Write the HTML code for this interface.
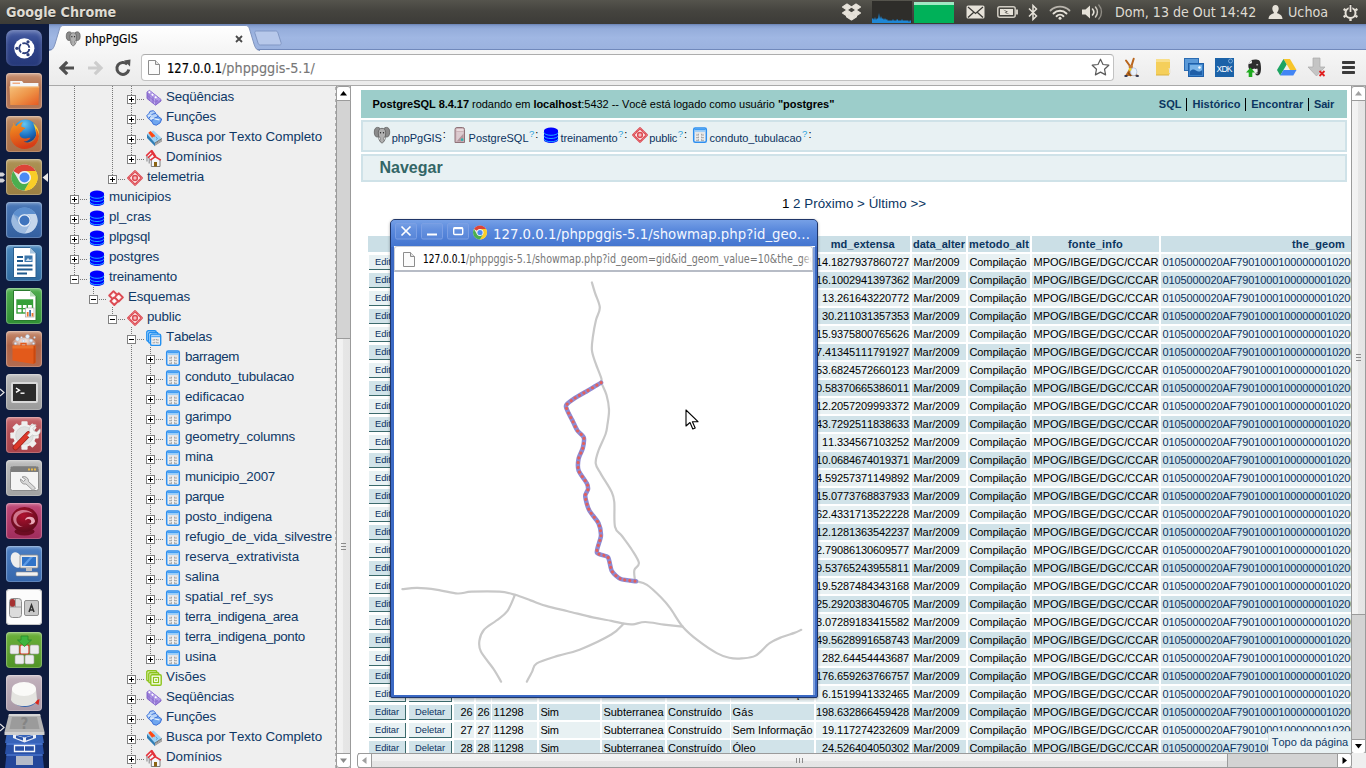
<!DOCTYPE html>
<html lang="pt-BR">
<head>
<meta charset="utf-8">
<title>phpPgGIS</title>
<style>
*{box-sizing:border-box;margin:0;padding:0}
html,body{width:1366px;height:768px;overflow:hidden;background:#fff}
body{position:relative;font-family:"Liberation Sans",sans-serif;font-size:11px;color:#000;font-kerning:none}
.abs{position:absolute}
.ui{font-family:"DejaVu Sans Condensed","DejaVu Sans","Liberation Sans",sans-serif;white-space:nowrap}
.sx{display:inline-block;transform-origin:0 50%;white-space:nowrap}
svg{display:block;overflow:visible}
/* top panel */
#panel{left:0;top:0;width:1366px;height:24px;background:linear-gradient(#55544d 0,#45443f 45%,#3c3b37 100%);color:#dfdbd2}
#panel .t{position:absolute;top:0;height:24px;line-height:24px;color:#dfdbd2}
/* launcher */
#launcher{left:0;top:24px;width:49px;height:744px;background:#0e1b3e}
.tile{position:absolute;left:5.700px;width:36.5px;height:36px;border-radius:4px;box-shadow:inset 0 0 0 1px rgba(255,255,255,.2),inset 0 2px 3px rgba(255,255,255,.3)}
/* chrome */
#tabstrip{left:49px;top:24px;width:1317px;height:26px;background:linear-gradient(#6a82b3 0,#869fd0 8%,#95addb 20%,#a0b7e3 55%,#9bb2df 100%);border-bottom:1px solid #7189bb}
#toolbar{left:49px;top:50px;width:1317px;height:36px;background:linear-gradient(#f6f6f6,#ebebeb);border-bottom:1px solid #a9a9a9}
#omni{left:141px;top:54px;width:973px;height:27px;background:#fff;border:1px solid #c2c2c2;border-top-color:#adadad;border-radius:4px}
/* frames */
#left{left:49px;top:86px;width:287px;height:682px;background:#efefef;overflow:hidden;font-size:13.33px;color:#003366}
#right{left:351px;top:86px;width:1000px;height:667px;background:#fff;overflow:hidden}
.vl{position:absolute;width:1px;background-image:linear-gradient(#777 50%,rgba(0,0,0,0) 50%);background-size:1px 2px}
.hl{position:absolute;height:1px;background-image:linear-gradient(90deg,#777 50%,rgba(0,0,0,0) 50%);background-size:2px 1px}
.ex{position:absolute;width:9px;height:9px;border:1px solid #808080;background:#fff}
.ex:before{content:"";position:absolute;left:1px;top:3px;width:5px;height:1px;background:#000}
.ex.p:after{content:"";position:absolute;left:3px;top:1px;width:1px;height:5px;background:#000}
.tt{position:absolute;height:20px;line-height:20px;white-space:nowrap;color:#0e3866}
.ic{position:absolute;width:16px;height:16px}
.sep{display:inline-block;width:1px;height:13px;background:#000;margin:0 5.200px 0 4.600px;vertical-align:-2.500px}
</style>
</head>
<body>
<!-- ===== Ubuntu top panel ===== -->
<div id="panel" class="abs ui">
  <div class="t" style="left:6px;top:-.3px;font-size:14.200px;font-weight:bold;text-shadow:0 1px 0 rgba(0,0,0,.45)"><span class="sx" style="transform:scaleX(1)">Google Chrome</span></div>
  <!-- dropbox -->
  <svg class="abs" style="left:842px;top:4px" width="19" height="17" viewBox="0 0 19 17"><g fill="#e6e2d9" stroke="#e6e2d9" stroke-width="1.100" stroke-linejoin="round"><path d="M5 0l4.500 3L5 6 .5 3z"/><path d="M14 0l4.500 3L14 6 9.500 3z"/><path d="M5 6l4.500 3L5 12 .5 9z"/><path d="M14 6l4.500 3L14 12 9.500 9z"/><path d="M9.500 10l3.500 2.300 1.500-1v1.500l-5 3.200-5-3.200v-1.500l1.500 1z"/></g></svg>
  <!-- cpu graph -->
  <div class="abs" style="left:872px;top:1px;width:40px;height:22px;background:#2e2d2a">
    <svg width="40" height="22" viewBox="0 0 40 22"><path d="M0 22V18l1-1 1 2 1-3 1 3 1-2 1 1 1-6 1 6 1-3 1 3 1-1 1 2 1-2 1 2 1-1 1 2 1-1 1 1 1-1 1 1 1-2 1 2 1-1 1 1 1-2 1 1 1 1 1-1 1 1 1-2 1 2 1-1 1 1 1-1 1 1 1-1 1 2 1-2 1 1V22z" fill="#1e87d6"/></svg>
  </div>
  <!-- mem graph -->
  <div class="abs" style="left:914px;top:2px;width:40px;height:21px;background:#00b159;border-top:3px solid #9fe8c4"></div>
  <!-- mail -->
  <svg class="abs" style="left:966px;top:5px" width="19" height="14" viewBox="0 0 19 14"><rect x=".5" y=".5" width="18" height="13" rx="1.500" fill="#e6e2d9"/><path d="M2 2l7.500 6.500L17 2M2 12.500l5.500-5M17 12.500l-5.500-5" stroke="#3c3b37" stroke-width="1.300" fill="none"/></svg>
  <!-- battery -->
  <svg class="abs" style="left:997px;top:6px" width="21" height="12" viewBox="0 0 21 12"><rect x=".8" y=".8" width="17.400" height="10.400" rx="2" fill="none" stroke="#cfcbc2" stroke-width="1.500"/><rect x="19" y="3.500" width="2" height="5" fill="#cfcbc2"/><rect x="3" y="3" width="13" height="6" fill="#e6e2d9"/><path d="M6 3.500l5 2.300-2 .7 4 2-5.500-1.800 2-.8z" fill="#3c3b37"/></svg>
  <!-- bluetooth -->
  <svg class="abs" style="left:1028px;top:4px" width="10" height="17" viewBox="0 0 10 17"><path d="M1 4.500l7.500 7.500L5 15.500V1.500L8.500 5 1 12.500" fill="none" stroke="#e6e2d9" stroke-width="1.500"/></svg>
  <!-- wifi -->
  <svg class="abs" style="left:1049px;top:5px" width="22" height="15" viewBox="0 0 22 15"><g fill="none" stroke="#e6e2d9" stroke-linecap="round"><path d="M1.500 5.500a13.500 13.500 0 0 1 19 0" stroke-width="1.800" stroke="#b9b5ad"/><path d="M4.500 8.500a9.200 9.200 0 0 1 13 0" stroke-width="1.900"/><path d="M7.500 11.200a5 5 0 0 1 7 0" stroke-width="1.900"/></g><circle cx="11" cy="13.300" r="1.500" fill="#e6e2d9"/></svg>
  <!-- sound -->
  <svg class="abs" style="left:1082px;top:4px" width="22" height="16" viewBox="0 0 22 16"><path d="M0 5.500h3.500L8 1.500v13L3.500 10.500H0z" fill="#e6e2d9"/><g fill="none" stroke-linecap="round"><path d="M10.500 5a4.500 4.500 0 0 1 0 6" stroke="#e6e2d9" stroke-width="1.600"/><path d="M13.500 3a7.500 7.500 0 0 1 0 10" stroke="#d0ccc3" stroke-width="1.500"/><path d="M16.800 1a10.500 10.500 0 0 1 0 14" stroke="#8f8c85" stroke-width="1.400"/></g></svg>
  <div class="t" style="left:1115px;font-size:14.500px"><span class="sx" style="transform:scaleX(.97)">Dom, 13 de Out 14:42</span></div>
  <!-- user -->
  <svg class="abs" style="left:1268px;top:5px" width="15" height="14" viewBox="0 0 15 14"><path d="M7.500 0c2 0 3.200 1.500 3.200 3.600 0 1.500-.6 2.900-1.500 3.700v1c2.500.8 5.300 2.200 5.300 5.700H.5c0-3.500 2.800-4.900 5.300-5.700v-1C4.900 6.500 4.300 5.100 4.300 3.600 4.300 1.500 5.500 0 7.500 0z" fill="#e6e2d9"/></svg>
  <div class="t" style="left:1288px;font-size:14.500px"><span class="sx" style="transform:scaleX(.98)">Uchoa</span></div>
  <!-- power cog -->
  <svg class="abs" style="left:1342px;top:4px" width="17" height="17" viewBox="0 0 17 17"><g fill="none" stroke="#e6e2d9"><circle cx="8.500" cy="9" r="5" stroke-width="2"/><path d="M8.500 1v2.500M8.500 14.500V17M1.600 5l2 1.200M13.400 11.800l2 1.200M1.600 13l2-1.200M13.400 6.200l2-1.200" stroke-width="2.400"/></g><rect x="6.700" y="0" width="3.600" height="9" fill="#3c3b37"/><rect x="7.600" y="1" width="1.800" height="7" fill="#e6e2d9"/></svg>
</div>
<!-- ===== Unity launcher ===== -->
<div id="launcher" class="abs">
<div class="tile" style="top:6px;background:linear-gradient(#4a60a6,#2f448b 40%,#26397a);box-shadow:inset 0 2px 4px rgba(255,255,255,.3);border-radius:7px"><svg width="37" height="37" viewBox="0 0 37 37"><g transform="translate(18.300,18.300) scale(1.16) translate(-18.500,-18)"><circle cx="18.500" cy="18" r="8.700" fill="#fff"/><circle cx="18.500" cy="18" r="4.300" fill="none" stroke="#2d3f7d" stroke-width="1.700"/><g fill="#2d3f7d"><circle cx="12.100" cy="18" r="1.400"/><circle cx="21.700" cy="12.450" r="1.400"/><circle cx="21.700" cy="23.550" r="1.400"/></g><g stroke="#fff" stroke-width="1.100"><path d="M18.500 18L25.200 18M18.500 18L15.150 12.200M18.500 18L15.150 23.800"/></g><circle cx="18.500" cy="18" r="3.200" fill="#fff"/></g></svg></div>
<div class="tile" style="top:49px;background:linear-gradient(#c99273,#b07050 40%,#b57655);"><svg width="37" height="37" viewBox="0 0 37 37"><defs><linearGradient id="gfo" x1="0" y1="0" x2="1" y2="1"><stop offset="0" stop-color="#f5c07a"/><stop offset=".5" stop-color="#ee9448"/><stop offset="1" stop-color="#e65a22"/></linearGradient></defs><path d="M4.300 8h11.700l1.500 2h14.900v5H4.300z" fill="#f4f5f7"/><path d="M6.500 10.200h7.500" stroke="#f0935a" stroke-width="1.100"/><path d="M3.500 13.500h29.700l-.8 18.600H4.300z" fill="url(#gfo)"/><path d="M3.500 13.500h29.700v.9H3.500z" fill="#f8cf9a" opacity=".8"/></svg></div>
<div class="tile" style="top:92px;background:linear-gradient(#c18f69,#b07a52 40%,#a86f48);"><svg width="37" height="37" viewBox="0 0 37 37"><defs><radialGradient id="gffb" cx=".45" cy=".2" r=".9"><stop offset="0" stop-color="#63c6f2"/><stop offset=".55" stop-color="#1e74c4"/><stop offset="1" stop-color="#16336f"/></radialGradient><linearGradient id="gffo" x1="0" y1="0" x2=".3" y2="1"><stop offset="0" stop-color="#f59a22"/><stop offset="1" stop-color="#d63c17"/></linearGradient></defs><circle cx="19.500" cy="15" r="11.500" fill="url(#gffb)"/><path d="M27 7C31 10 33.500 15 33 20.500 32.500 24 31 27 28.500 29 30.500 25 31 20 29.500 14 29 11.500 28 9 27 7z" fill="#fbd42c"/><path d="M7 6.500C8 8 9 9.500 10.500 10 12 8 14.500 6.500 17 6 15.500 8 15 9.500 15.500 11 17 11 18.500 11.500 19.500 12.500 17.500 13 16.500 14 16 15.500 14.500 16 13.500 17 13.500 18.500 14 21.500 17 23 20 22.500 22 22 23.500 21.500 24.500 22 23 24.500 20 26 17.500 25.500 21 28 26 27 28.500 23.500 30.500 20.500 31 16 29.500 12 31.500 14 33 17.500 33 20.500 32.500 27.500 26.500 33 18.500 33 10.500 33 4 26.500 4 18.500 4 14.500 5.500 11 7.500 9 7 8 6.800 7.500 7 6.500z" fill="url(#gffo)"/></svg></div>
<div class="tile" style="top:135px;background:linear-gradient(#ad9254,#9a7f43);"><svg width="37" height="37" viewBox="0 0 37 37"><circle cx="18.500" cy="18.500" r="13" fill="#e8e8e8"/><path d="M18.500 5.500a13 13 0 0 1 11.260 6.500H18.500a6.500 6.500 0 0 0-5.630 3.250L7.240 12A13 13 0 0 1 18.500 5.500z" fill="#dc4437"/><path d="M29.760 12a13 13 0 0 1-11.260 19.500l5.630-9.750a6.500 6.500 0 0 0 0-6.500z" transform="translate(0,0)" fill="#f9cd28"/><path d="M18.500 31.500A13 13 0 0 1 7.240 12l5.630 9.750a6.500 6.500 0 0 0 5.630 3.250l5.630-3.250z" fill="#4bae4f"/><path d="M29.760 12H18.500a6.500 6.500 0 0 1 5.630 9.750L18.500 31.500a13 13 0 0 0 11.260-19.500z" fill="#f9cd28"/><circle cx="18.500" cy="18.500" r="6.300" fill="#f4f4f4"/><circle cx="18.500" cy="18.500" r="5" fill="#4a8af4"/></svg></div>
<div class="tile" style="top:178px;background:linear-gradient(#4a78b8,#34609f);"><svg width="37" height="37" viewBox="0 0 37 37"><circle cx="18.500" cy="18.500" r="13" fill="#7fa6d6"/><path d="M18.500 5.500a13 13 0 0 1 11.260 6.500H18.500a6.500 6.500 0 0 0-5.630 3.250L7.240 12A13 13 0 0 1 18.500 5.500z" fill="#5d8fce"/><path d="M29.760 12H18.500a6.500 6.500 0 0 1 5.630 9.750L18.500 31.500a13 13 0 0 0 11.260-19.500z" fill="#c6d7ec"/><path d="M18.500 31.500A13 13 0 0 1 7.240 12l5.630 9.750a6.500 6.500 0 0 0 5.630 3.250l5.630-3.250z" fill="#9dbbe0"/><circle cx="18.500" cy="18.500" r="6.300" fill="#eef3fa"/><circle cx="18.500" cy="18.500" r="5" fill="#3f74bd"/></svg></div>
<div class="tile" style="top:221px;background:linear-gradient(#4a88bd,#2e6a9f);"><svg width="37" height="37" viewBox="0 0 37 37"><path d="M7.500 2.500h16.500l6 6v24H7.500z" fill="#fff" stroke="#2a5f8f" stroke-width="1"/><path d="M24 2.500v6h6z" fill="#a9c7e0"/><g fill="#1f5a8e"><rect x="11" y="11" width="6" height="2"/><rect x="11" y="15" width="6" height="2"/><rect x="11" y="19.500" width="15.500" height="2"/><rect x="11" y="23.500" width="15.500" height="2"/><rect x="11" y="27.500" width="10" height="2"/><rect x="18.500" y="10.500" width="8" height="6.500" fill="#3d78ad"/></g><path d="M19.500 16l2.500-3 2 2 1.500-1.500v2.500z" fill="#cfe0ee"/></svg></div>
<div class="tile" style="top:264px;background:linear-gradient(#4fae4d,#2f8f33);"><svg width="37" height="37" viewBox="0 0 37 37"><path d="M7.500 2.500h16.500l6 6v24H7.500z" fill="#fff" stroke="#2b7a2e" stroke-width="1"/><path d="M24 2.500v6h6z" fill="#b5ddb6"/><g fill="none" stroke="#36a03a" stroke-width="1.400"><rect x="11" y="12" width="15.500" height="13"/><path d="M11 16.300h15.500M11 20.600h15.500M16.200 12v13M21.300 12v13"/></g><rect x="11" y="12" width="15.500" height="4.300" fill="#36a03a"/><rect x="19.500" y="20" width="8.500" height="9" fill="#fff" stroke="#9a9a9a" stroke-width=".6"/><g><rect x="20.800" y="24" width="1.800" height="4.500" fill="#e8772e"/><rect x="23.200" y="22" width="1.800" height="6.500" fill="#3d78ad"/><rect x="25.600" y="25" width="1.800" height="3.500" fill="#e8772e"/></g></svg></div>
<div class="tile" style="top:307px;background:linear-gradient(#c78d70,#ad6245 40%,#b36b50);"><svg width="37" height="37" viewBox="0 0 37 37"><defs><radialGradient id="gsc" cx=".5" cy=".3" r=".6"><stop offset="0" stop-color="#fff" stop-opacity=".95"/><stop offset="1" stop-color="#fff" stop-opacity="0"/></radialGradient></defs><ellipse cx="18" cy="12.500" rx="12" ry="6" fill="url(#gsc)"/><g fill="#e6eef8" stroke="#9fb3cc" stroke-width=".4"><circle cx="11.500" cy="8" r="1.900"/><circle cx="21.500" cy="5.500" r="2"/><circle cx="17.500" cy="10" r="1.500"/><circle cx="25" cy="9.500" r="1.600"/><circle cx="15.500" cy="6.500" r="1"/><circle cx="28.500" cy="6.500" r=".9"/><circle cx="9.500" cy="12.500" r="1.200"/><circle cx="27.500" cy="12.500" r="1.100"/></g><path d="M6.500 14.500h23V31.500l-2 1.500L6.500 29.500z" fill="#e35a1b"/><path d="M6.500 14.500h23v3h-23z" fill="#ee7a35" opacity=".7"/><path d="M27.500 15v18l2-1.500V14.500z" fill="#c9480f"/><path d="M15 15v-2.500h5V15" fill="none" stroke="#e35a1b" stroke-width="1.300"/></svg></div>
<div class="tile" style="top:350px;background:linear-gradient(#b9b9b9,#9a9a9a);"><svg width="37" height="37" viewBox="0 0 37 37"><rect x="5" y="8" width="27" height="21" rx="2" fill="#d9d9d9"/><rect x="7" y="10" width="23" height="17" fill="#2b2b2b"/><path d="M10 14l3.500 2.200L10 18.400" fill="none" stroke="#fff" stroke-width="1.400"/><rect x="14.500" y="18.500" width="4" height="1.400" fill="#fff"/></svg></div>
<div class="tile" style="top:393px;background:linear-gradient(#c9686d,#b34c53 45%,#a9434b);"><svg width="37" height="37" viewBox="0 0 37 37"><g fill="#efefef"><rect x="15.400" y="4.300" width="6.200" height="28.400" rx=".8" transform="rotate(0 18.500 18.500)"/><rect x="15.400" y="4.300" width="6.200" height="28.400" rx=".8" transform="rotate(45 18.500 18.500)"/><rect x="15.400" y="4.300" width="6.200" height="28.400" rx=".8" transform="rotate(90 18.500 18.500)"/><rect x="15.400" y="4.300" width="6.200" height="28.400" rx=".8" transform="rotate(135 18.500 18.500)"/><circle cx="18.500" cy="18.500" r="11.300"/></g><circle cx="18.500" cy="18.500" r="8.800" fill="#e0e0e0" stroke="#d0d0d0" stroke-width=".8"/><path d="M9.500 30.500L22.500 17" stroke="#9c1f18" stroke-width="5.600" stroke-linecap="round"/><path d="M9.500 30.500L22.500 17" stroke="#dc392b" stroke-width="4.200" stroke-linecap="round"/><path d="M21.500 18.500l2.500-3c-1.500-2.500-.8-5.500 1.500-7 1.500-1 3.200-1.200 4.800-.5l-3.300 3.300 1 2.700 2.700 1 3.300-3.300c.7 1.600.5 3.300-.5 4.800-1.500 2.300-4.500 3-7 1.500l-3 2.500z" fill="#f2f2f2" stroke="#b9b9b9" stroke-width=".6"/></svg></div>
<div class="tile" style="top:436px;background:linear-gradient(#bdbdbd,#a2a2a2);"><svg width="37" height="37" viewBox="0 0 37 37"><rect x="4.500" y="6.500" width="28" height="24" rx="2" fill="#f4f4f4" stroke="#8a8a8a"/><rect x="5" y="7" width="27" height="5" fill="#7d7d7d"/><g fill="#e8b84a"><rect x="22" y="8.500" width="2" height="2"/><rect x="25" y="8.500" width="2" height="2"/><rect x="28" y="8.500" width="2" height="2"/></g><path d="M16 17a4.500 4.500 0 0 1 6.500 4.500l7 6.500-2.500 2.500-7-6.500a4.500 4.500 0 0 1-5.500-5l3 2.500 2-2z" fill="#d9d9d9" stroke="#8a8a8a" stroke-width=".8"/></svg></div>
<div class="tile" style="top:479px;background:linear-gradient(#c04a78,#a02c5c);"><svg width="37" height="37" viewBox="0 0 37 37"><defs><radialGradient id="gdb" cx=".45" cy=".35" r=".7"><stop offset="0" stop-color="#b0122f"/><stop offset="1" stop-color="#5a0a1b"/></radialGradient></defs><ellipse cx="18.500" cy="28.500" rx="10" ry="4" fill="#6d0c22"/><ellipse cx="18.500" cy="16.500" rx="13.500" ry="12.500" fill="url(#gdb)"/><path d="M8 12c3-6 14-7 19-1-5-3-13-2-16 3-2 4 1 9 6 10-6 1-12-5-9-12z" fill="#d98aa0" opacity=".85"/><path d="M27 14.500c-4-2-8 0-8 3 2-2 5-2 6 0 1 2-1 4-3 3 2 2 6 1 7-2 0-2-1-3-2-4z" fill="#e9a9b9"/></svg></div>
<div class="tile" style="top:522px;background:linear-gradient(#4c7fc4,#3566ab);"><svg width="37" height="37" viewBox="0 0 37 37"><ellipse cx="10.500" cy="14" rx="5.500" ry="8" fill="#eee" transform="rotate(-20 10.500 14)"/><rect x="14" y="9" width="18" height="13" rx="1" fill="#e8e8e8" stroke="#8a8a8a" stroke-width=".8"/><rect x="16" y="11" width="14" height="9" fill="#2f73c8"/><path d="M16 20l8-9h3l-8 9z" fill="#5d9be6"/><rect x="20" y="22" width="6" height="3" fill="#bdbdbd"/><rect x="10" y="26" width="22" height="4" rx="1" fill="#f1f1f1" stroke="#8a8a8a" stroke-width=".6"/></svg></div>
<div class="tile" style="top:565px;background:#fcfcfc;box-shadow:inset 0 0 0 1px #c8c8c8"><svg width="37" height="37" viewBox="0 0 37 37"><rect x="3.500" y="9.500" width="12" height="19" rx="3" fill="#dcdcdc" stroke="#8d8d8d"/><rect x="4" y="10" width="5" height="8" rx="2" fill="#a63232"/><path d="M9.500 10v8M4 18h11" stroke="#8d8d8d" stroke-width=".8"/><rect x="18.500" y="11.500" width="14" height="15" rx="1.500" fill="#c9c9c9" stroke="#8d8d8d"/><path d="M23 23l2.500-7 2.500 7M24 21h3" fill="none" stroke="#333" stroke-width="1.500"/></div>
<div class="tile" style="top:608px;background:linear-gradient(#6bb03a,#519426);"><svg width="37" height="37" viewBox="0 0 37 37"><g fill="#ececec" stroke="#9a9a9a" stroke-width=".6"><rect x="4" y="13" width="9" height="9" rx="1.500"/><rect x="14" y="13" width="9" height="9" rx="1.500" stroke="#d43b2a" stroke-width="1.200"/><rect x="24" y="13" width="9" height="9" rx="1.500"/><rect x="9" y="23" width="9" height="9" rx="1.500"/><rect x="19" y="23" width="9" height="9" rx="1.500"/></g><path d="M15 4h7v4h3.500l-7 6.500-7-6.500H15z" fill="#3fb53f" stroke="#2a8a2a" stroke-width=".8"/></svg></div>
<div class="tile" style="top:651px;background:linear-gradient(#c3b3be,#a998a5);"><svg width="37" height="37" viewBox="0 0 37 37"><path d="M8 25a12 9 0 0 0 22 0" fill="none" stroke="#2f63b0" stroke-width="3"/><path d="M27.500 27l6-3-1 6z" fill="#d9261c"/><path d="M6 14l-1 11c2 4 7 6 13 6s11-2 13-6l-1-11z" fill="#e4e4e0"/><ellipse cx="18" cy="14" rx="12" ry="7" fill="#fafaf8"/></svg></div>
<!-- stacked workspace/trash icons -->
<svg class="abs" style="left:4px;top:688px" width="41" height="56" viewBox="0 0 41 56">
<path d="M2.500 42h36l1.500 14H1z" fill="#24479a"/><path d="M2.500 42h36l.3 2H2.200z" fill="#3f69c0"/><rect x="12" y="44" width="17" height="9" fill="#d8d8d4" opacity=".8"/>
<path d="M2.500 31h36l1.500 11H1z" fill="#2850a6"/><path d="M2.500 31h36l.3 2H2.200z" fill="#4470c8"/><path d="M10.500 33.500h20v6h-20z" fill="none" stroke="#f2f5fb" stroke-width="1.300"/><path d="M20.500 33.500v6" stroke="#f2f5fb" stroke-width="1"/>
<path d="M3 20h35l2 11H1z" fill="#3763b9"/><path d="M9 22l11.500 3.500L32 22v4l-11.500 4.500L9 26z" fill="#e9eef8"/><path d="M12 23.500l7 2v3l-7-2.500zM29 23.500l-7 2v3l7-2.500z" fill="#2d55a8"/>
<path d="M5 2h31l4.500 18H.5z" fill="#b4b4b4"/><path d="M5 2h31l.5 2h-32z" fill="#d6d6d6"/><path d="M8 5h25l2.500 12h-30z" fill="#9b9b9b"/><path d="M.5 20h40v3H.5z" fill="#cfcfcf"/>
</svg>
<div class="abs ui" style="left:14px;top:691px;width:21px;text-align:center;font-size:15px;font-weight:bold;color:#858585;line-height:18px">?</div>
<!-- active / running arrows -->
<svg class="abs" style="left:0;top:0" width="49" height="744" viewBox="0 0 49 744"><g fill="#e8e8e8"><path d="M0 148.500h3l2 2-2 2H0zM0 154.500h3l2 2-2 2H0z" opacity=".9"/><path d="M48 149l-5.500 4.500 5.500 4.500z"/></g><g fill="none" stroke="#e8e8e8" stroke-width="1.200"><path d="M0 365l4 3.500-4 3.500"/><path d="M0 700l4 3.500-4 3.500"/></g></svg>
</div>
<!-- ===== Chrome window chrome ===== -->
<div id="tabstrip" class="abs"></div>
<div id="toolbar" class="abs"></div>
<!-- active tab -->
<svg class="abs" style="left:49px;top:24px" width="240" height="27" viewBox="0 0 240 27">
  <defs><linearGradient id="gtab" x1="0" y1="0" x2="0" y2="1"><stop offset="0" stop-color="#ffffff"/><stop offset="1" stop-color="#f5f5f5"/></linearGradient></defs>
  <path d="M0 27C4 26 5 23 6 20L10.500 5C11.500 2 12.500 1.500 15 1.500H196C198.500 1.500 199.500 2 200.500 5L205 20C206 23 207 26 211 27z" fill="url(#gtab)"/>
  <path d="M0 26.500C4 26 5 23 6 20L10.500 5C11.500 2 12.500 1.500 15 1.500H196C198.500 1.500 199.500 2 200.500 5L205 20C206 23 207 26 211 26.500" fill="none" stroke="#7f93bd" stroke-width="1"/>
  <!-- new tab button -->
  <path d="M207.500 7h19c1.500 0 2 .5 2.500 2l3 9.500c.5 1.500 0 2.500-1.500 2.500h-19c-1.500 0-2-.5-2.500-2l-3-9.500c-.5-1.500 0-2.500 1.500-2.500z" fill="#b7c8ea" stroke="#8197c4" stroke-width="1"/>
  <!-- close x -->
  <path d="M187 12l6 6M193 12l-6 6" stroke="#4a4a4a" stroke-width="1.800"/>
  <!-- favicon elephant -->
  <g transform="translate(17,7.500) scale(.9)"><ellipse cx="3.600" cy="5.200" rx="3.300" ry="4.800" fill="#8b8b8b" stroke="#5e5e5e" stroke-width=".8"/><ellipse cx="12.400" cy="5.200" rx="3.300" ry="4.800" fill="#8b8b8b" stroke="#5e5e5e" stroke-width=".8"/><path d="M8 1.300c2.300 0 3.700 1.700 3.700 4.500 0 2.500-.5 4.500-1 6.500-.5 2.200-1.500 3.600-2.700 3.600s-2.200-1.400-2.700-3.600c-.5-2-1-4-1-6.500C4.300 3 5.700 1.300 8 1.300z" fill="#b0b0b0" stroke="#5e5e5e" stroke-width=".8"/><ellipse cx="5.600" cy="11.600" rx=".8" ry="1.500" fill="#fff" stroke="#555" stroke-width=".6"/><ellipse cx="10.400" cy="11.600" rx=".8" ry="1.500" fill="#fff" stroke="#555" stroke-width=".6"/><circle cx="6.500" cy="5.800" r=".7" fill="#222"/><circle cx="9.500" cy="5.800" r=".7" fill="#222"/></g>
</svg>
<div class="abs ui" style="left:85px;top:30px;height:18px;line-height:18px;font-size:12.500px;color:#000;-webkit-text-stroke:.15px #000"><span class="sx" style="transform:scaleX(.965)">phpPgGIS</span></div>
<!-- nav buttons -->
<svg class="abs" style="left:56px;top:56.500px" width="80" height="22" viewBox="0 0 80 22">
  <g fill="none" stroke-linecap="butt" stroke-linejoin="miter">
    <path d="M18 11H6.500M11.200 4.800L5 11l6.200 6.200" stroke="#505050" stroke-width="3.200"/>
    <path d="M32 11h11.500M38.800 4.800L45 11l-6.200 6.200" stroke="#cdcdcd" stroke-width="3.200"/>
    <path d="M71.300 7.300A6 6 0 1 0 72.800 12.500" stroke="#505050" stroke-width="3"/>
  </g>
  <path d="M68 3.500L74.500 2.500 74 9.500z" fill="#505050"/>
</svg>
<div id="omni" class="abs"></div>
<!-- page icon -->
<svg class="abs" style="left:148px;top:60px" width="12" height="15" viewBox="0 0 12 15"><path d="M.5.500h7l4 4v10H.5z" fill="#fbfbfb" stroke="#8d8d8d"/><path d="M7.500.500v4h4" fill="#e3e3e3" stroke="#8d8d8d"/></svg>
<div class="abs ui" style="left:167px;top:57px;height:22px;line-height:22px;font-size:14.500px;color:#000;-webkit-text-stroke:.2px #000"><span class="sx" style="transform:scaleX(.885)">127.0.0.1</span></div>
<div class="abs ui" style="left:221.500px;top:57px;height:22px;line-height:22px;font-size:14.500px;color:#777;-webkit-text-stroke:.1px #777"><span class="sx" style="transform:scaleX(.985)">/phppggis-5.1/</span></div>
<!-- star -->
<svg class="abs" style="left:1091px;top:58px" width="19" height="18" viewBox="0 0 19 18"><path d="M9.500 1.200l2.500 5.300 5.800.7-4.300 4 1.100 5.700-5.100-2.800-5.100 2.800 1.100-5.700-4.300-4 5.800-.7z" fill="#fff" stroke="#5a5a5a" stroke-width="1.200" stroke-linejoin="round"/></svg>
<!-- extension icons -->
<svg class="abs" style="left:1120px;top:56px" width="240" height="24" viewBox="0 0 240 24">
  <!-- rabbit -->
  <g transform="translate(4,2)"><path d="M2 2.500L6.300 8.500M9.700.8L7.300 8.500" stroke="#b8641c" stroke-width="2" stroke-linecap="round" fill="none"/><path d="M.8 18L6.800 8.500 14.500 18z" fill="#b86a22"/><circle cx="6.800" cy="9" r="2.200" fill="#c47a35"/><ellipse cx="9.700" cy="13.800" rx="3.200" ry="4" fill="#eaf1fb" stroke="#a9bbd8" stroke-width=".7"/><circle cx="6" cy="11.500" r="1.400" fill="#f3d21f"/><ellipse cx="2" cy="18" rx="1.800" ry="1" fill="#2c3554"/><ellipse cx="13.300" cy="18" rx="1.800" ry="1" fill="#2c3554"/><path d="M4 14.500l3 3.500" stroke="#8a4a12" stroke-width="1.200"/></g>
  <!-- yellow note -->
  <g transform="translate(35,3)"><path d="M1 0h12a2 2 0 0 1 2 2v12a2 2 0 0 1-2 2H1z" fill="#f5cf5a"/><path d="M1 0h12a2 2 0 0 1 2 2v1H1z" fill="#f9df8a"/><path d="M13.500 9a2 2 0 0 1 2 2v3h-1.500v-3z" fill="#e9e4d6"/><path d="M1 16h13" stroke="#d9b03e" stroke-width="1"/></g>
  <!-- images -->
  <g transform="translate(64,2)"><rect x=".5" y=".500" width="14" height="12" fill="#5b9ad8" stroke="#2b6cb3"/><rect x="4.500" y="5.500" width="15" height="13" fill="#3b82c9" stroke="#1f5fa8"/><rect x="6" y="7" width="12" height="10" fill="#79b4e8"/><path d="M6 17v-3.500c2-2.500 4-2.500 6-1s4 1.500 6-.5V17z" fill="#1f5fa8"/><circle cx="15.500" cy="9.500" r="1.200" fill="#fff"/></g>
  <!-- XDK -->
  <g transform="translate(95,2)"><rect width="19" height="19" fill="#1b62a8"/><text x="9.500" y="13.500" text-anchor="middle" font-family="Liberation Sans, sans-serif" font-size="8.500" fill="#fff" textLength="16">XDK</text><circle cx="15.500" cy="3" r="2" fill="none" stroke="#9cc3ea" stroke-width=".7"/></g>
  <!-- evernote -->
  <g transform="translate(126,3)"><path d="M5.500 1C7.500.3 11.500.3 13 1.200 14.500 2.500 15 6 15 9.500 15 13.500 14 16.500 11.500 16.500 10 16.500 9.500 15.800 9.500 14.800S10.500 13.500 11.500 13.500C11.800 12 11.700 10.500 11.200 9.500 10.200 10.100 8.900 10 8 9.500 7 10.500 5.500 11 4 10.500 2.500 10 2 7.500 2.500 5z" fill="#2d2d2d"/><path d="M2.300 5L5.800 1v3.200z" fill="#fff"/><path d="M10.300 5.800h1.800" stroke="#e8e8e8" stroke-width="1"/><path d="M10 13.500c0 1 .8 1.300 1.500 1" stroke="#dcdcdc" stroke-width=".9" fill="none"/><path d="M4.500 8.500l4.500 5H6.300V18H2.700v-4.500H0z" fill="#1faa1f"/></g>
  <!-- drive -->
  <g transform="translate(157,3)"><path d="M6.500 0h6.500l6.500 11h-6.500z" fill="#f7c52b"/><path d="M6.500 0L0 11l3.200 5.500L9.700 5.500z" fill="#1da462"/><path d="M6.500 11h13l-3.200 5.500H3.200z" fill="#4285f4"/></g>
  <!-- download arrow -->
  <g transform="translate(188,2)"><path d="M5 0h7v9h5l-8.500 9L0 9h5z" fill="#c4c4c4" stroke="#a9a9a9" stroke-width=".7"/><path d="M11.500 13l5 5M16.500 13l-5 5" stroke="#e02020" stroke-width="1.800"/></g>
  <!-- menu -->
  <g fill="#3a3a3a"><rect x="222" y="5" width="13" height="3" rx=".8"/><rect x="222" y="10" width="13" height="3" rx=".8"/><rect x="222" y="15" width="13" height="3" rx=".8"/></g>
</svg>
<!-- ===== left frame: object tree ===== -->
<div id="left" class="abs">
<i class="vl" style="left:25px;top:0px;height:191px"></i>
<i class="vl" style="left:63px;top:0px;height:91px"></i>
<i class="vl" style="left:82px;top:0px;height:71px"></i>
<i class="vl" style="left:44px;top:201px;height:10px"></i>
<i class="vl" style="left:63px;top:221px;height:10px"></i>
<i class="vl" style="left:82px;top:241px;height:441px"></i>
<i class="vl" style="left:101px;top:261px;height:310px"></i>
<i class="hl" style="left:88px;top:13px;width:8px"></i>
<i class="ex p" style="left:78px;top:9px"></i><svg class="ic" style="left:96.80000000000001px;top:3.5999999999999943px" viewBox="0 0 16 16"><path d="M1 2L3.500.4 15 9.500V11L9.500 15.200 1 8.500z" fill="#9a7ed8" stroke="#7c5bc6" stroke-width=".9" stroke-linejoin="round"/><path d="M1.200 2.100L3.500.6 14.800 9.600 12.400 11.300z" fill="#b49eea"/><g fill="#fff"><rect x="2.400" y="1.300" width="1.900" height="1.700" transform="rotate(38 3.300 2.200)"/><rect x="5.600" y="3.900" width="1.900" height="1.700" transform="rotate(38 6.500 4.700)"/><rect x="8.800" y="6.500" width="1.900" height="1.700" transform="rotate(38 9.700 7.300)"/></g><path d="M5 5.500v6.300M8.500 8.300v6" stroke="#c7b6f0" stroke-width=".8"/><path d="M1.300 5.300L9.500 12 12.300 10" fill="none" stroke="#8465cc" stroke-width=".6"/></svg><span class="tt" style="left:117px;top:1px"><span style="letter-spacing:-0.166px">Seqüências</span></span>
<i class="hl" style="left:88px;top:33px;width:8px"></i>
<i class="ex p" style="left:78px;top:29px"></i><svg class="ic" style="left:96.80000000000001px;top:23.599999999999994px" viewBox="0 0 16 16"><g stroke="#3a6fd8" stroke-width="1" stroke-linejoin="round"><path d="M.7 5.800L3 3.300 4 1.300 7.300.7 9.800 3 7.500 5.500 5 8.500 2.500 8.800z" fill="#b5d3f8"/><path d="M2.800 8.300L5 5.800 6.500 4 9.800 3.500 12.300 6 10 8.500 7.500 11 5 11.300z" fill="#b5d3f8"/><path d="M5.500 11L8 8.300 12.300 6.500 15.700 9 14.200 12.800 10.300 15.200 7.300 14.300z" fill="#6fa6ef"/></g><path d="M8.500 8.800l5 1" stroke="#e6f0fc" stroke-width="1.300"/><path d="M2 5.800h4M4.300 8.300h4" stroke="#eaf3fd" stroke-width=".9"/></svg><span class="tt" style="left:117px;top:21px"><span style="letter-spacing:-0.161px">Funções</span></span>
<i class="hl" style="left:88px;top:53px;width:8px"></i>
<i class="ex p" style="left:78px;top:49px"></i><svg class="ic" style="left:96.80000000000001px;top:43.599999999999994px" viewBox="0 0 16 16"><path d="M1 4L7.500.5 16 8.500 9 13z" fill="#9ed3f5"/><path d="M1 4L9 13v3.200L1 8z" fill="#2f7db5"/><path d="M9 13L16 8.500V12L9 16.200z" fill="#e9e9e9"/><path d="M9 14.100L16 9.700M9 15.200L16 10.900" stroke="#6f6f6f" stroke-width=".7"/><path d="M9 13L16 8.500" stroke="#4a4a4a" stroke-width=".8"/><path d="M2.300 2.700L4.500 1 9 5.600 8.300 7.200 7 6.400 6.300 7.900z" fill="#ff4a12"/><path d="M9.500 6.500l2 2-1.500 1" fill="none" stroke="#4b9cd3" stroke-width=".8"/></svg><span class="tt" style="left:117px;top:41px"><span style="letter-spacing:-0.076px">Busca por Texto Completo</span></span>
<i class="hl" style="left:88px;top:73px;width:8px"></i>
<i class="ex p" style="left:78px;top:69px"></i><svg class="ic" style="left:96.80000000000001px;top:63.599999999999994px" viewBox="0 0 16 16"><path d="M1 6v5.500h2V13.500h2.300V16.500h8.700V10L9.300 6.500 5.400.700z" fill="#f4f6fb"/><path d="M1 6v5.500M3.200 8v5.500M5.300 10v6.500h8.700V10" fill="none" stroke="#6f6f6f" stroke-width=".9"/><path d="M.2 5.900L5.400.7 9.300 6.700" fill="none" stroke="#e3333c" stroke-width="1.600" stroke-linejoin="round"/><path d="M2 7.800L7 3M4.300 10.100L9.300 6.700L14.800 10.100" fill="none" stroke="#e3333c" stroke-width="1.600" stroke-linejoin="round"/><path d="M5.400.7L9.300 6.700" stroke="#e3333c" stroke-width="2.400"/><rect x="8" y="12" width="3" height="4.500" fill="#8a6414"/></svg><span class="tt" style="left:117px;top:61px"><span style="letter-spacing:-0.038px">Domínios</span></span>
<i class="hl" style="left:69px;top:93px;width:8px"></i>
<i class="ex p" style="left:59px;top:89px"></i><svg class="ic" style="left:77.8px;top:83.6px" viewBox="0 0 16 16"><path d="M8 1.200L14.800 8 8 14.800 1.200 8z" fill="#fdf3f3" stroke="#dc4a52" stroke-width="2.300" stroke-linejoin="round"/><path d="M8 1.200L14.800 8 8 14.800 1.200 8z" fill="none" stroke="#f3b4b7" stroke-width=".7" stroke-dasharray="1 1"/><circle cx="8" cy="8" r="2.400" fill="#f5b9bc" stroke="#dc4a52" stroke-width="1.500"/></svg><span class="tt" style="left:98px;top:81px"><span style="letter-spacing:-0.153px">telemetria</span></span>
<i class="hl" style="left:31px;top:113px;width:8px"></i>
<i class="ex p" style="left:21px;top:109px"></i><svg class="ic" style="left:39.8px;top:103.6px" viewBox="0 0 16 16"><g fill="#0000ff"><ellipse cx="8" cy="3.500" rx="7" ry="3"/><path d="M1 3.500h14v9.500H1z"/><ellipse cx="8" cy="13" rx="7" ry="3"/></g><g fill="none" stroke="#1ea7ff" stroke-width="1"><path d="M1 5.500a7 2.800 0 0 0 14 0"/><path d="M1 8.700a7 2.800 0 0 0 14 0"/><path d="M1 11.900a7 2.800 0 0 0 14 0"/></g></svg><span class="tt" style="left:60px;top:101px"><span style="letter-spacing:-0.097px">municipios</span></span>
<i class="hl" style="left:31px;top:133px;width:8px"></i>
<i class="ex p" style="left:21px;top:129px"></i><svg class="ic" style="left:39.8px;top:123.6px" viewBox="0 0 16 16"><g fill="#0000ff"><ellipse cx="8" cy="3.500" rx="7" ry="3"/><path d="M1 3.500h14v9.500H1z"/><ellipse cx="8" cy="13" rx="7" ry="3"/></g><g fill="none" stroke="#1ea7ff" stroke-width="1"><path d="M1 5.500a7 2.800 0 0 0 14 0"/><path d="M1 8.700a7 2.800 0 0 0 14 0"/><path d="M1 11.900a7 2.800 0 0 0 14 0"/></g></svg><span class="tt" style="left:60px;top:121px"><span style="letter-spacing:-0.139px">pl_cras</span></span>
<i class="hl" style="left:31px;top:153px;width:8px"></i>
<i class="ex p" style="left:21px;top:149px"></i><svg class="ic" style="left:39.8px;top:143.6px" viewBox="0 0 16 16"><g fill="#0000ff"><ellipse cx="8" cy="3.500" rx="7" ry="3"/><path d="M1 3.500h14v9.500H1z"/><ellipse cx="8" cy="13" rx="7" ry="3"/></g><g fill="none" stroke="#1ea7ff" stroke-width="1"><path d="M1 5.500a7 2.800 0 0 0 14 0"/><path d="M1 8.700a7 2.800 0 0 0 14 0"/><path d="M1 11.900a7 2.800 0 0 0 14 0"/></g></svg><span class="tt" style="left:60px;top:141px"><span style="letter-spacing:-0.177px">plpgsql</span></span>
<i class="hl" style="left:31px;top:173px;width:8px"></i>
<i class="ex p" style="left:21px;top:169px"></i><svg class="ic" style="left:39.8px;top:163.6px" viewBox="0 0 16 16"><g fill="#0000ff"><ellipse cx="8" cy="3.500" rx="7" ry="3"/><path d="M1 3.500h14v9.500H1z"/><ellipse cx="8" cy="13" rx="7" ry="3"/></g><g fill="none" stroke="#1ea7ff" stroke-width="1"><path d="M1 5.500a7 2.800 0 0 0 14 0"/><path d="M1 8.700a7 2.800 0 0 0 14 0"/><path d="M1 11.900a7 2.800 0 0 0 14 0"/></g></svg><span class="tt" style="left:60px;top:161px"><span style="letter-spacing:-0.141px">postgres</span></span>
<i class="hl" style="left:31px;top:193px;width:8px"></i>
<i class="ex m" style="left:21px;top:189px"></i><svg class="ic" style="left:39.8px;top:183.60000000000002px" viewBox="0 0 16 16"><g fill="#0000ff"><ellipse cx="8" cy="3.500" rx="7" ry="3"/><path d="M1 3.500h14v9.500H1z"/><ellipse cx="8" cy="13" rx="7" ry="3"/></g><g fill="none" stroke="#1ea7ff" stroke-width="1"><path d="M1 5.500a7 2.800 0 0 0 14 0"/><path d="M1 8.700a7 2.800 0 0 0 14 0"/><path d="M1 11.900a7 2.800 0 0 0 14 0"/></g></svg><span class="tt" style="left:60px;top:181px"><span style="letter-spacing:-0.218px">treinamento</span></span>
<i class="hl" style="left:50px;top:213px;width:8px"></i>
<i class="ex m" style="left:40px;top:209px"></i><svg class="ic" style="left:58.8px;top:203.60000000000002px" viewBox="0 0 16 16"><g fill="#fbe4e5" stroke="#dc4a52" stroke-width="1.900" stroke-linejoin="round"><path d="M5.500 1.200L9.800 5.500 5.500 9.800 1.200 5.500z"/><path d="M10.700 3.200L14.900 7.400 10.700 11.600 6.500 7.400z"/><path d="M6.300 7.200L10.200 11.100 6.300 15 2.400 11.100z"/></g><g fill="#fff"><rect x="4.500" y="4.500" width="2" height="2"/><rect x="9.700" y="6.400" width="2" height="2"/><rect x="5.300" y="10.100" width="2" height="2"/></g></svg><span class="tt" style="left:79px;top:201px"><span style="letter-spacing:-0.122px">Esquemas</span></span>
<i class="hl" style="left:69px;top:233px;width:8px"></i>
<i class="ex m" style="left:59px;top:229px"></i><svg class="ic" style="left:77.8px;top:223.60000000000002px" viewBox="0 0 16 16"><path d="M8 1.200L14.800 8 8 14.800 1.200 8z" fill="#fdf3f3" stroke="#dc4a52" stroke-width="2.300" stroke-linejoin="round"/><path d="M8 1.200L14.800 8 8 14.800 1.200 8z" fill="none" stroke="#f3b4b7" stroke-width=".7" stroke-dasharray="1 1"/><circle cx="8" cy="8" r="2.400" fill="#f5b9bc" stroke="#dc4a52" stroke-width="1.500"/></svg><span class="tt" style="left:98px;top:221px"><span style="letter-spacing:-0.138px">public</span></span>
<i class="hl" style="left:88px;top:253px;width:8px"></i>
<i class="ex m" style="left:78px;top:249px"></i><svg class="ic" style="left:96.80000000000001px;top:243.60000000000002px" viewBox="0 0 16 16"><g stroke="#2390f0" stroke-width="1.400"><rect x=".8" y=".800" width="9.400" height="10.500" rx="1.500" fill="#d6ebfc"/><rect x="2.600" y="2.500" width="9.400" height="10.500" rx="1.500" fill="#d6ebfc"/><rect x="4.500" y="4.200" width="10.200" height="11.200" rx="1.500" fill="#efefef"/></g><path d="M5.200 4.900h8.800v2.300H5.200z" fill="#55a9f5"/><path d="M5.400 5.300h8.400" stroke="#e4f1fd" stroke-width=".7"/><g stroke="#9c9c9c" stroke-width=".9" fill="none"><path d="M6.500 10h2.300V9M10.500 9v1h2.300M6.500 12.800h2.300v-1M10.500 11.800v1h2.300"/></g></svg><span class="tt" style="left:117px;top:241px"><span style="letter-spacing:-0.203px">Tabelas</span></span>
<i class="hl" style="left:107px;top:273px;width:8px"></i>
<i class="ex p" style="left:97px;top:269px"></i><svg class="ic" style="left:115.80000000000001px;top:263.6px" viewBox="0 0 16 16"><rect x="1.700" y="1" width="12.600" height="14.200" rx="1.500" fill="#ededed" stroke="#2d8ff0" stroke-width="1.500"/><path d="M2.400 1.700h11.200v1.500H2.400z" fill="#3f9df4"/><path d="M2.400 3.200h11.200v1.600H2.400z" fill="#8fc8f9"/><path d="M3.300 5.500h9.400v1H3.300z" fill="#dcdcdc"/><g stroke="#9c9c9c" stroke-width=".9" fill="none"><path d="M4 8h3M9 8h3M4 10.700h3M9 10.700h3M4 13.300h3M9 13.300h3"/><path d="M6.600 6.800v1.200M6.600 9.500v1.200M6.600 12.100v1.200M9.400 6.800v1.200M9.400 9.500v1.200M9.400 12.100v1.200" stroke-width=".8"/></g><path d="M8 6.200v8" stroke="#f8f8f8" stroke-width="1"/></svg><span class="tt" style="left:136px;top:261px"><span style="letter-spacing:-0.381px">barragem</span></span>
<i class="hl" style="left:107px;top:293px;width:8px"></i>
<i class="ex p" style="left:97px;top:289px"></i><svg class="ic" style="left:115.80000000000001px;top:283.6px" viewBox="0 0 16 16"><rect x="1.700" y="1" width="12.600" height="14.200" rx="1.500" fill="#ededed" stroke="#2d8ff0" stroke-width="1.500"/><path d="M2.400 1.700h11.200v1.500H2.400z" fill="#3f9df4"/><path d="M2.400 3.200h11.200v1.600H2.400z" fill="#8fc8f9"/><path d="M3.300 5.500h9.400v1H3.300z" fill="#dcdcdc"/><g stroke="#9c9c9c" stroke-width=".9" fill="none"><path d="M4 8h3M9 8h3M4 10.700h3M9 10.700h3M4 13.300h3M9 13.300h3"/><path d="M6.600 6.800v1.200M6.600 9.500v1.200M6.600 12.100v1.200M9.400 6.800v1.200M9.400 9.500v1.200M9.400 12.100v1.200" stroke-width=".8"/></g><path d="M8 6.200v8" stroke="#f8f8f8" stroke-width="1"/></svg><span class="tt" style="left:136px;top:281px"><span style="letter-spacing:-0.215px">conduto_tubulacao</span></span>
<i class="hl" style="left:107px;top:313px;width:8px"></i>
<i class="ex p" style="left:97px;top:309px"></i><svg class="ic" style="left:115.80000000000001px;top:303.6px" viewBox="0 0 16 16"><rect x="1.700" y="1" width="12.600" height="14.200" rx="1.500" fill="#ededed" stroke="#2d8ff0" stroke-width="1.500"/><path d="M2.400 1.700h11.200v1.500H2.400z" fill="#3f9df4"/><path d="M2.400 3.200h11.200v1.600H2.400z" fill="#8fc8f9"/><path d="M3.300 5.500h9.400v1H3.300z" fill="#dcdcdc"/><g stroke="#9c9c9c" stroke-width=".9" fill="none"><path d="M4 8h3M9 8h3M4 10.700h3M9 10.700h3M4 13.300h3M9 13.300h3"/><path d="M6.600 6.800v1.200M6.600 9.500v1.200M6.600 12.100v1.200M9.400 6.800v1.200M9.400 9.500v1.200M9.400 12.100v1.200" stroke-width=".8"/></g><path d="M8 6.200v8" stroke="#f8f8f8" stroke-width="1"/></svg><span class="tt" style="left:136px;top:301px"><span style="letter-spacing:-0.102px">edificacao</span></span>
<i class="hl" style="left:107px;top:333px;width:8px"></i>
<i class="ex p" style="left:97px;top:329px"></i><svg class="ic" style="left:115.80000000000001px;top:323.6px" viewBox="0 0 16 16"><rect x="1.700" y="1" width="12.600" height="14.200" rx="1.500" fill="#ededed" stroke="#2d8ff0" stroke-width="1.500"/><path d="M2.400 1.700h11.200v1.500H2.400z" fill="#3f9df4"/><path d="M2.400 3.200h11.200v1.600H2.400z" fill="#8fc8f9"/><path d="M3.300 5.500h9.400v1H3.300z" fill="#dcdcdc"/><g stroke="#9c9c9c" stroke-width=".9" fill="none"><path d="M4 8h3M9 8h3M4 10.700h3M9 10.700h3M4 13.300h3M9 13.300h3"/><path d="M6.600 6.800v1.200M6.600 9.500v1.200M6.600 12.100v1.200M9.400 6.800v1.200M9.400 9.500v1.200M9.400 12.100v1.200" stroke-width=".8"/></g><path d="M8 6.200v8" stroke="#f8f8f8" stroke-width="1"/></svg><span class="tt" style="left:136px;top:321px"><span style="letter-spacing:-0.308px">garimpo</span></span>
<i class="hl" style="left:107px;top:353px;width:8px"></i>
<i class="ex p" style="left:97px;top:349px"></i><svg class="ic" style="left:115.80000000000001px;top:343.6px" viewBox="0 0 16 16"><rect x="1.700" y="1" width="12.600" height="14.200" rx="1.500" fill="#ededed" stroke="#2d8ff0" stroke-width="1.500"/><path d="M2.400 1.700h11.200v1.500H2.400z" fill="#3f9df4"/><path d="M2.400 3.200h11.200v1.600H2.400z" fill="#8fc8f9"/><path d="M3.300 5.500h9.400v1H3.300z" fill="#dcdcdc"/><g stroke="#9c9c9c" stroke-width=".9" fill="none"><path d="M4 8h3M9 8h3M4 10.700h3M9 10.700h3M4 13.300h3M9 13.300h3"/><path d="M6.600 6.800v1.200M6.600 9.500v1.200M6.600 12.100v1.200M9.400 6.800v1.200M9.400 9.500v1.200M9.400 12.100v1.200" stroke-width=".8"/></g><path d="M8 6.200v8" stroke="#f8f8f8" stroke-width="1"/></svg><span class="tt" style="left:136px;top:341px"><span style="letter-spacing:-0.163px">geometry_columns</span></span>
<i class="hl" style="left:107px;top:373px;width:8px"></i>
<i class="ex p" style="left:97px;top:369px"></i><svg class="ic" style="left:115.80000000000001px;top:363.6px" viewBox="0 0 16 16"><rect x="1.700" y="1" width="12.600" height="14.200" rx="1.500" fill="#ededed" stroke="#2d8ff0" stroke-width="1.500"/><path d="M2.400 1.700h11.200v1.500H2.400z" fill="#3f9df4"/><path d="M2.400 3.200h11.200v1.600H2.400z" fill="#8fc8f9"/><path d="M3.300 5.500h9.400v1H3.300z" fill="#dcdcdc"/><g stroke="#9c9c9c" stroke-width=".9" fill="none"><path d="M4 8h3M9 8h3M4 10.700h3M9 10.700h3M4 13.300h3M9 13.300h3"/><path d="M6.600 6.800v1.200M6.600 9.500v1.200M6.600 12.100v1.200M9.400 6.800v1.200M9.400 9.500v1.200M9.400 12.100v1.200" stroke-width=".8"/></g><path d="M8 6.200v8" stroke="#f8f8f8" stroke-width="1"/></svg><span class="tt" style="left:136px;top:361px"><span style="letter-spacing:-0.223px">mina</span></span>
<i class="hl" style="left:107px;top:393px;width:8px"></i>
<i class="ex p" style="left:97px;top:389px"></i><svg class="ic" style="left:115.80000000000001px;top:383.6px" viewBox="0 0 16 16"><rect x="1.700" y="1" width="12.600" height="14.200" rx="1.500" fill="#ededed" stroke="#2d8ff0" stroke-width="1.500"/><path d="M2.400 1.700h11.200v1.500H2.400z" fill="#3f9df4"/><path d="M2.400 3.200h11.200v1.600H2.400z" fill="#8fc8f9"/><path d="M3.300 5.500h9.400v1H3.300z" fill="#dcdcdc"/><g stroke="#9c9c9c" stroke-width=".9" fill="none"><path d="M4 8h3M9 8h3M4 10.700h3M9 10.700h3M4 13.300h3M9 13.300h3"/><path d="M6.600 6.800v1.200M6.600 9.500v1.200M6.600 12.100v1.200M9.400 6.800v1.200M9.400 9.500v1.200M9.400 12.100v1.200" stroke-width=".8"/></g><path d="M8 6.200v8" stroke="#f8f8f8" stroke-width="1"/></svg><span class="tt" style="left:136px;top:381px"><span style="letter-spacing:-0.241px">municipio_2007</span></span>
<i class="hl" style="left:107px;top:413px;width:8px"></i>
<i class="ex p" style="left:97px;top:409px"></i><svg class="ic" style="left:115.80000000000001px;top:403.6px" viewBox="0 0 16 16"><rect x="1.700" y="1" width="12.600" height="14.200" rx="1.500" fill="#ededed" stroke="#2d8ff0" stroke-width="1.500"/><path d="M2.400 1.700h11.200v1.500H2.400z" fill="#3f9df4"/><path d="M2.400 3.200h11.200v1.600H2.400z" fill="#8fc8f9"/><path d="M3.300 5.500h9.400v1H3.300z" fill="#dcdcdc"/><g stroke="#9c9c9c" stroke-width=".9" fill="none"><path d="M4 8h3M9 8h3M4 10.700h3M9 10.700h3M4 13.300h3M9 13.300h3"/><path d="M6.600 6.800v1.200M6.600 9.500v1.200M6.600 12.100v1.200M9.400 6.800v1.200M9.400 9.500v1.200M9.400 12.100v1.200" stroke-width=".8"/></g><path d="M8 6.200v8" stroke="#f8f8f8" stroke-width="1"/></svg><span class="tt" style="left:136px;top:401px"><span style="letter-spacing:-0.418px">parque</span></span>
<i class="hl" style="left:107px;top:433px;width:8px"></i>
<i class="ex p" style="left:97px;top:429px"></i><svg class="ic" style="left:115.80000000000001px;top:423.6px" viewBox="0 0 16 16"><rect x="1.700" y="1" width="12.600" height="14.200" rx="1.500" fill="#ededed" stroke="#2d8ff0" stroke-width="1.500"/><path d="M2.400 1.700h11.200v1.500H2.400z" fill="#3f9df4"/><path d="M2.400 3.200h11.200v1.600H2.400z" fill="#8fc8f9"/><path d="M3.300 5.500h9.400v1H3.300z" fill="#dcdcdc"/><g stroke="#9c9c9c" stroke-width=".9" fill="none"><path d="M4 8h3M9 8h3M4 10.700h3M9 10.700h3M4 13.300h3M9 13.300h3"/><path d="M6.600 6.800v1.200M6.600 9.500v1.200M6.600 12.100v1.200M9.400 6.800v1.200M9.400 9.500v1.200M9.400 12.100v1.200" stroke-width=".8"/></g><path d="M8 6.200v8" stroke="#f8f8f8" stroke-width="1"/></svg><span class="tt" style="left:136px;top:421px"><span style="letter-spacing:-0.245px">posto_indigena</span></span>
<i class="hl" style="left:107px;top:453px;width:8px"></i>
<i class="ex p" style="left:97px;top:449px"></i><svg class="ic" style="left:115.80000000000001px;top:443.6px" viewBox="0 0 16 16"><rect x="1.700" y="1" width="12.600" height="14.200" rx="1.500" fill="#ededed" stroke="#2d8ff0" stroke-width="1.500"/><path d="M2.400 1.700h11.200v1.500H2.400z" fill="#3f9df4"/><path d="M2.400 3.200h11.200v1.600H2.400z" fill="#8fc8f9"/><path d="M3.300 5.500h9.400v1H3.300z" fill="#dcdcdc"/><g stroke="#9c9c9c" stroke-width=".9" fill="none"><path d="M4 8h3M9 8h3M4 10.700h3M9 10.700h3M4 13.300h3M9 13.300h3"/><path d="M6.600 6.800v1.200M6.600 9.500v1.200M6.600 12.100v1.200M9.400 6.800v1.200M9.400 9.500v1.200M9.400 12.100v1.200" stroke-width=".8"/></g><path d="M8 6.200v8" stroke="#f8f8f8" stroke-width="1"/></svg><span class="tt" style="left:136px;top:441px"><span style="letter-spacing:-0.167px">refugio_de_vida_silvestre</span></span>
<i class="hl" style="left:107px;top:473px;width:8px"></i>
<i class="ex p" style="left:97px;top:469px"></i><svg class="ic" style="left:115.80000000000001px;top:463.6px" viewBox="0 0 16 16"><rect x="1.700" y="1" width="12.600" height="14.200" rx="1.500" fill="#ededed" stroke="#2d8ff0" stroke-width="1.500"/><path d="M2.400 1.700h11.200v1.500H2.400z" fill="#3f9df4"/><path d="M2.400 3.200h11.200v1.600H2.400z" fill="#8fc8f9"/><path d="M3.300 5.500h9.400v1H3.300z" fill="#dcdcdc"/><g stroke="#9c9c9c" stroke-width=".9" fill="none"><path d="M4 8h3M9 8h3M4 10.700h3M9 10.700h3M4 13.300h3M9 13.300h3"/><path d="M6.600 6.800v1.200M6.600 9.500v1.200M6.600 12.100v1.200M9.400 6.800v1.200M9.400 9.500v1.200M9.400 12.100v1.200" stroke-width=".8"/></g><path d="M8 6.200v8" stroke="#f8f8f8" stroke-width="1"/></svg><span class="tt" style="left:136px;top:461px"><span style="letter-spacing:-0.079px">reserva_extrativista</span></span>
<i class="hl" style="left:107px;top:493px;width:8px"></i>
<i class="ex p" style="left:97px;top:489px"></i><svg class="ic" style="left:115.80000000000001px;top:483.6px" viewBox="0 0 16 16"><rect x="1.700" y="1" width="12.600" height="14.200" rx="1.500" fill="#ededed" stroke="#2d8ff0" stroke-width="1.500"/><path d="M2.400 1.700h11.200v1.500H2.400z" fill="#3f9df4"/><path d="M2.400 3.200h11.200v1.600H2.400z" fill="#8fc8f9"/><path d="M3.300 5.500h9.400v1H3.300z" fill="#dcdcdc"/><g stroke="#9c9c9c" stroke-width=".9" fill="none"><path d="M4 8h3M9 8h3M4 10.700h3M9 10.700h3M4 13.300h3M9 13.300h3"/><path d="M6.600 6.800v1.200M6.600 9.500v1.200M6.600 12.100v1.200M9.400 6.800v1.200M9.400 9.500v1.200M9.400 12.100v1.200" stroke-width=".8"/></g><path d="M8 6.200v8" stroke="#f8f8f8" stroke-width="1"/></svg><span class="tt" style="left:136px;top:481px"><span style="letter-spacing:-0.138px">salina</span></span>
<i class="hl" style="left:107px;top:513px;width:8px"></i>
<i class="ex p" style="left:97px;top:509px"></i><svg class="ic" style="left:115.80000000000001px;top:503.6px" viewBox="0 0 16 16"><rect x="1.700" y="1" width="12.600" height="14.200" rx="1.500" fill="#ededed" stroke="#2d8ff0" stroke-width="1.500"/><path d="M2.400 1.700h11.200v1.500H2.400z" fill="#3f9df4"/><path d="M2.400 3.200h11.200v1.600H2.400z" fill="#8fc8f9"/><path d="M3.300 5.500h9.400v1H3.300z" fill="#dcdcdc"/><g stroke="#9c9c9c" stroke-width=".9" fill="none"><path d="M4 8h3M9 8h3M4 10.700h3M9 10.700h3M4 13.300h3M9 13.300h3"/><path d="M6.600 6.800v1.200M6.600 9.500v1.200M6.600 12.100v1.200M9.400 6.800v1.200M9.400 9.500v1.200M9.400 12.100v1.200" stroke-width=".8"/></g><path d="M8 6.200v8" stroke="#f8f8f8" stroke-width="1"/></svg><span class="tt" style="left:136px;top:501px"><span style="letter-spacing:-0.061px">spatial_ref_sys</span></span>
<i class="hl" style="left:107px;top:533px;width:8px"></i>
<i class="ex p" style="left:97px;top:529px"></i><svg class="ic" style="left:115.80000000000001px;top:523.6px" viewBox="0 0 16 16"><rect x="1.700" y="1" width="12.600" height="14.200" rx="1.500" fill="#ededed" stroke="#2d8ff0" stroke-width="1.500"/><path d="M2.400 1.700h11.200v1.500H2.400z" fill="#3f9df4"/><path d="M2.400 3.200h11.200v1.600H2.400z" fill="#8fc8f9"/><path d="M3.300 5.500h9.400v1H3.300z" fill="#dcdcdc"/><g stroke="#9c9c9c" stroke-width=".9" fill="none"><path d="M4 8h3M9 8h3M4 10.700h3M9 10.700h3M4 13.300h3M9 13.300h3"/><path d="M6.600 6.800v1.200M6.600 9.500v1.200M6.600 12.100v1.200M9.400 6.800v1.200M9.400 9.500v1.200M9.400 12.100v1.200" stroke-width=".8"/></g><path d="M8 6.200v8" stroke="#f8f8f8" stroke-width="1"/></svg><span class="tt" style="left:136px;top:521px"><span style="letter-spacing:-0.333px">terra_indigena_area</span></span>
<i class="hl" style="left:107px;top:553px;width:8px"></i>
<i class="ex p" style="left:97px;top:549px"></i><svg class="ic" style="left:115.80000000000001px;top:543.6px" viewBox="0 0 16 16"><rect x="1.700" y="1" width="12.600" height="14.200" rx="1.500" fill="#ededed" stroke="#2d8ff0" stroke-width="1.500"/><path d="M2.400 1.700h11.200v1.500H2.400z" fill="#3f9df4"/><path d="M2.400 3.200h11.200v1.600H2.400z" fill="#8fc8f9"/><path d="M3.300 5.500h9.400v1H3.300z" fill="#dcdcdc"/><g stroke="#9c9c9c" stroke-width=".9" fill="none"><path d="M4 8h3M9 8h3M4 10.700h3M9 10.700h3M4 13.300h3M9 13.300h3"/><path d="M6.600 6.800v1.200M6.600 9.500v1.200M6.600 12.100v1.200M9.400 6.800v1.200M9.400 9.500v1.200M9.400 12.100v1.200" stroke-width=".8"/></g><path d="M8 6.200v8" stroke="#f8f8f8" stroke-width="1"/></svg><span class="tt" style="left:136px;top:541px"><span style="letter-spacing:-0.3px">terra_indigena_ponto</span></span>
<i class="hl" style="left:107px;top:573px;width:8px"></i>
<i class="ex p" style="left:97px;top:569px"></i><svg class="ic" style="left:115.80000000000001px;top:563.6px" viewBox="0 0 16 16"><rect x="1.700" y="1" width="12.600" height="14.200" rx="1.500" fill="#ededed" stroke="#2d8ff0" stroke-width="1.500"/><path d="M2.400 1.700h11.200v1.500H2.400z" fill="#3f9df4"/><path d="M2.400 3.200h11.200v1.600H2.400z" fill="#8fc8f9"/><path d="M3.300 5.500h9.400v1H3.300z" fill="#dcdcdc"/><g stroke="#9c9c9c" stroke-width=".9" fill="none"><path d="M4 8h3M9 8h3M4 10.700h3M9 10.700h3M4 13.300h3M9 13.300h3"/><path d="M6.600 6.800v1.200M6.600 9.500v1.200M6.600 12.100v1.200M9.400 6.800v1.200M9.400 9.500v1.200M9.400 12.100v1.200" stroke-width=".8"/></g><path d="M8 6.200v8" stroke="#f8f8f8" stroke-width="1"/></svg><span class="tt" style="left:136px;top:561px"><span style="letter-spacing:-0.173px">usina</span></span>
<i class="hl" style="left:88px;top:593px;width:8px"></i>
<i class="ex p" style="left:78px;top:589px"></i><svg class="ic" style="left:96.80000000000001px;top:583.6px" viewBox="0 0 16 16"><g stroke="#8cc31a" stroke-width="1.400"><rect x=".8" y=".800" width="10" height="10" rx="1.200" fill="#e9f6cc"/><rect x="2.800" y="2.800" width="10" height="10" rx="1.200" fill="#e9f6cc"/><rect x="4.800" y="4.800" width="10.400" height="10.400" rx="1.200" fill="#f4fbe2"/></g><rect x="7.500" y="7.500" width="5" height="5" fill="#fff" stroke="#8cc31a" stroke-width="1.200"/><rect x="9.200" y="9.200" width="1.600" height="1.600" fill="#8cc31a"/></svg><span class="tt" style="left:117px;top:581px">Visões</span>
<i class="hl" style="left:88px;top:613px;width:8px"></i>
<i class="ex p" style="left:78px;top:609px"></i><svg class="ic" style="left:96.80000000000001px;top:603.6px" viewBox="0 0 16 16"><path d="M1 2L3.500.4 15 9.500V11L9.500 15.200 1 8.500z" fill="#9a7ed8" stroke="#7c5bc6" stroke-width=".9" stroke-linejoin="round"/><path d="M1.200 2.100L3.500.6 14.800 9.600 12.400 11.300z" fill="#b49eea"/><g fill="#fff"><rect x="2.400" y="1.300" width="1.900" height="1.700" transform="rotate(38 3.300 2.200)"/><rect x="5.600" y="3.900" width="1.900" height="1.700" transform="rotate(38 6.500 4.700)"/><rect x="8.800" y="6.500" width="1.900" height="1.700" transform="rotate(38 9.700 7.300)"/></g><path d="M5 5.500v6.300M8.500 8.300v6" stroke="#c7b6f0" stroke-width=".8"/><path d="M1.300 5.300L9.500 12 12.300 10" fill="none" stroke="#8465cc" stroke-width=".6"/></svg><span class="tt" style="left:117px;top:601px"><span style="letter-spacing:-0.166px">Seqüências</span></span>
<i class="hl" style="left:88px;top:633px;width:8px"></i>
<i class="ex p" style="left:78px;top:629px"></i><svg class="ic" style="left:96.80000000000001px;top:623.6px" viewBox="0 0 16 16"><g stroke="#3a6fd8" stroke-width="1" stroke-linejoin="round"><path d="M.7 5.800L3 3.300 4 1.300 7.300.7 9.800 3 7.500 5.500 5 8.500 2.500 8.800z" fill="#b5d3f8"/><path d="M2.800 8.300L5 5.800 6.500 4 9.800 3.500 12.300 6 10 8.500 7.500 11 5 11.300z" fill="#b5d3f8"/><path d="M5.500 11L8 8.300 12.300 6.500 15.700 9 14.200 12.800 10.300 15.200 7.300 14.300z" fill="#6fa6ef"/></g><path d="M8.500 8.800l5 1" stroke="#e6f0fc" stroke-width="1.300"/><path d="M2 5.800h4M4.300 8.300h4" stroke="#eaf3fd" stroke-width=".9"/></svg><span class="tt" style="left:117px;top:621px"><span style="letter-spacing:-0.161px">Funções</span></span>
<i class="hl" style="left:88px;top:653px;width:8px"></i>
<i class="ex p" style="left:78px;top:649px"></i><svg class="ic" style="left:96.80000000000001px;top:643.6px" viewBox="0 0 16 16"><path d="M1 4L7.500.5 16 8.500 9 13z" fill="#9ed3f5"/><path d="M1 4L9 13v3.200L1 8z" fill="#2f7db5"/><path d="M9 13L16 8.500V12L9 16.200z" fill="#e9e9e9"/><path d="M9 14.100L16 9.700M9 15.200L16 10.900" stroke="#6f6f6f" stroke-width=".7"/><path d="M9 13L16 8.500" stroke="#4a4a4a" stroke-width=".8"/><path d="M2.300 2.700L4.500 1 9 5.600 8.300 7.200 7 6.400 6.300 7.900z" fill="#ff4a12"/><path d="M9.500 6.500l2 2-1.500 1" fill="none" stroke="#4b9cd3" stroke-width=".8"/></svg><span class="tt" style="left:117px;top:641px"><span style="letter-spacing:-0.076px">Busca por Texto Completo</span></span>
<i class="hl" style="left:88px;top:673px;width:8px"></i>
<i class="ex p" style="left:78px;top:669px"></i><svg class="ic" style="left:96.80000000000001px;top:663.6px" viewBox="0 0 16 16"><path d="M1 6v5.500h2V13.500h2.300V16.500h8.700V10L9.300 6.500 5.400.700z" fill="#f4f6fb"/><path d="M1 6v5.500M3.200 8v5.500M5.300 10v6.500h8.700V10" fill="none" stroke="#6f6f6f" stroke-width=".9"/><path d="M.2 5.900L5.400.7 9.300 6.700" fill="none" stroke="#e3333c" stroke-width="1.600" stroke-linejoin="round"/><path d="M2 7.800L7 3M4.300 10.100L9.300 6.700L14.800 10.100" fill="none" stroke="#e3333c" stroke-width="1.600" stroke-linejoin="round"/><path d="M5.400.7L9.300 6.700" stroke="#e3333c" stroke-width="2.400"/><rect x="8" y="12" width="3" height="4.500" fill="#8a6414"/></svg><span class="tt" style="left:117px;top:661px"><span style="letter-spacing:-0.038px">Domínios</span></span>
</div>
<!-- left frame scrollbar -->
<div class="abs" style="left:335px;top:86px;width:1px;height:682px;background-image:linear-gradient(rgba(0,0,0,0) 17%,#b2b2b2 17%,#b2b2b2 60%,rgba(0,0,0,0) 60%);background-size:1px 6px"></div>
<div class="abs" style="left:336px;top:86px;width:15px;height:682px;background:#d3d3d3;border-left:1px solid #9b9b9b;border-right:1px solid #9b9b9b"></div>
<div class="abs" style="left:336px;top:86px;width:15px;height:15px;background:#fff;border:1px solid #9b9b9b;border-radius:3px 3px 0 0"></div>
<div class="abs" style="left:336px;top:753px;width:15px;height:15px;background:#fff;border:1px solid #9b9b9b;border-radius:0 0 3px 3px"></div>
<div class="abs" style="left:336px;top:338px;width:15px;height:416px;background:linear-gradient(90deg,#f3f3f3 0,#f1f1f1 50%,#e6e6e6 50%,#e4e4e4 100%);border:1px solid #9b9b9b"></div>
<svg class="abs" style="left:336px;top:86px" width="15" height="682" viewBox="0 0 15 682"><path d="M4 9.500h7L7.500 5z" fill="#000"/><path d="M4 672.500h7L7.500 677z" fill="#8a8a8a"/><path d="M5 457.500h5M5 460.500h5M5 463.500h5" stroke="#8a8a8a" stroke-width="1"/></svg>
<!-- ===== right frame ===== -->
<div id="right" class="abs">
<div style="position:absolute;left:10px;top:4px;width:986px;height:28px;background:#9ccdca;line-height:28px;white-space:nowrap"><span style="position:absolute;left:11.500px;top:0;letter-spacing:-.04px"><b>PostgreSQL 8.4.17</b> rodando em <b>localhost</b>:5432 -- Você está logado como usuário <b>"postgres"</b></span><span style="position:absolute;right:13px;top:0;font-weight:bold;color:#0b3560"><span style="letter-spacing:0.129px">SQL</span><i class="sep"></i><span style="letter-spacing:0.036px">Histórico</span><i class="sep"></i>Encontrar<i class="sep"></i><span style="letter-spacing:-0.198px">Sair</span></span></div>
<div style="position:absolute;left:10px;top:34px;width:986px;height:32px;background:#e8f1f3;border:2px solid #cfe2e8"><span style="position:absolute;left:11px;top:5px;width:16px;height:16px"><svg width="16" height="16" viewBox="0 0 16 16"><ellipse cx="3.600" cy="5.200" rx="3.300" ry="4.800" fill="#8b8b8b" stroke="#5e5e5e" stroke-width=".8"/><ellipse cx="12.400" cy="5.200" rx="3.300" ry="4.800" fill="#8b8b8b" stroke="#5e5e5e" stroke-width=".8"/><path d="M8 1.300c2.300 0 3.700 1.700 3.700 4.500 0 2.500-.5 4.500-1 6.500-.5 2.200-1.500 3.600-2.700 3.600s-2.200-1.400-2.700-3.600c-.5-2-1-4-1-6.500C4.300 3 5.700 1.300 8 1.300z" fill="#b0b0b0" stroke="#5e5e5e" stroke-width=".8"/><ellipse cx="5.600" cy="11.600" rx=".8" ry="1.500" fill="#fff" stroke="#555" stroke-width=".6"/><ellipse cx="10.400" cy="11.600" rx=".8" ry="1.500" fill="#fff" stroke="#555" stroke-width=".6"/><circle cx="6.500" cy="5.800" r=".7" fill="#222"/><circle cx="9.500" cy="5.800" r=".7" fill="#222"/></svg></span><span style="position:absolute;left:28.8px;top:7.500px;line-height:16px;color:#0b3160;white-space:nowrap"><span style="letter-spacing:-0.095px">phpPgGIS</span><span style="color:#000;position:relative;top:-3.500px;margin-left:1px">:</span></span><span style="position:absolute;left:88.5px;top:4.500px;width:16px;height:16px"><svg width="16" height="16" viewBox="0 0 16 16"><path d="M3 2.500Q3 .5 5 .5h5.500q2 0 2 2V15.500H3z" fill="#cdb4ba" stroke="#8f7379" stroke-width="1"/><path d="M4.500 2h7v2h-7z" fill="#e9dadd"/><path d="M4.500 5h7v9.500h-7z" fill="#dccbd0"/><path d="M4.500 14.500l7-8v8z" fill="#b2949b"/><rect x="9" y="11.500" width="2.300" height="2.300" fill="#22b7b0"/></svg></span><span style="position:absolute;left:105.6px;top:7.500px;line-height:16px;color:#0b3160;white-space:nowrap">PostgreSQL<span style="font-size:9.500px;color:#2fa3dc;position:relative;top:-4.500px;margin-left:.5px">?</span><span style="color:#000;position:relative;top:-3.500px;margin-left:1px">:</span></span><span style="position:absolute;left:180px;top:4.500px;width:16px;height:16px"><svg width="16" height="16" viewBox="0 0 16 16"><g fill="#0000ff"><ellipse cx="8" cy="3.500" rx="7" ry="3"/><path d="M1 3.500h14v9.500H1z"/><ellipse cx="8" cy="13" rx="7" ry="3"/></g><g fill="none" stroke="#1ea7ff" stroke-width="1"><path d="M1 5.500a7 2.800 0 0 0 14 0"/><path d="M1 8.700a7 2.800 0 0 0 14 0"/><path d="M1 11.900a7 2.800 0 0 0 14 0"/></g></svg></span><span style="position:absolute;left:197.5px;top:7.500px;line-height:16px;color:#0b3160;white-space:nowrap"><span style="letter-spacing:-0.099px">treinamento</span><span style="font-size:9.500px;color:#2fa3dc;position:relative;top:-4.500px;margin-left:.5px">?</span><span style="color:#000;position:relative;top:-3.500px;margin-left:1px">:</span></span><span style="position:absolute;left:268.5px;top:4.500px;width:16px;height:16px"><svg width="16" height="16" viewBox="0 0 16 16"><path d="M8 1.200L14.800 8 8 14.800 1.200 8z" fill="#fdf3f3" stroke="#dc4a52" stroke-width="2.300" stroke-linejoin="round"/><path d="M8 1.200L14.800 8 8 14.800 1.200 8z" fill="none" stroke="#f3b4b7" stroke-width=".7" stroke-dasharray="1 1"/><circle cx="8" cy="8" r="2.400" fill="#f5b9bc" stroke="#dc4a52" stroke-width="1.500"/></svg></span><span style="position:absolute;left:286.2px;top:7.500px;line-height:16px;color:#0b3160;white-space:nowrap"><span style="letter-spacing:-0.123px">public</span><span style="font-size:9.500px;color:#2fa3dc;position:relative;top:-4.500px;margin-left:.5px">?</span><span style="color:#000;position:relative;top:-3.500px;margin-left:1px">:</span></span><span style="position:absolute;left:328.5px;top:4.500px;width:16px;height:16px"><svg width="16" height="16" viewBox="0 0 16 16"><rect x="1.700" y="1" width="12.600" height="14.200" rx="1.500" fill="#ededed" stroke="#2d8ff0" stroke-width="1.500"/><path d="M2.400 1.700h11.200v1.500H2.400z" fill="#3f9df4"/><path d="M2.400 3.200h11.200v1.600H2.400z" fill="#8fc8f9"/><path d="M3.300 5.500h9.400v1H3.300z" fill="#dcdcdc"/><g stroke="#9c9c9c" stroke-width=".9" fill="none"><path d="M4 8h3M9 8h3M4 10.700h3M9 10.700h3M4 13.300h3M9 13.300h3"/><path d="M6.600 6.800v1.200M6.600 9.500v1.200M6.600 12.100v1.200M9.400 6.800v1.200M9.400 9.500v1.200M9.400 12.100v1.200" stroke-width=".8"/></g><path d="M8 6.200v8" stroke="#f8f8f8" stroke-width="1"/></svg></span><span style="position:absolute;left:346.6px;top:7.500px;line-height:16px;color:#0b3160;white-space:nowrap"><span style="letter-spacing:-0.057px">conduto_tubulacao</span><span style="font-size:9.500px;color:#2fa3dc;position:relative;top:-4.500px;margin-left:.5px">?</span><span style="color:#000;position:relative;top:-3.500px;margin-left:1px">:</span></span></div>
<div style="position:absolute;left:10px;top:68px;width:986px;height:28px;background:#e8f1f3;border:2px solid #cfe2e8"><span style="position:absolute;left:16.500px;top:0;line-height:23px;font-size:16px;font-weight:bold;color:#336666">Navegar</span></div>
<div style="position:absolute;left:10px;top:108px;width:986px;height:20px;text-align:center;font-size:13.330px;line-height:20px;color:#0a3562;white-space:nowrap"><span style="color:#000">1</span> <span style="letter-spacing:0.036px">2 Próximo &gt; Último &gt;&gt;</span></div>
<div style="position:absolute;left:17px;top:150px;width:84px;height:16px;background:#cbdfe6"></div>
<div style="position:absolute;left:103px;top:150px;width:20px;height:16px;background:#cbdfe6;line-height:16px;font-weight:bold;color:#0b3560;text-align:center;white-space:nowrap;overflow:hidden"></div>
<div style="position:absolute;left:125px;top:150px;width:15px;height:16px;background:#cbdfe6;line-height:16px;font-weight:bold;color:#0b3560;text-align:center;white-space:nowrap;overflow:hidden"></div>
<div style="position:absolute;left:141px;top:150px;width:45px;height:16px;background:#cbdfe6;line-height:16px;font-weight:bold;color:#0b3560;text-align:center;white-space:nowrap;overflow:hidden"></div>
<div style="position:absolute;left:188px;top:150px;width:61px;height:16px;background:#cbdfe6;line-height:16px;font-weight:bold;color:#0b3560;text-align:center;white-space:nowrap;overflow:hidden"></div>
<div style="position:absolute;left:251px;top:150px;width:63px;height:16px;background:#cbdfe6;line-height:16px;font-weight:bold;color:#0b3560;text-align:center;white-space:nowrap;overflow:hidden"></div>
<div style="position:absolute;left:315.5px;top:150px;width:63px;height:16px;background:#cbdfe6;line-height:16px;font-weight:bold;color:#0b3560;text-align:center;white-space:nowrap;overflow:hidden"></div>
<div style="position:absolute;left:380px;top:150px;width:83px;height:16px;background:#cbdfe6;line-height:16px;font-weight:bold;color:#0b3560;text-align:center;white-space:nowrap;overflow:hidden"></div>
<div style="position:absolute;left:464.5px;top:150px;width:94.5px;height:16px;background:#cbdfe6;line-height:16px;font-weight:bold;color:#0b3560;text-align:center;white-space:nowrap;overflow:hidden"><span style="letter-spacing:0.041px">md_extensa</span></div>
<div style="position:absolute;left:561px;top:150px;width:54px;height:16px;background:#cbdfe6;line-height:16px;font-weight:bold;color:#0b3560;text-align:center;white-space:nowrap;overflow:hidden">data_alter</div>
<div style="position:absolute;left:617px;top:150px;width:62px;height:16px;background:#cbdfe6;line-height:16px;font-weight:bold;color:#0b3560;text-align:center;white-space:nowrap;overflow:hidden"><span style="letter-spacing:0.133px">metodo_alt</span></div>
<div style="position:absolute;left:681px;top:150px;width:127px;height:16px;background:#cbdfe6;line-height:16px;font-weight:bold;color:#0b3560;text-align:center;white-space:nowrap;overflow:hidden"><span style="letter-spacing:0.184px">fonte_info</span></div>
<div style="position:absolute;left:810px;top:150px;width:330px;height:16px;background:#cbdfe6;line-height:16px;font-weight:bold;color:#0b3560;text-align:center;white-space:nowrap;overflow:hidden"><span style="position:absolute;left:131px;top:0"><span style="letter-spacing:0.131px">the_geom</span></span></div>
<div style="position:absolute;left:18px;top:169px;width:37px;height:15px;background:#e8f1f3;line-height:14px;white-space:nowrap;text-align:center;font-size:9.350px;color:#0b3160;border-right:1px solid #3b6a6c;border-bottom:1px solid #3b6a6c;"><span style="letter-spacing:-0.071px">Editar</span></div>
<div style="position:absolute;left:58px;top:169px;width:43px;height:15px;background:#e8f1f3;line-height:14px;white-space:nowrap;text-align:center;font-size:9.350px;color:#0b3160;border-right:1px solid #3b6a6c;border-bottom:1px solid #3b6a6c;"><span style="letter-spacing:-0.02px">Deletar</span></div>
<div style="position:absolute;left:103px;top:168px;width:20px;height:16px;background:#e8f1f3;line-height:16px;white-space:nowrap;overflow:hidden;text-align:right;padding-right:1.500px;"><span style="letter-spacing:-0.118px">1</span></div>
<div style="position:absolute;left:125px;top:168px;width:15px;height:16px;background:#e8f1f3;line-height:16px;white-space:nowrap;overflow:hidden;text-align:right;padding-right:1.500px;"><span style="letter-spacing:-0.118px">1</span></div>
<div style="position:absolute;left:141px;top:168px;width:45px;height:16px;background:#e8f1f3;line-height:16px;white-space:nowrap;overflow:hidden;padding-left:1.500px;"><span style="letter-spacing:-0.118px">11298</span></div>
<div style="position:absolute;left:188px;top:168px;width:61px;height:16px;background:#e8f1f3;line-height:16px;white-space:nowrap;overflow:hidden;padding-left:1.500px;"><span style="letter-spacing:-0.315px">Sim</span></div>
<div style="position:absolute;left:251px;top:168px;width:63px;height:16px;background:#e8f1f3;line-height:16px;white-space:nowrap;overflow:hidden;padding-left:1.500px;"><span style="letter-spacing:-0.049px">Subterranea</span></div>
<div style="position:absolute;left:315.5px;top:168px;width:63px;height:16px;background:#e8f1f3;line-height:16px;white-space:nowrap;overflow:hidden;padding-left:1.500px;"><span style="letter-spacing:0.019px">Construído</span></div>
<div style="position:absolute;left:380px;top:168px;width:83px;height:16px;background:#e8f1f3;line-height:16px;white-space:nowrap;overflow:hidden;padding-left:1.500px;"><span style="letter-spacing:0.275px">Gás</span></div>
<div style="position:absolute;left:464.5px;top:168px;width:94.5px;height:16px;background:#e8f1f3;line-height:16px;white-space:nowrap;overflow:hidden;text-align:right;padding-right:1px;direction:rtl;"><span style="letter-spacing:-0.114px">14.1827937860727</span></div>
<div style="position:absolute;left:561px;top:168px;width:54px;height:16px;background:#e8f1f3;line-height:16px;white-space:nowrap;overflow:hidden;padding-left:1.500px;"><span style="letter-spacing:-0.059px">Mar/2009</span></div>
<div style="position:absolute;left:617px;top:168px;width:62px;height:16px;background:#e8f1f3;line-height:16px;white-space:nowrap;overflow:hidden;padding-left:1.500px;"><span style="letter-spacing:-0.108px">Compilação</span></div>
<div style="position:absolute;left:681px;top:168px;width:127px;height:16px;background:#e8f1f3;line-height:16px;white-space:nowrap;overflow:hidden;padding-left:1.500px;"><span style="letter-spacing:0.018px">MPOG/IBGE/DGC/CCAR</span></div>
<div style="position:absolute;left:810px;top:168px;width:330px;height:16px;background:#e8f1f3;line-height:16px;white-space:nowrap;overflow:hidden;padding-left:1.500px;color:#0b3160;"><span style="letter-spacing:-0.119px">0105000020AF7901000100000001020000000A000000</span></div>
<div style="position:absolute;left:18px;top:187px;width:37px;height:15px;background:#d1e3e9;line-height:14px;white-space:nowrap;text-align:center;font-size:9.350px;color:#0b3160;border-right:1px solid #3b6a6c;border-bottom:1px solid #3b6a6c;"><span style="letter-spacing:-0.071px">Editar</span></div>
<div style="position:absolute;left:58px;top:187px;width:43px;height:15px;background:#d1e3e9;line-height:14px;white-space:nowrap;text-align:center;font-size:9.350px;color:#0b3160;border-right:1px solid #3b6a6c;border-bottom:1px solid #3b6a6c;"><span style="letter-spacing:-0.02px">Deletar</span></div>
<div style="position:absolute;left:103px;top:186px;width:20px;height:16px;background:#d1e3e9;line-height:16px;white-space:nowrap;overflow:hidden;text-align:right;padding-right:1.500px;"><span style="letter-spacing:-0.118px">2</span></div>
<div style="position:absolute;left:125px;top:186px;width:15px;height:16px;background:#d1e3e9;line-height:16px;white-space:nowrap;overflow:hidden;text-align:right;padding-right:1.500px;"><span style="letter-spacing:-0.118px">2</span></div>
<div style="position:absolute;left:141px;top:186px;width:45px;height:16px;background:#d1e3e9;line-height:16px;white-space:nowrap;overflow:hidden;padding-left:1.500px;"><span style="letter-spacing:-0.118px">11298</span></div>
<div style="position:absolute;left:188px;top:186px;width:61px;height:16px;background:#d1e3e9;line-height:16px;white-space:nowrap;overflow:hidden;padding-left:1.500px;"><span style="letter-spacing:-0.315px">Sim</span></div>
<div style="position:absolute;left:251px;top:186px;width:63px;height:16px;background:#d1e3e9;line-height:16px;white-space:nowrap;overflow:hidden;padding-left:1.500px;"><span style="letter-spacing:-0.049px">Subterranea</span></div>
<div style="position:absolute;left:315.5px;top:186px;width:63px;height:16px;background:#d1e3e9;line-height:16px;white-space:nowrap;overflow:hidden;padding-left:1.500px;"><span style="letter-spacing:0.019px">Construído</span></div>
<div style="position:absolute;left:380px;top:186px;width:83px;height:16px;background:#d1e3e9;line-height:16px;white-space:nowrap;overflow:hidden;padding-left:1.500px;"><span style="letter-spacing:0.275px">Gás</span></div>
<div style="position:absolute;left:464.5px;top:186px;width:94.5px;height:16px;background:#d1e3e9;line-height:16px;white-space:nowrap;overflow:hidden;text-align:right;padding-right:1px;direction:rtl;"><span style="letter-spacing:-0.114px">16.1002941397362</span></div>
<div style="position:absolute;left:561px;top:186px;width:54px;height:16px;background:#d1e3e9;line-height:16px;white-space:nowrap;overflow:hidden;padding-left:1.500px;"><span style="letter-spacing:-0.059px">Mar/2009</span></div>
<div style="position:absolute;left:617px;top:186px;width:62px;height:16px;background:#d1e3e9;line-height:16px;white-space:nowrap;overflow:hidden;padding-left:1.500px;"><span style="letter-spacing:-0.108px">Compilação</span></div>
<div style="position:absolute;left:681px;top:186px;width:127px;height:16px;background:#d1e3e9;line-height:16px;white-space:nowrap;overflow:hidden;padding-left:1.500px;"><span style="letter-spacing:0.018px">MPOG/IBGE/DGC/CCAR</span></div>
<div style="position:absolute;left:810px;top:186px;width:330px;height:16px;background:#d1e3e9;line-height:16px;white-space:nowrap;overflow:hidden;padding-left:1.500px;color:#0b3160;"><span style="letter-spacing:-0.119px">0105000020AF7901000100000001020000000A000000</span></div>
<div style="position:absolute;left:18px;top:205px;width:37px;height:15px;background:#e8f1f3;line-height:14px;white-space:nowrap;text-align:center;font-size:9.350px;color:#0b3160;border-right:1px solid #3b6a6c;border-bottom:1px solid #3b6a6c;"><span style="letter-spacing:-0.071px">Editar</span></div>
<div style="position:absolute;left:58px;top:205px;width:43px;height:15px;background:#e8f1f3;line-height:14px;white-space:nowrap;text-align:center;font-size:9.350px;color:#0b3160;border-right:1px solid #3b6a6c;border-bottom:1px solid #3b6a6c;"><span style="letter-spacing:-0.02px">Deletar</span></div>
<div style="position:absolute;left:103px;top:204px;width:20px;height:16px;background:#e8f1f3;line-height:16px;white-space:nowrap;overflow:hidden;text-align:right;padding-right:1.500px;"><span style="letter-spacing:-0.118px">3</span></div>
<div style="position:absolute;left:125px;top:204px;width:15px;height:16px;background:#e8f1f3;line-height:16px;white-space:nowrap;overflow:hidden;text-align:right;padding-right:1.500px;"><span style="letter-spacing:-0.118px">3</span></div>
<div style="position:absolute;left:141px;top:204px;width:45px;height:16px;background:#e8f1f3;line-height:16px;white-space:nowrap;overflow:hidden;padding-left:1.500px;"><span style="letter-spacing:-0.118px">11298</span></div>
<div style="position:absolute;left:188px;top:204px;width:61px;height:16px;background:#e8f1f3;line-height:16px;white-space:nowrap;overflow:hidden;padding-left:1.500px;"><span style="letter-spacing:-0.315px">Sim</span></div>
<div style="position:absolute;left:251px;top:204px;width:63px;height:16px;background:#e8f1f3;line-height:16px;white-space:nowrap;overflow:hidden;padding-left:1.500px;"><span style="letter-spacing:-0.049px">Subterranea</span></div>
<div style="position:absolute;left:315.5px;top:204px;width:63px;height:16px;background:#e8f1f3;line-height:16px;white-space:nowrap;overflow:hidden;padding-left:1.500px;"><span style="letter-spacing:0.019px">Construído</span></div>
<div style="position:absolute;left:380px;top:204px;width:83px;height:16px;background:#e8f1f3;line-height:16px;white-space:nowrap;overflow:hidden;padding-left:1.500px;"><span style="letter-spacing:0.275px">Gás</span></div>
<div style="position:absolute;left:464.5px;top:204px;width:94.5px;height:16px;background:#e8f1f3;line-height:16px;white-space:nowrap;overflow:hidden;text-align:right;padding-right:1px;direction:rtl;"><span style="letter-spacing:-0.114px">13.261643220772</span></div>
<div style="position:absolute;left:561px;top:204px;width:54px;height:16px;background:#e8f1f3;line-height:16px;white-space:nowrap;overflow:hidden;padding-left:1.500px;"><span style="letter-spacing:-0.059px">Mar/2009</span></div>
<div style="position:absolute;left:617px;top:204px;width:62px;height:16px;background:#e8f1f3;line-height:16px;white-space:nowrap;overflow:hidden;padding-left:1.500px;"><span style="letter-spacing:-0.108px">Compilação</span></div>
<div style="position:absolute;left:681px;top:204px;width:127px;height:16px;background:#e8f1f3;line-height:16px;white-space:nowrap;overflow:hidden;padding-left:1.500px;"><span style="letter-spacing:0.018px">MPOG/IBGE/DGC/CCAR</span></div>
<div style="position:absolute;left:810px;top:204px;width:330px;height:16px;background:#e8f1f3;line-height:16px;white-space:nowrap;overflow:hidden;padding-left:1.500px;color:#0b3160;"><span style="letter-spacing:-0.119px">0105000020AF7901000100000001020000000A000000</span></div>
<div style="position:absolute;left:18px;top:223px;width:37px;height:15px;background:#d1e3e9;line-height:14px;white-space:nowrap;text-align:center;font-size:9.350px;color:#0b3160;border-right:1px solid #3b6a6c;border-bottom:1px solid #3b6a6c;"><span style="letter-spacing:-0.071px">Editar</span></div>
<div style="position:absolute;left:58px;top:223px;width:43px;height:15px;background:#d1e3e9;line-height:14px;white-space:nowrap;text-align:center;font-size:9.350px;color:#0b3160;border-right:1px solid #3b6a6c;border-bottom:1px solid #3b6a6c;"><span style="letter-spacing:-0.02px">Deletar</span></div>
<div style="position:absolute;left:103px;top:222px;width:20px;height:16px;background:#d1e3e9;line-height:16px;white-space:nowrap;overflow:hidden;text-align:right;padding-right:1.500px;"><span style="letter-spacing:-0.118px">4</span></div>
<div style="position:absolute;left:125px;top:222px;width:15px;height:16px;background:#d1e3e9;line-height:16px;white-space:nowrap;overflow:hidden;text-align:right;padding-right:1.500px;"><span style="letter-spacing:-0.118px">4</span></div>
<div style="position:absolute;left:141px;top:222px;width:45px;height:16px;background:#d1e3e9;line-height:16px;white-space:nowrap;overflow:hidden;padding-left:1.500px;"><span style="letter-spacing:-0.118px">11298</span></div>
<div style="position:absolute;left:188px;top:222px;width:61px;height:16px;background:#d1e3e9;line-height:16px;white-space:nowrap;overflow:hidden;padding-left:1.500px;"><span style="letter-spacing:-0.315px">Sim</span></div>
<div style="position:absolute;left:251px;top:222px;width:63px;height:16px;background:#d1e3e9;line-height:16px;white-space:nowrap;overflow:hidden;padding-left:1.500px;"><span style="letter-spacing:-0.049px">Subterranea</span></div>
<div style="position:absolute;left:315.5px;top:222px;width:63px;height:16px;background:#d1e3e9;line-height:16px;white-space:nowrap;overflow:hidden;padding-left:1.500px;"><span style="letter-spacing:0.019px">Construído</span></div>
<div style="position:absolute;left:380px;top:222px;width:83px;height:16px;background:#d1e3e9;line-height:16px;white-space:nowrap;overflow:hidden;padding-left:1.500px;"><span style="letter-spacing:0.275px">Gás</span></div>
<div style="position:absolute;left:464.5px;top:222px;width:94.5px;height:16px;background:#d1e3e9;line-height:16px;white-space:nowrap;overflow:hidden;text-align:right;padding-right:1px;direction:rtl;"><span style="letter-spacing:-0.114px">30.211031357353</span></div>
<div style="position:absolute;left:561px;top:222px;width:54px;height:16px;background:#d1e3e9;line-height:16px;white-space:nowrap;overflow:hidden;padding-left:1.500px;"><span style="letter-spacing:-0.059px">Mar/2009</span></div>
<div style="position:absolute;left:617px;top:222px;width:62px;height:16px;background:#d1e3e9;line-height:16px;white-space:nowrap;overflow:hidden;padding-left:1.500px;"><span style="letter-spacing:-0.108px">Compilação</span></div>
<div style="position:absolute;left:681px;top:222px;width:127px;height:16px;background:#d1e3e9;line-height:16px;white-space:nowrap;overflow:hidden;padding-left:1.500px;"><span style="letter-spacing:0.018px">MPOG/IBGE/DGC/CCAR</span></div>
<div style="position:absolute;left:810px;top:222px;width:330px;height:16px;background:#d1e3e9;line-height:16px;white-space:nowrap;overflow:hidden;padding-left:1.500px;color:#0b3160;"><span style="letter-spacing:-0.119px">0105000020AF7901000100000001020000000A000000</span></div>
<div style="position:absolute;left:18px;top:241px;width:37px;height:15px;background:#e8f1f3;line-height:14px;white-space:nowrap;text-align:center;font-size:9.350px;color:#0b3160;border-right:1px solid #3b6a6c;border-bottom:1px solid #3b6a6c;"><span style="letter-spacing:-0.071px">Editar</span></div>
<div style="position:absolute;left:58px;top:241px;width:43px;height:15px;background:#e8f1f3;line-height:14px;white-space:nowrap;text-align:center;font-size:9.350px;color:#0b3160;border-right:1px solid #3b6a6c;border-bottom:1px solid #3b6a6c;"><span style="letter-spacing:-0.02px">Deletar</span></div>
<div style="position:absolute;left:103px;top:240px;width:20px;height:16px;background:#e8f1f3;line-height:16px;white-space:nowrap;overflow:hidden;text-align:right;padding-right:1.500px;"><span style="letter-spacing:-0.118px">5</span></div>
<div style="position:absolute;left:125px;top:240px;width:15px;height:16px;background:#e8f1f3;line-height:16px;white-space:nowrap;overflow:hidden;text-align:right;padding-right:1.500px;"><span style="letter-spacing:-0.118px">5</span></div>
<div style="position:absolute;left:141px;top:240px;width:45px;height:16px;background:#e8f1f3;line-height:16px;white-space:nowrap;overflow:hidden;padding-left:1.500px;"><span style="letter-spacing:-0.118px">11298</span></div>
<div style="position:absolute;left:188px;top:240px;width:61px;height:16px;background:#e8f1f3;line-height:16px;white-space:nowrap;overflow:hidden;padding-left:1.500px;"><span style="letter-spacing:-0.315px">Sim</span></div>
<div style="position:absolute;left:251px;top:240px;width:63px;height:16px;background:#e8f1f3;line-height:16px;white-space:nowrap;overflow:hidden;padding-left:1.500px;"><span style="letter-spacing:-0.049px">Subterranea</span></div>
<div style="position:absolute;left:315.5px;top:240px;width:63px;height:16px;background:#e8f1f3;line-height:16px;white-space:nowrap;overflow:hidden;padding-left:1.500px;"><span style="letter-spacing:0.019px">Construído</span></div>
<div style="position:absolute;left:380px;top:240px;width:83px;height:16px;background:#e8f1f3;line-height:16px;white-space:nowrap;overflow:hidden;padding-left:1.500px;"><span style="letter-spacing:0.275px">Gás</span></div>
<div style="position:absolute;left:464.5px;top:240px;width:94.5px;height:16px;background:#e8f1f3;line-height:16px;white-space:nowrap;overflow:hidden;text-align:right;padding-right:1px;direction:rtl;"><span style="letter-spacing:-0.114px">15.9375800765626</span></div>
<div style="position:absolute;left:561px;top:240px;width:54px;height:16px;background:#e8f1f3;line-height:16px;white-space:nowrap;overflow:hidden;padding-left:1.500px;"><span style="letter-spacing:-0.059px">Mar/2009</span></div>
<div style="position:absolute;left:617px;top:240px;width:62px;height:16px;background:#e8f1f3;line-height:16px;white-space:nowrap;overflow:hidden;padding-left:1.500px;"><span style="letter-spacing:-0.108px">Compilação</span></div>
<div style="position:absolute;left:681px;top:240px;width:127px;height:16px;background:#e8f1f3;line-height:16px;white-space:nowrap;overflow:hidden;padding-left:1.500px;"><span style="letter-spacing:0.018px">MPOG/IBGE/DGC/CCAR</span></div>
<div style="position:absolute;left:810px;top:240px;width:330px;height:16px;background:#e8f1f3;line-height:16px;white-space:nowrap;overflow:hidden;padding-left:1.500px;color:#0b3160;"><span style="letter-spacing:-0.119px">0105000020AF7901000100000001020000000A000000</span></div>
<div style="position:absolute;left:18px;top:259px;width:37px;height:15px;background:#d1e3e9;line-height:14px;white-space:nowrap;text-align:center;font-size:9.350px;color:#0b3160;border-right:1px solid #3b6a6c;border-bottom:1px solid #3b6a6c;"><span style="letter-spacing:-0.071px">Editar</span></div>
<div style="position:absolute;left:58px;top:259px;width:43px;height:15px;background:#d1e3e9;line-height:14px;white-space:nowrap;text-align:center;font-size:9.350px;color:#0b3160;border-right:1px solid #3b6a6c;border-bottom:1px solid #3b6a6c;"><span style="letter-spacing:-0.02px">Deletar</span></div>
<div style="position:absolute;left:103px;top:258px;width:20px;height:16px;background:#d1e3e9;line-height:16px;white-space:nowrap;overflow:hidden;text-align:right;padding-right:1.500px;"><span style="letter-spacing:-0.118px">6</span></div>
<div style="position:absolute;left:125px;top:258px;width:15px;height:16px;background:#d1e3e9;line-height:16px;white-space:nowrap;overflow:hidden;text-align:right;padding-right:1.500px;"><span style="letter-spacing:-0.118px">6</span></div>
<div style="position:absolute;left:141px;top:258px;width:45px;height:16px;background:#d1e3e9;line-height:16px;white-space:nowrap;overflow:hidden;padding-left:1.500px;"><span style="letter-spacing:-0.118px">11298</span></div>
<div style="position:absolute;left:188px;top:258px;width:61px;height:16px;background:#d1e3e9;line-height:16px;white-space:nowrap;overflow:hidden;padding-left:1.500px;"><span style="letter-spacing:-0.315px">Sim</span></div>
<div style="position:absolute;left:251px;top:258px;width:63px;height:16px;background:#d1e3e9;line-height:16px;white-space:nowrap;overflow:hidden;padding-left:1.500px;"><span style="letter-spacing:-0.049px">Subterranea</span></div>
<div style="position:absolute;left:315.5px;top:258px;width:63px;height:16px;background:#d1e3e9;line-height:16px;white-space:nowrap;overflow:hidden;padding-left:1.500px;"><span style="letter-spacing:0.019px">Construído</span></div>
<div style="position:absolute;left:380px;top:258px;width:83px;height:16px;background:#d1e3e9;line-height:16px;white-space:nowrap;overflow:hidden;padding-left:1.500px;"><span style="letter-spacing:0.275px">Gás</span></div>
<div style="position:absolute;left:464.5px;top:258px;width:94.5px;height:16px;background:#d1e3e9;line-height:16px;white-space:nowrap;overflow:hidden;text-align:right;padding-right:1px;direction:rtl;"><span style="letter-spacing:-0.114px">27.41345111791927</span></div>
<div style="position:absolute;left:561px;top:258px;width:54px;height:16px;background:#d1e3e9;line-height:16px;white-space:nowrap;overflow:hidden;padding-left:1.500px;"><span style="letter-spacing:-0.059px">Mar/2009</span></div>
<div style="position:absolute;left:617px;top:258px;width:62px;height:16px;background:#d1e3e9;line-height:16px;white-space:nowrap;overflow:hidden;padding-left:1.500px;"><span style="letter-spacing:-0.108px">Compilação</span></div>
<div style="position:absolute;left:681px;top:258px;width:127px;height:16px;background:#d1e3e9;line-height:16px;white-space:nowrap;overflow:hidden;padding-left:1.500px;"><span style="letter-spacing:0.018px">MPOG/IBGE/DGC/CCAR</span></div>
<div style="position:absolute;left:810px;top:258px;width:330px;height:16px;background:#d1e3e9;line-height:16px;white-space:nowrap;overflow:hidden;padding-left:1.500px;color:#0b3160;"><span style="letter-spacing:-0.119px">0105000020AF7901000100000001020000000A000000</span></div>
<div style="position:absolute;left:18px;top:277px;width:37px;height:15px;background:#e8f1f3;line-height:14px;white-space:nowrap;text-align:center;font-size:9.350px;color:#0b3160;border-right:1px solid #3b6a6c;border-bottom:1px solid #3b6a6c;"><span style="letter-spacing:-0.071px">Editar</span></div>
<div style="position:absolute;left:58px;top:277px;width:43px;height:15px;background:#e8f1f3;line-height:14px;white-space:nowrap;text-align:center;font-size:9.350px;color:#0b3160;border-right:1px solid #3b6a6c;border-bottom:1px solid #3b6a6c;"><span style="letter-spacing:-0.02px">Deletar</span></div>
<div style="position:absolute;left:103px;top:276px;width:20px;height:16px;background:#e8f1f3;line-height:16px;white-space:nowrap;overflow:hidden;text-align:right;padding-right:1.500px;"><span style="letter-spacing:-0.118px">7</span></div>
<div style="position:absolute;left:125px;top:276px;width:15px;height:16px;background:#e8f1f3;line-height:16px;white-space:nowrap;overflow:hidden;text-align:right;padding-right:1.500px;"><span style="letter-spacing:-0.118px">7</span></div>
<div style="position:absolute;left:141px;top:276px;width:45px;height:16px;background:#e8f1f3;line-height:16px;white-space:nowrap;overflow:hidden;padding-left:1.500px;"><span style="letter-spacing:-0.118px">11298</span></div>
<div style="position:absolute;left:188px;top:276px;width:61px;height:16px;background:#e8f1f3;line-height:16px;white-space:nowrap;overflow:hidden;padding-left:1.500px;"><span style="letter-spacing:-0.315px">Sim</span></div>
<div style="position:absolute;left:251px;top:276px;width:63px;height:16px;background:#e8f1f3;line-height:16px;white-space:nowrap;overflow:hidden;padding-left:1.500px;"><span style="letter-spacing:-0.049px">Subterranea</span></div>
<div style="position:absolute;left:315.5px;top:276px;width:63px;height:16px;background:#e8f1f3;line-height:16px;white-space:nowrap;overflow:hidden;padding-left:1.500px;"><span style="letter-spacing:0.019px">Construído</span></div>
<div style="position:absolute;left:380px;top:276px;width:83px;height:16px;background:#e8f1f3;line-height:16px;white-space:nowrap;overflow:hidden;padding-left:1.500px;"><span style="letter-spacing:0.275px">Gás</span></div>
<div style="position:absolute;left:464.5px;top:276px;width:94.5px;height:16px;background:#e8f1f3;line-height:16px;white-space:nowrap;overflow:hidden;text-align:right;padding-right:1px;direction:rtl;"><span style="letter-spacing:-0.114px">53.6824572660123</span></div>
<div style="position:absolute;left:561px;top:276px;width:54px;height:16px;background:#e8f1f3;line-height:16px;white-space:nowrap;overflow:hidden;padding-left:1.500px;"><span style="letter-spacing:-0.059px">Mar/2009</span></div>
<div style="position:absolute;left:617px;top:276px;width:62px;height:16px;background:#e8f1f3;line-height:16px;white-space:nowrap;overflow:hidden;padding-left:1.500px;"><span style="letter-spacing:-0.108px">Compilação</span></div>
<div style="position:absolute;left:681px;top:276px;width:127px;height:16px;background:#e8f1f3;line-height:16px;white-space:nowrap;overflow:hidden;padding-left:1.500px;"><span style="letter-spacing:0.018px">MPOG/IBGE/DGC/CCAR</span></div>
<div style="position:absolute;left:810px;top:276px;width:330px;height:16px;background:#e8f1f3;line-height:16px;white-space:nowrap;overflow:hidden;padding-left:1.500px;color:#0b3160;"><span style="letter-spacing:-0.119px">0105000020AF7901000100000001020000000A000000</span></div>
<div style="position:absolute;left:18px;top:295px;width:37px;height:15px;background:#d1e3e9;line-height:14px;white-space:nowrap;text-align:center;font-size:9.350px;color:#0b3160;border-right:1px solid #3b6a6c;border-bottom:1px solid #3b6a6c;"><span style="letter-spacing:-0.071px">Editar</span></div>
<div style="position:absolute;left:58px;top:295px;width:43px;height:15px;background:#d1e3e9;line-height:14px;white-space:nowrap;text-align:center;font-size:9.350px;color:#0b3160;border-right:1px solid #3b6a6c;border-bottom:1px solid #3b6a6c;"><span style="letter-spacing:-0.02px">Deletar</span></div>
<div style="position:absolute;left:103px;top:294px;width:20px;height:16px;background:#d1e3e9;line-height:16px;white-space:nowrap;overflow:hidden;text-align:right;padding-right:1.500px;"><span style="letter-spacing:-0.118px">8</span></div>
<div style="position:absolute;left:125px;top:294px;width:15px;height:16px;background:#d1e3e9;line-height:16px;white-space:nowrap;overflow:hidden;text-align:right;padding-right:1.500px;"><span style="letter-spacing:-0.118px">8</span></div>
<div style="position:absolute;left:141px;top:294px;width:45px;height:16px;background:#d1e3e9;line-height:16px;white-space:nowrap;overflow:hidden;padding-left:1.500px;"><span style="letter-spacing:-0.118px">11298</span></div>
<div style="position:absolute;left:188px;top:294px;width:61px;height:16px;background:#d1e3e9;line-height:16px;white-space:nowrap;overflow:hidden;padding-left:1.500px;"><span style="letter-spacing:-0.315px">Sim</span></div>
<div style="position:absolute;left:251px;top:294px;width:63px;height:16px;background:#d1e3e9;line-height:16px;white-space:nowrap;overflow:hidden;padding-left:1.500px;"><span style="letter-spacing:-0.049px">Subterranea</span></div>
<div style="position:absolute;left:315.5px;top:294px;width:63px;height:16px;background:#d1e3e9;line-height:16px;white-space:nowrap;overflow:hidden;padding-left:1.500px;"><span style="letter-spacing:0.019px">Construído</span></div>
<div style="position:absolute;left:380px;top:294px;width:83px;height:16px;background:#d1e3e9;line-height:16px;white-space:nowrap;overflow:hidden;padding-left:1.500px;"><span style="letter-spacing:0.275px">Gás</span></div>
<div style="position:absolute;left:464.5px;top:294px;width:94.5px;height:16px;background:#d1e3e9;line-height:16px;white-space:nowrap;overflow:hidden;text-align:right;padding-right:1px;direction:rtl;"><span style="letter-spacing:-0.114px">10.58370665386011</span></div>
<div style="position:absolute;left:561px;top:294px;width:54px;height:16px;background:#d1e3e9;line-height:16px;white-space:nowrap;overflow:hidden;padding-left:1.500px;"><span style="letter-spacing:-0.059px">Mar/2009</span></div>
<div style="position:absolute;left:617px;top:294px;width:62px;height:16px;background:#d1e3e9;line-height:16px;white-space:nowrap;overflow:hidden;padding-left:1.500px;"><span style="letter-spacing:-0.108px">Compilação</span></div>
<div style="position:absolute;left:681px;top:294px;width:127px;height:16px;background:#d1e3e9;line-height:16px;white-space:nowrap;overflow:hidden;padding-left:1.500px;"><span style="letter-spacing:0.018px">MPOG/IBGE/DGC/CCAR</span></div>
<div style="position:absolute;left:810px;top:294px;width:330px;height:16px;background:#d1e3e9;line-height:16px;white-space:nowrap;overflow:hidden;padding-left:1.500px;color:#0b3160;"><span style="letter-spacing:-0.119px">0105000020AF7901000100000001020000000A000000</span></div>
<div style="position:absolute;left:18px;top:313px;width:37px;height:15px;background:#e8f1f3;line-height:14px;white-space:nowrap;text-align:center;font-size:9.350px;color:#0b3160;border-right:1px solid #3b6a6c;border-bottom:1px solid #3b6a6c;"><span style="letter-spacing:-0.071px">Editar</span></div>
<div style="position:absolute;left:58px;top:313px;width:43px;height:15px;background:#e8f1f3;line-height:14px;white-space:nowrap;text-align:center;font-size:9.350px;color:#0b3160;border-right:1px solid #3b6a6c;border-bottom:1px solid #3b6a6c;"><span style="letter-spacing:-0.02px">Deletar</span></div>
<div style="position:absolute;left:103px;top:312px;width:20px;height:16px;background:#e8f1f3;line-height:16px;white-space:nowrap;overflow:hidden;text-align:right;padding-right:1.500px;"><span style="letter-spacing:-0.118px">9</span></div>
<div style="position:absolute;left:125px;top:312px;width:15px;height:16px;background:#e8f1f3;line-height:16px;white-space:nowrap;overflow:hidden;text-align:right;padding-right:1.500px;"><span style="letter-spacing:-0.118px">9</span></div>
<div style="position:absolute;left:141px;top:312px;width:45px;height:16px;background:#e8f1f3;line-height:16px;white-space:nowrap;overflow:hidden;padding-left:1.500px;"><span style="letter-spacing:-0.118px">11298</span></div>
<div style="position:absolute;left:188px;top:312px;width:61px;height:16px;background:#e8f1f3;line-height:16px;white-space:nowrap;overflow:hidden;padding-left:1.500px;"><span style="letter-spacing:-0.315px">Sim</span></div>
<div style="position:absolute;left:251px;top:312px;width:63px;height:16px;background:#e8f1f3;line-height:16px;white-space:nowrap;overflow:hidden;padding-left:1.500px;"><span style="letter-spacing:-0.049px">Subterranea</span></div>
<div style="position:absolute;left:315.5px;top:312px;width:63px;height:16px;background:#e8f1f3;line-height:16px;white-space:nowrap;overflow:hidden;padding-left:1.500px;"><span style="letter-spacing:0.019px">Construído</span></div>
<div style="position:absolute;left:380px;top:312px;width:83px;height:16px;background:#e8f1f3;line-height:16px;white-space:nowrap;overflow:hidden;padding-left:1.500px;"><span style="letter-spacing:0.275px">Gás</span></div>
<div style="position:absolute;left:464.5px;top:312px;width:94.5px;height:16px;background:#e8f1f3;line-height:16px;white-space:nowrap;overflow:hidden;text-align:right;padding-right:1px;direction:rtl;"><span style="letter-spacing:-0.114px">12.2057209993372</span></div>
<div style="position:absolute;left:561px;top:312px;width:54px;height:16px;background:#e8f1f3;line-height:16px;white-space:nowrap;overflow:hidden;padding-left:1.500px;"><span style="letter-spacing:-0.059px">Mar/2009</span></div>
<div style="position:absolute;left:617px;top:312px;width:62px;height:16px;background:#e8f1f3;line-height:16px;white-space:nowrap;overflow:hidden;padding-left:1.500px;"><span style="letter-spacing:-0.108px">Compilação</span></div>
<div style="position:absolute;left:681px;top:312px;width:127px;height:16px;background:#e8f1f3;line-height:16px;white-space:nowrap;overflow:hidden;padding-left:1.500px;"><span style="letter-spacing:0.018px">MPOG/IBGE/DGC/CCAR</span></div>
<div style="position:absolute;left:810px;top:312px;width:330px;height:16px;background:#e8f1f3;line-height:16px;white-space:nowrap;overflow:hidden;padding-left:1.500px;color:#0b3160;"><span style="letter-spacing:-0.119px">0105000020AF7901000100000001020000000A000000</span></div>
<div style="position:absolute;left:18px;top:331px;width:37px;height:15px;background:#d1e3e9;line-height:14px;white-space:nowrap;text-align:center;font-size:9.350px;color:#0b3160;border-right:1px solid #3b6a6c;border-bottom:1px solid #3b6a6c;"><span style="letter-spacing:-0.071px">Editar</span></div>
<div style="position:absolute;left:58px;top:331px;width:43px;height:15px;background:#d1e3e9;line-height:14px;white-space:nowrap;text-align:center;font-size:9.350px;color:#0b3160;border-right:1px solid #3b6a6c;border-bottom:1px solid #3b6a6c;"><span style="letter-spacing:-0.02px">Deletar</span></div>
<div style="position:absolute;left:103px;top:330px;width:20px;height:16px;background:#d1e3e9;line-height:16px;white-space:nowrap;overflow:hidden;text-align:right;padding-right:1.500px;"><span style="letter-spacing:-0.118px">10</span></div>
<div style="position:absolute;left:125px;top:330px;width:15px;height:16px;background:#d1e3e9;line-height:16px;white-space:nowrap;overflow:hidden;text-align:right;padding-right:1.500px;"><span style="letter-spacing:-0.118px">10</span></div>
<div style="position:absolute;left:141px;top:330px;width:45px;height:16px;background:#d1e3e9;line-height:16px;white-space:nowrap;overflow:hidden;padding-left:1.500px;"><span style="letter-spacing:-0.118px">11298</span></div>
<div style="position:absolute;left:188px;top:330px;width:61px;height:16px;background:#d1e3e9;line-height:16px;white-space:nowrap;overflow:hidden;padding-left:1.500px;"><span style="letter-spacing:-0.315px">Sim</span></div>
<div style="position:absolute;left:251px;top:330px;width:63px;height:16px;background:#d1e3e9;line-height:16px;white-space:nowrap;overflow:hidden;padding-left:1.500px;"><span style="letter-spacing:-0.049px">Subterranea</span></div>
<div style="position:absolute;left:315.5px;top:330px;width:63px;height:16px;background:#d1e3e9;line-height:16px;white-space:nowrap;overflow:hidden;padding-left:1.500px;"><span style="letter-spacing:0.019px">Construído</span></div>
<div style="position:absolute;left:380px;top:330px;width:83px;height:16px;background:#d1e3e9;line-height:16px;white-space:nowrap;overflow:hidden;padding-left:1.500px;"><span style="letter-spacing:0.275px">Gás</span></div>
<div style="position:absolute;left:464.5px;top:330px;width:94.5px;height:16px;background:#d1e3e9;line-height:16px;white-space:nowrap;overflow:hidden;text-align:right;padding-right:1px;direction:rtl;"><span style="letter-spacing:-0.114px">43.7292511838633</span></div>
<div style="position:absolute;left:561px;top:330px;width:54px;height:16px;background:#d1e3e9;line-height:16px;white-space:nowrap;overflow:hidden;padding-left:1.500px;"><span style="letter-spacing:-0.059px">Mar/2009</span></div>
<div style="position:absolute;left:617px;top:330px;width:62px;height:16px;background:#d1e3e9;line-height:16px;white-space:nowrap;overflow:hidden;padding-left:1.500px;"><span style="letter-spacing:-0.108px">Compilação</span></div>
<div style="position:absolute;left:681px;top:330px;width:127px;height:16px;background:#d1e3e9;line-height:16px;white-space:nowrap;overflow:hidden;padding-left:1.500px;"><span style="letter-spacing:0.018px">MPOG/IBGE/DGC/CCAR</span></div>
<div style="position:absolute;left:810px;top:330px;width:330px;height:16px;background:#d1e3e9;line-height:16px;white-space:nowrap;overflow:hidden;padding-left:1.500px;color:#0b3160;"><span style="letter-spacing:-0.119px">0105000020AF7901000100000001020000000A000000</span></div>
<div style="position:absolute;left:18px;top:349px;width:37px;height:15px;background:#e8f1f3;line-height:14px;white-space:nowrap;text-align:center;font-size:9.350px;color:#0b3160;border-right:1px solid #3b6a6c;border-bottom:1px solid #3b6a6c;"><span style="letter-spacing:-0.071px">Editar</span></div>
<div style="position:absolute;left:58px;top:349px;width:43px;height:15px;background:#e8f1f3;line-height:14px;white-space:nowrap;text-align:center;font-size:9.350px;color:#0b3160;border-right:1px solid #3b6a6c;border-bottom:1px solid #3b6a6c;"><span style="letter-spacing:-0.02px">Deletar</span></div>
<div style="position:absolute;left:103px;top:348px;width:20px;height:16px;background:#e8f1f3;line-height:16px;white-space:nowrap;overflow:hidden;text-align:right;padding-right:1.500px;"><span style="letter-spacing:-0.118px">11</span></div>
<div style="position:absolute;left:125px;top:348px;width:15px;height:16px;background:#e8f1f3;line-height:16px;white-space:nowrap;overflow:hidden;text-align:right;padding-right:1.500px;"><span style="letter-spacing:-0.118px">11</span></div>
<div style="position:absolute;left:141px;top:348px;width:45px;height:16px;background:#e8f1f3;line-height:16px;white-space:nowrap;overflow:hidden;padding-left:1.500px;"><span style="letter-spacing:-0.118px">11298</span></div>
<div style="position:absolute;left:188px;top:348px;width:61px;height:16px;background:#e8f1f3;line-height:16px;white-space:nowrap;overflow:hidden;padding-left:1.500px;"><span style="letter-spacing:-0.315px">Sim</span></div>
<div style="position:absolute;left:251px;top:348px;width:63px;height:16px;background:#e8f1f3;line-height:16px;white-space:nowrap;overflow:hidden;padding-left:1.500px;"><span style="letter-spacing:-0.049px">Subterranea</span></div>
<div style="position:absolute;left:315.5px;top:348px;width:63px;height:16px;background:#e8f1f3;line-height:16px;white-space:nowrap;overflow:hidden;padding-left:1.500px;"><span style="letter-spacing:0.019px">Construído</span></div>
<div style="position:absolute;left:380px;top:348px;width:83px;height:16px;background:#e8f1f3;line-height:16px;white-space:nowrap;overflow:hidden;padding-left:1.500px;"><span style="letter-spacing:0.275px">Gás</span></div>
<div style="position:absolute;left:464.5px;top:348px;width:94.5px;height:16px;background:#e8f1f3;line-height:16px;white-space:nowrap;overflow:hidden;text-align:right;padding-right:1px;direction:rtl;"><span style="letter-spacing:-0.114px">11.334567103252</span></div>
<div style="position:absolute;left:561px;top:348px;width:54px;height:16px;background:#e8f1f3;line-height:16px;white-space:nowrap;overflow:hidden;padding-left:1.500px;"><span style="letter-spacing:-0.059px">Mar/2009</span></div>
<div style="position:absolute;left:617px;top:348px;width:62px;height:16px;background:#e8f1f3;line-height:16px;white-space:nowrap;overflow:hidden;padding-left:1.500px;"><span style="letter-spacing:-0.108px">Compilação</span></div>
<div style="position:absolute;left:681px;top:348px;width:127px;height:16px;background:#e8f1f3;line-height:16px;white-space:nowrap;overflow:hidden;padding-left:1.500px;"><span style="letter-spacing:0.018px">MPOG/IBGE/DGC/CCAR</span></div>
<div style="position:absolute;left:810px;top:348px;width:330px;height:16px;background:#e8f1f3;line-height:16px;white-space:nowrap;overflow:hidden;padding-left:1.500px;color:#0b3160;"><span style="letter-spacing:-0.119px">0105000020AF7901000100000001020000000A000000</span></div>
<div style="position:absolute;left:18px;top:367px;width:37px;height:15px;background:#d1e3e9;line-height:14px;white-space:nowrap;text-align:center;font-size:9.350px;color:#0b3160;border-right:1px solid #3b6a6c;border-bottom:1px solid #3b6a6c;"><span style="letter-spacing:-0.071px">Editar</span></div>
<div style="position:absolute;left:58px;top:367px;width:43px;height:15px;background:#d1e3e9;line-height:14px;white-space:nowrap;text-align:center;font-size:9.350px;color:#0b3160;border-right:1px solid #3b6a6c;border-bottom:1px solid #3b6a6c;"><span style="letter-spacing:-0.02px">Deletar</span></div>
<div style="position:absolute;left:103px;top:366px;width:20px;height:16px;background:#d1e3e9;line-height:16px;white-space:nowrap;overflow:hidden;text-align:right;padding-right:1.500px;"><span style="letter-spacing:-0.118px">12</span></div>
<div style="position:absolute;left:125px;top:366px;width:15px;height:16px;background:#d1e3e9;line-height:16px;white-space:nowrap;overflow:hidden;text-align:right;padding-right:1.500px;"><span style="letter-spacing:-0.118px">12</span></div>
<div style="position:absolute;left:141px;top:366px;width:45px;height:16px;background:#d1e3e9;line-height:16px;white-space:nowrap;overflow:hidden;padding-left:1.500px;"><span style="letter-spacing:-0.118px">11298</span></div>
<div style="position:absolute;left:188px;top:366px;width:61px;height:16px;background:#d1e3e9;line-height:16px;white-space:nowrap;overflow:hidden;padding-left:1.500px;"><span style="letter-spacing:-0.315px">Sim</span></div>
<div style="position:absolute;left:251px;top:366px;width:63px;height:16px;background:#d1e3e9;line-height:16px;white-space:nowrap;overflow:hidden;padding-left:1.500px;"><span style="letter-spacing:-0.049px">Subterranea</span></div>
<div style="position:absolute;left:315.5px;top:366px;width:63px;height:16px;background:#d1e3e9;line-height:16px;white-space:nowrap;overflow:hidden;padding-left:1.500px;"><span style="letter-spacing:0.019px">Construído</span></div>
<div style="position:absolute;left:380px;top:366px;width:83px;height:16px;background:#d1e3e9;line-height:16px;white-space:nowrap;overflow:hidden;padding-left:1.500px;"><span style="letter-spacing:0.275px">Gás</span></div>
<div style="position:absolute;left:464.5px;top:366px;width:94.5px;height:16px;background:#d1e3e9;line-height:16px;white-space:nowrap;overflow:hidden;text-align:right;padding-right:1px;direction:rtl;"><span style="letter-spacing:-0.114px">10.0684674019371</span></div>
<div style="position:absolute;left:561px;top:366px;width:54px;height:16px;background:#d1e3e9;line-height:16px;white-space:nowrap;overflow:hidden;padding-left:1.500px;"><span style="letter-spacing:-0.059px">Mar/2009</span></div>
<div style="position:absolute;left:617px;top:366px;width:62px;height:16px;background:#d1e3e9;line-height:16px;white-space:nowrap;overflow:hidden;padding-left:1.500px;"><span style="letter-spacing:-0.108px">Compilação</span></div>
<div style="position:absolute;left:681px;top:366px;width:127px;height:16px;background:#d1e3e9;line-height:16px;white-space:nowrap;overflow:hidden;padding-left:1.500px;"><span style="letter-spacing:0.018px">MPOG/IBGE/DGC/CCAR</span></div>
<div style="position:absolute;left:810px;top:366px;width:330px;height:16px;background:#d1e3e9;line-height:16px;white-space:nowrap;overflow:hidden;padding-left:1.500px;color:#0b3160;"><span style="letter-spacing:-0.119px">0105000020AF7901000100000001020000000A000000</span></div>
<div style="position:absolute;left:18px;top:385px;width:37px;height:15px;background:#e8f1f3;line-height:14px;white-space:nowrap;text-align:center;font-size:9.350px;color:#0b3160;border-right:1px solid #3b6a6c;border-bottom:1px solid #3b6a6c;"><span style="letter-spacing:-0.071px">Editar</span></div>
<div style="position:absolute;left:58px;top:385px;width:43px;height:15px;background:#e8f1f3;line-height:14px;white-space:nowrap;text-align:center;font-size:9.350px;color:#0b3160;border-right:1px solid #3b6a6c;border-bottom:1px solid #3b6a6c;"><span style="letter-spacing:-0.02px">Deletar</span></div>
<div style="position:absolute;left:103px;top:384px;width:20px;height:16px;background:#e8f1f3;line-height:16px;white-space:nowrap;overflow:hidden;text-align:right;padding-right:1.500px;"><span style="letter-spacing:-0.118px">13</span></div>
<div style="position:absolute;left:125px;top:384px;width:15px;height:16px;background:#e8f1f3;line-height:16px;white-space:nowrap;overflow:hidden;text-align:right;padding-right:1.500px;"><span style="letter-spacing:-0.118px">13</span></div>
<div style="position:absolute;left:141px;top:384px;width:45px;height:16px;background:#e8f1f3;line-height:16px;white-space:nowrap;overflow:hidden;padding-left:1.500px;"><span style="letter-spacing:-0.118px">11298</span></div>
<div style="position:absolute;left:188px;top:384px;width:61px;height:16px;background:#e8f1f3;line-height:16px;white-space:nowrap;overflow:hidden;padding-left:1.500px;"><span style="letter-spacing:-0.315px">Sim</span></div>
<div style="position:absolute;left:251px;top:384px;width:63px;height:16px;background:#e8f1f3;line-height:16px;white-space:nowrap;overflow:hidden;padding-left:1.500px;"><span style="letter-spacing:-0.049px">Subterranea</span></div>
<div style="position:absolute;left:315.5px;top:384px;width:63px;height:16px;background:#e8f1f3;line-height:16px;white-space:nowrap;overflow:hidden;padding-left:1.500px;"><span style="letter-spacing:0.019px">Construído</span></div>
<div style="position:absolute;left:380px;top:384px;width:83px;height:16px;background:#e8f1f3;line-height:16px;white-space:nowrap;overflow:hidden;padding-left:1.500px;"><span style="letter-spacing:0.275px">Gás</span></div>
<div style="position:absolute;left:464.5px;top:384px;width:94.5px;height:16px;background:#e8f1f3;line-height:16px;white-space:nowrap;overflow:hidden;text-align:right;padding-right:1px;direction:rtl;"><span style="letter-spacing:-0.114px">4.59257371149892</span></div>
<div style="position:absolute;left:561px;top:384px;width:54px;height:16px;background:#e8f1f3;line-height:16px;white-space:nowrap;overflow:hidden;padding-left:1.500px;"><span style="letter-spacing:-0.059px">Mar/2009</span></div>
<div style="position:absolute;left:617px;top:384px;width:62px;height:16px;background:#e8f1f3;line-height:16px;white-space:nowrap;overflow:hidden;padding-left:1.500px;"><span style="letter-spacing:-0.108px">Compilação</span></div>
<div style="position:absolute;left:681px;top:384px;width:127px;height:16px;background:#e8f1f3;line-height:16px;white-space:nowrap;overflow:hidden;padding-left:1.500px;"><span style="letter-spacing:0.018px">MPOG/IBGE/DGC/CCAR</span></div>
<div style="position:absolute;left:810px;top:384px;width:330px;height:16px;background:#e8f1f3;line-height:16px;white-space:nowrap;overflow:hidden;padding-left:1.500px;color:#0b3160;"><span style="letter-spacing:-0.119px">0105000020AF7901000100000001020000000A000000</span></div>
<div style="position:absolute;left:18px;top:403px;width:37px;height:15px;background:#d1e3e9;line-height:14px;white-space:nowrap;text-align:center;font-size:9.350px;color:#0b3160;border-right:1px solid #3b6a6c;border-bottom:1px solid #3b6a6c;"><span style="letter-spacing:-0.071px">Editar</span></div>
<div style="position:absolute;left:58px;top:403px;width:43px;height:15px;background:#d1e3e9;line-height:14px;white-space:nowrap;text-align:center;font-size:9.350px;color:#0b3160;border-right:1px solid #3b6a6c;border-bottom:1px solid #3b6a6c;"><span style="letter-spacing:-0.02px">Deletar</span></div>
<div style="position:absolute;left:103px;top:402px;width:20px;height:16px;background:#d1e3e9;line-height:16px;white-space:nowrap;overflow:hidden;text-align:right;padding-right:1.500px;"><span style="letter-spacing:-0.118px">14</span></div>
<div style="position:absolute;left:125px;top:402px;width:15px;height:16px;background:#d1e3e9;line-height:16px;white-space:nowrap;overflow:hidden;text-align:right;padding-right:1.500px;"><span style="letter-spacing:-0.118px">14</span></div>
<div style="position:absolute;left:141px;top:402px;width:45px;height:16px;background:#d1e3e9;line-height:16px;white-space:nowrap;overflow:hidden;padding-left:1.500px;"><span style="letter-spacing:-0.118px">11298</span></div>
<div style="position:absolute;left:188px;top:402px;width:61px;height:16px;background:#d1e3e9;line-height:16px;white-space:nowrap;overflow:hidden;padding-left:1.500px;"><span style="letter-spacing:-0.315px">Sim</span></div>
<div style="position:absolute;left:251px;top:402px;width:63px;height:16px;background:#d1e3e9;line-height:16px;white-space:nowrap;overflow:hidden;padding-left:1.500px;"><span style="letter-spacing:-0.049px">Subterranea</span></div>
<div style="position:absolute;left:315.5px;top:402px;width:63px;height:16px;background:#d1e3e9;line-height:16px;white-space:nowrap;overflow:hidden;padding-left:1.500px;"><span style="letter-spacing:0.019px">Construído</span></div>
<div style="position:absolute;left:380px;top:402px;width:83px;height:16px;background:#d1e3e9;line-height:16px;white-space:nowrap;overflow:hidden;padding-left:1.500px;"><span style="letter-spacing:0.275px">Gás</span></div>
<div style="position:absolute;left:464.5px;top:402px;width:94.5px;height:16px;background:#d1e3e9;line-height:16px;white-space:nowrap;overflow:hidden;text-align:right;padding-right:1px;direction:rtl;"><span style="letter-spacing:-0.114px">15.0773768837933</span></div>
<div style="position:absolute;left:561px;top:402px;width:54px;height:16px;background:#d1e3e9;line-height:16px;white-space:nowrap;overflow:hidden;padding-left:1.500px;"><span style="letter-spacing:-0.059px">Mar/2009</span></div>
<div style="position:absolute;left:617px;top:402px;width:62px;height:16px;background:#d1e3e9;line-height:16px;white-space:nowrap;overflow:hidden;padding-left:1.500px;"><span style="letter-spacing:-0.108px">Compilação</span></div>
<div style="position:absolute;left:681px;top:402px;width:127px;height:16px;background:#d1e3e9;line-height:16px;white-space:nowrap;overflow:hidden;padding-left:1.500px;"><span style="letter-spacing:0.018px">MPOG/IBGE/DGC/CCAR</span></div>
<div style="position:absolute;left:810px;top:402px;width:330px;height:16px;background:#d1e3e9;line-height:16px;white-space:nowrap;overflow:hidden;padding-left:1.500px;color:#0b3160;"><span style="letter-spacing:-0.119px">0105000020AF7901000100000001020000000A000000</span></div>
<div style="position:absolute;left:18px;top:421px;width:37px;height:15px;background:#e8f1f3;line-height:14px;white-space:nowrap;text-align:center;font-size:9.350px;color:#0b3160;border-right:1px solid #3b6a6c;border-bottom:1px solid #3b6a6c;"><span style="letter-spacing:-0.071px">Editar</span></div>
<div style="position:absolute;left:58px;top:421px;width:43px;height:15px;background:#e8f1f3;line-height:14px;white-space:nowrap;text-align:center;font-size:9.350px;color:#0b3160;border-right:1px solid #3b6a6c;border-bottom:1px solid #3b6a6c;"><span style="letter-spacing:-0.02px">Deletar</span></div>
<div style="position:absolute;left:103px;top:420px;width:20px;height:16px;background:#e8f1f3;line-height:16px;white-space:nowrap;overflow:hidden;text-align:right;padding-right:1.500px;"><span style="letter-spacing:-0.118px">15</span></div>
<div style="position:absolute;left:125px;top:420px;width:15px;height:16px;background:#e8f1f3;line-height:16px;white-space:nowrap;overflow:hidden;text-align:right;padding-right:1.500px;"><span style="letter-spacing:-0.118px">15</span></div>
<div style="position:absolute;left:141px;top:420px;width:45px;height:16px;background:#e8f1f3;line-height:16px;white-space:nowrap;overflow:hidden;padding-left:1.500px;"><span style="letter-spacing:-0.118px">11298</span></div>
<div style="position:absolute;left:188px;top:420px;width:61px;height:16px;background:#e8f1f3;line-height:16px;white-space:nowrap;overflow:hidden;padding-left:1.500px;"><span style="letter-spacing:-0.315px">Sim</span></div>
<div style="position:absolute;left:251px;top:420px;width:63px;height:16px;background:#e8f1f3;line-height:16px;white-space:nowrap;overflow:hidden;padding-left:1.500px;"><span style="letter-spacing:-0.049px">Subterranea</span></div>
<div style="position:absolute;left:315.5px;top:420px;width:63px;height:16px;background:#e8f1f3;line-height:16px;white-space:nowrap;overflow:hidden;padding-left:1.500px;"><span style="letter-spacing:0.019px">Construído</span></div>
<div style="position:absolute;left:380px;top:420px;width:83px;height:16px;background:#e8f1f3;line-height:16px;white-space:nowrap;overflow:hidden;padding-left:1.500px;"><span style="letter-spacing:0.275px">Gás</span></div>
<div style="position:absolute;left:464.5px;top:420px;width:94.5px;height:16px;background:#e8f1f3;line-height:16px;white-space:nowrap;overflow:hidden;text-align:right;padding-right:1px;direction:rtl;"><span style="letter-spacing:-0.114px">62.4331713522228</span></div>
<div style="position:absolute;left:561px;top:420px;width:54px;height:16px;background:#e8f1f3;line-height:16px;white-space:nowrap;overflow:hidden;padding-left:1.500px;"><span style="letter-spacing:-0.059px">Mar/2009</span></div>
<div style="position:absolute;left:617px;top:420px;width:62px;height:16px;background:#e8f1f3;line-height:16px;white-space:nowrap;overflow:hidden;padding-left:1.500px;"><span style="letter-spacing:-0.108px">Compilação</span></div>
<div style="position:absolute;left:681px;top:420px;width:127px;height:16px;background:#e8f1f3;line-height:16px;white-space:nowrap;overflow:hidden;padding-left:1.500px;"><span style="letter-spacing:0.018px">MPOG/IBGE/DGC/CCAR</span></div>
<div style="position:absolute;left:810px;top:420px;width:330px;height:16px;background:#e8f1f3;line-height:16px;white-space:nowrap;overflow:hidden;padding-left:1.500px;color:#0b3160;"><span style="letter-spacing:-0.119px">0105000020AF7901000100000001020000000A000000</span></div>
<div style="position:absolute;left:18px;top:439px;width:37px;height:15px;background:#d1e3e9;line-height:14px;white-space:nowrap;text-align:center;font-size:9.350px;color:#0b3160;border-right:1px solid #3b6a6c;border-bottom:1px solid #3b6a6c;"><span style="letter-spacing:-0.071px">Editar</span></div>
<div style="position:absolute;left:58px;top:439px;width:43px;height:15px;background:#d1e3e9;line-height:14px;white-space:nowrap;text-align:center;font-size:9.350px;color:#0b3160;border-right:1px solid #3b6a6c;border-bottom:1px solid #3b6a6c;"><span style="letter-spacing:-0.02px">Deletar</span></div>
<div style="position:absolute;left:103px;top:438px;width:20px;height:16px;background:#d1e3e9;line-height:16px;white-space:nowrap;overflow:hidden;text-align:right;padding-right:1.500px;"><span style="letter-spacing:-0.118px">16</span></div>
<div style="position:absolute;left:125px;top:438px;width:15px;height:16px;background:#d1e3e9;line-height:16px;white-space:nowrap;overflow:hidden;text-align:right;padding-right:1.500px;"><span style="letter-spacing:-0.118px">16</span></div>
<div style="position:absolute;left:141px;top:438px;width:45px;height:16px;background:#d1e3e9;line-height:16px;white-space:nowrap;overflow:hidden;padding-left:1.500px;"><span style="letter-spacing:-0.118px">11298</span></div>
<div style="position:absolute;left:188px;top:438px;width:61px;height:16px;background:#d1e3e9;line-height:16px;white-space:nowrap;overflow:hidden;padding-left:1.500px;"><span style="letter-spacing:-0.315px">Sim</span></div>
<div style="position:absolute;left:251px;top:438px;width:63px;height:16px;background:#d1e3e9;line-height:16px;white-space:nowrap;overflow:hidden;padding-left:1.500px;"><span style="letter-spacing:-0.049px">Subterranea</span></div>
<div style="position:absolute;left:315.5px;top:438px;width:63px;height:16px;background:#d1e3e9;line-height:16px;white-space:nowrap;overflow:hidden;padding-left:1.500px;"><span style="letter-spacing:0.019px">Construído</span></div>
<div style="position:absolute;left:380px;top:438px;width:83px;height:16px;background:#d1e3e9;line-height:16px;white-space:nowrap;overflow:hidden;padding-left:1.500px;"><span style="letter-spacing:0.275px">Gás</span></div>
<div style="position:absolute;left:464.5px;top:438px;width:94.5px;height:16px;background:#d1e3e9;line-height:16px;white-space:nowrap;overflow:hidden;text-align:right;padding-right:1px;direction:rtl;"><span style="letter-spacing:-0.114px">12.1281363542237</span></div>
<div style="position:absolute;left:561px;top:438px;width:54px;height:16px;background:#d1e3e9;line-height:16px;white-space:nowrap;overflow:hidden;padding-left:1.500px;"><span style="letter-spacing:-0.059px">Mar/2009</span></div>
<div style="position:absolute;left:617px;top:438px;width:62px;height:16px;background:#d1e3e9;line-height:16px;white-space:nowrap;overflow:hidden;padding-left:1.500px;"><span style="letter-spacing:-0.108px">Compilação</span></div>
<div style="position:absolute;left:681px;top:438px;width:127px;height:16px;background:#d1e3e9;line-height:16px;white-space:nowrap;overflow:hidden;padding-left:1.500px;"><span style="letter-spacing:0.018px">MPOG/IBGE/DGC/CCAR</span></div>
<div style="position:absolute;left:810px;top:438px;width:330px;height:16px;background:#d1e3e9;line-height:16px;white-space:nowrap;overflow:hidden;padding-left:1.500px;color:#0b3160;"><span style="letter-spacing:-0.119px">0105000020AF7901000100000001020000000A000000</span></div>
<div style="position:absolute;left:18px;top:457px;width:37px;height:15px;background:#e8f1f3;line-height:14px;white-space:nowrap;text-align:center;font-size:9.350px;color:#0b3160;border-right:1px solid #3b6a6c;border-bottom:1px solid #3b6a6c;"><span style="letter-spacing:-0.071px">Editar</span></div>
<div style="position:absolute;left:58px;top:457px;width:43px;height:15px;background:#e8f1f3;line-height:14px;white-space:nowrap;text-align:center;font-size:9.350px;color:#0b3160;border-right:1px solid #3b6a6c;border-bottom:1px solid #3b6a6c;"><span style="letter-spacing:-0.02px">Deletar</span></div>
<div style="position:absolute;left:103px;top:456px;width:20px;height:16px;background:#e8f1f3;line-height:16px;white-space:nowrap;overflow:hidden;text-align:right;padding-right:1.500px;"><span style="letter-spacing:-0.118px">17</span></div>
<div style="position:absolute;left:125px;top:456px;width:15px;height:16px;background:#e8f1f3;line-height:16px;white-space:nowrap;overflow:hidden;text-align:right;padding-right:1.500px;"><span style="letter-spacing:-0.118px">17</span></div>
<div style="position:absolute;left:141px;top:456px;width:45px;height:16px;background:#e8f1f3;line-height:16px;white-space:nowrap;overflow:hidden;padding-left:1.500px;"><span style="letter-spacing:-0.118px">11298</span></div>
<div style="position:absolute;left:188px;top:456px;width:61px;height:16px;background:#e8f1f3;line-height:16px;white-space:nowrap;overflow:hidden;padding-left:1.500px;"><span style="letter-spacing:-0.315px">Sim</span></div>
<div style="position:absolute;left:251px;top:456px;width:63px;height:16px;background:#e8f1f3;line-height:16px;white-space:nowrap;overflow:hidden;padding-left:1.500px;"><span style="letter-spacing:-0.049px">Subterranea</span></div>
<div style="position:absolute;left:315.5px;top:456px;width:63px;height:16px;background:#e8f1f3;line-height:16px;white-space:nowrap;overflow:hidden;padding-left:1.500px;"><span style="letter-spacing:0.019px">Construído</span></div>
<div style="position:absolute;left:380px;top:456px;width:83px;height:16px;background:#e8f1f3;line-height:16px;white-space:nowrap;overflow:hidden;padding-left:1.500px;"><span style="letter-spacing:0.275px">Gás</span></div>
<div style="position:absolute;left:464.5px;top:456px;width:94.5px;height:16px;background:#e8f1f3;line-height:16px;white-space:nowrap;overflow:hidden;text-align:right;padding-right:1px;direction:rtl;"><span style="letter-spacing:-0.114px">2.79086130609577</span></div>
<div style="position:absolute;left:561px;top:456px;width:54px;height:16px;background:#e8f1f3;line-height:16px;white-space:nowrap;overflow:hidden;padding-left:1.500px;"><span style="letter-spacing:-0.059px">Mar/2009</span></div>
<div style="position:absolute;left:617px;top:456px;width:62px;height:16px;background:#e8f1f3;line-height:16px;white-space:nowrap;overflow:hidden;padding-left:1.500px;"><span style="letter-spacing:-0.108px">Compilação</span></div>
<div style="position:absolute;left:681px;top:456px;width:127px;height:16px;background:#e8f1f3;line-height:16px;white-space:nowrap;overflow:hidden;padding-left:1.500px;"><span style="letter-spacing:0.018px">MPOG/IBGE/DGC/CCAR</span></div>
<div style="position:absolute;left:810px;top:456px;width:330px;height:16px;background:#e8f1f3;line-height:16px;white-space:nowrap;overflow:hidden;padding-left:1.500px;color:#0b3160;"><span style="letter-spacing:-0.119px">0105000020AF7901000100000001020000000A000000</span></div>
<div style="position:absolute;left:18px;top:475px;width:37px;height:15px;background:#d1e3e9;line-height:14px;white-space:nowrap;text-align:center;font-size:9.350px;color:#0b3160;border-right:1px solid #3b6a6c;border-bottom:1px solid #3b6a6c;"><span style="letter-spacing:-0.071px">Editar</span></div>
<div style="position:absolute;left:58px;top:475px;width:43px;height:15px;background:#d1e3e9;line-height:14px;white-space:nowrap;text-align:center;font-size:9.350px;color:#0b3160;border-right:1px solid #3b6a6c;border-bottom:1px solid #3b6a6c;"><span style="letter-spacing:-0.02px">Deletar</span></div>
<div style="position:absolute;left:103px;top:474px;width:20px;height:16px;background:#d1e3e9;line-height:16px;white-space:nowrap;overflow:hidden;text-align:right;padding-right:1.500px;"><span style="letter-spacing:-0.118px">18</span></div>
<div style="position:absolute;left:125px;top:474px;width:15px;height:16px;background:#d1e3e9;line-height:16px;white-space:nowrap;overflow:hidden;text-align:right;padding-right:1.500px;"><span style="letter-spacing:-0.118px">18</span></div>
<div style="position:absolute;left:141px;top:474px;width:45px;height:16px;background:#d1e3e9;line-height:16px;white-space:nowrap;overflow:hidden;padding-left:1.500px;"><span style="letter-spacing:-0.118px">11298</span></div>
<div style="position:absolute;left:188px;top:474px;width:61px;height:16px;background:#d1e3e9;line-height:16px;white-space:nowrap;overflow:hidden;padding-left:1.500px;"><span style="letter-spacing:-0.315px">Sim</span></div>
<div style="position:absolute;left:251px;top:474px;width:63px;height:16px;background:#d1e3e9;line-height:16px;white-space:nowrap;overflow:hidden;padding-left:1.500px;"><span style="letter-spacing:-0.049px">Subterranea</span></div>
<div style="position:absolute;left:315.5px;top:474px;width:63px;height:16px;background:#d1e3e9;line-height:16px;white-space:nowrap;overflow:hidden;padding-left:1.500px;"><span style="letter-spacing:0.019px">Construído</span></div>
<div style="position:absolute;left:380px;top:474px;width:83px;height:16px;background:#d1e3e9;line-height:16px;white-space:nowrap;overflow:hidden;padding-left:1.500px;"><span style="letter-spacing:0.275px">Gás</span></div>
<div style="position:absolute;left:464.5px;top:474px;width:94.5px;height:16px;background:#d1e3e9;line-height:16px;white-space:nowrap;overflow:hidden;text-align:right;padding-right:1px;direction:rtl;"><span style="letter-spacing:-0.114px">9.53765243955811</span></div>
<div style="position:absolute;left:561px;top:474px;width:54px;height:16px;background:#d1e3e9;line-height:16px;white-space:nowrap;overflow:hidden;padding-left:1.500px;"><span style="letter-spacing:-0.059px">Mar/2009</span></div>
<div style="position:absolute;left:617px;top:474px;width:62px;height:16px;background:#d1e3e9;line-height:16px;white-space:nowrap;overflow:hidden;padding-left:1.500px;"><span style="letter-spacing:-0.108px">Compilação</span></div>
<div style="position:absolute;left:681px;top:474px;width:127px;height:16px;background:#d1e3e9;line-height:16px;white-space:nowrap;overflow:hidden;padding-left:1.500px;"><span style="letter-spacing:0.018px">MPOG/IBGE/DGC/CCAR</span></div>
<div style="position:absolute;left:810px;top:474px;width:330px;height:16px;background:#d1e3e9;line-height:16px;white-space:nowrap;overflow:hidden;padding-left:1.500px;color:#0b3160;"><span style="letter-spacing:-0.119px">0105000020AF7901000100000001020000000A000000</span></div>
<div style="position:absolute;left:18px;top:493px;width:37px;height:15px;background:#e8f1f3;line-height:14px;white-space:nowrap;text-align:center;font-size:9.350px;color:#0b3160;border-right:1px solid #3b6a6c;border-bottom:1px solid #3b6a6c;"><span style="letter-spacing:-0.071px">Editar</span></div>
<div style="position:absolute;left:58px;top:493px;width:43px;height:15px;background:#e8f1f3;line-height:14px;white-space:nowrap;text-align:center;font-size:9.350px;color:#0b3160;border-right:1px solid #3b6a6c;border-bottom:1px solid #3b6a6c;"><span style="letter-spacing:-0.02px">Deletar</span></div>
<div style="position:absolute;left:103px;top:492px;width:20px;height:16px;background:#e8f1f3;line-height:16px;white-space:nowrap;overflow:hidden;text-align:right;padding-right:1.500px;"><span style="letter-spacing:-0.118px">19</span></div>
<div style="position:absolute;left:125px;top:492px;width:15px;height:16px;background:#e8f1f3;line-height:16px;white-space:nowrap;overflow:hidden;text-align:right;padding-right:1.500px;"><span style="letter-spacing:-0.118px">19</span></div>
<div style="position:absolute;left:141px;top:492px;width:45px;height:16px;background:#e8f1f3;line-height:16px;white-space:nowrap;overflow:hidden;padding-left:1.500px;"><span style="letter-spacing:-0.118px">11298</span></div>
<div style="position:absolute;left:188px;top:492px;width:61px;height:16px;background:#e8f1f3;line-height:16px;white-space:nowrap;overflow:hidden;padding-left:1.500px;"><span style="letter-spacing:-0.315px">Sim</span></div>
<div style="position:absolute;left:251px;top:492px;width:63px;height:16px;background:#e8f1f3;line-height:16px;white-space:nowrap;overflow:hidden;padding-left:1.500px;"><span style="letter-spacing:-0.049px">Subterranea</span></div>
<div style="position:absolute;left:315.5px;top:492px;width:63px;height:16px;background:#e8f1f3;line-height:16px;white-space:nowrap;overflow:hidden;padding-left:1.500px;"><span style="letter-spacing:0.019px">Construído</span></div>
<div style="position:absolute;left:380px;top:492px;width:83px;height:16px;background:#e8f1f3;line-height:16px;white-space:nowrap;overflow:hidden;padding-left:1.500px;"><span style="letter-spacing:0.275px">Gás</span></div>
<div style="position:absolute;left:464.5px;top:492px;width:94.5px;height:16px;background:#e8f1f3;line-height:16px;white-space:nowrap;overflow:hidden;text-align:right;padding-right:1px;direction:rtl;"><span style="letter-spacing:-0.114px">19.5287484343168</span></div>
<div style="position:absolute;left:561px;top:492px;width:54px;height:16px;background:#e8f1f3;line-height:16px;white-space:nowrap;overflow:hidden;padding-left:1.500px;"><span style="letter-spacing:-0.059px">Mar/2009</span></div>
<div style="position:absolute;left:617px;top:492px;width:62px;height:16px;background:#e8f1f3;line-height:16px;white-space:nowrap;overflow:hidden;padding-left:1.500px;"><span style="letter-spacing:-0.108px">Compilação</span></div>
<div style="position:absolute;left:681px;top:492px;width:127px;height:16px;background:#e8f1f3;line-height:16px;white-space:nowrap;overflow:hidden;padding-left:1.500px;"><span style="letter-spacing:0.018px">MPOG/IBGE/DGC/CCAR</span></div>
<div style="position:absolute;left:810px;top:492px;width:330px;height:16px;background:#e8f1f3;line-height:16px;white-space:nowrap;overflow:hidden;padding-left:1.500px;color:#0b3160;"><span style="letter-spacing:-0.119px">0105000020AF7901000100000001020000000A000000</span></div>
<div style="position:absolute;left:18px;top:511px;width:37px;height:15px;background:#d1e3e9;line-height:14px;white-space:nowrap;text-align:center;font-size:9.350px;color:#0b3160;border-right:1px solid #3b6a6c;border-bottom:1px solid #3b6a6c;"><span style="letter-spacing:-0.071px">Editar</span></div>
<div style="position:absolute;left:58px;top:511px;width:43px;height:15px;background:#d1e3e9;line-height:14px;white-space:nowrap;text-align:center;font-size:9.350px;color:#0b3160;border-right:1px solid #3b6a6c;border-bottom:1px solid #3b6a6c;"><span style="letter-spacing:-0.02px">Deletar</span></div>
<div style="position:absolute;left:103px;top:510px;width:20px;height:16px;background:#d1e3e9;line-height:16px;white-space:nowrap;overflow:hidden;text-align:right;padding-right:1.500px;"><span style="letter-spacing:-0.118px">20</span></div>
<div style="position:absolute;left:125px;top:510px;width:15px;height:16px;background:#d1e3e9;line-height:16px;white-space:nowrap;overflow:hidden;text-align:right;padding-right:1.500px;"><span style="letter-spacing:-0.118px">20</span></div>
<div style="position:absolute;left:141px;top:510px;width:45px;height:16px;background:#d1e3e9;line-height:16px;white-space:nowrap;overflow:hidden;padding-left:1.500px;"><span style="letter-spacing:-0.118px">11298</span></div>
<div style="position:absolute;left:188px;top:510px;width:61px;height:16px;background:#d1e3e9;line-height:16px;white-space:nowrap;overflow:hidden;padding-left:1.500px;"><span style="letter-spacing:-0.315px">Sim</span></div>
<div style="position:absolute;left:251px;top:510px;width:63px;height:16px;background:#d1e3e9;line-height:16px;white-space:nowrap;overflow:hidden;padding-left:1.500px;"><span style="letter-spacing:-0.049px">Subterranea</span></div>
<div style="position:absolute;left:315.5px;top:510px;width:63px;height:16px;background:#d1e3e9;line-height:16px;white-space:nowrap;overflow:hidden;padding-left:1.500px;"><span style="letter-spacing:0.019px">Construído</span></div>
<div style="position:absolute;left:380px;top:510px;width:83px;height:16px;background:#d1e3e9;line-height:16px;white-space:nowrap;overflow:hidden;padding-left:1.500px;"><span style="letter-spacing:0.275px">Gás</span></div>
<div style="position:absolute;left:464.5px;top:510px;width:94.5px;height:16px;background:#d1e3e9;line-height:16px;white-space:nowrap;overflow:hidden;text-align:right;padding-right:1px;direction:rtl;"><span style="letter-spacing:-0.114px">25.2920383046705</span></div>
<div style="position:absolute;left:561px;top:510px;width:54px;height:16px;background:#d1e3e9;line-height:16px;white-space:nowrap;overflow:hidden;padding-left:1.500px;"><span style="letter-spacing:-0.059px">Mar/2009</span></div>
<div style="position:absolute;left:617px;top:510px;width:62px;height:16px;background:#d1e3e9;line-height:16px;white-space:nowrap;overflow:hidden;padding-left:1.500px;"><span style="letter-spacing:-0.108px">Compilação</span></div>
<div style="position:absolute;left:681px;top:510px;width:127px;height:16px;background:#d1e3e9;line-height:16px;white-space:nowrap;overflow:hidden;padding-left:1.500px;"><span style="letter-spacing:0.018px">MPOG/IBGE/DGC/CCAR</span></div>
<div style="position:absolute;left:810px;top:510px;width:330px;height:16px;background:#d1e3e9;line-height:16px;white-space:nowrap;overflow:hidden;padding-left:1.500px;color:#0b3160;"><span style="letter-spacing:-0.119px">0105000020AF7901000100000001020000000A000000</span></div>
<div style="position:absolute;left:18px;top:529px;width:37px;height:15px;background:#e8f1f3;line-height:14px;white-space:nowrap;text-align:center;font-size:9.350px;color:#0b3160;border-right:1px solid #3b6a6c;border-bottom:1px solid #3b6a6c;"><span style="letter-spacing:-0.071px">Editar</span></div>
<div style="position:absolute;left:58px;top:529px;width:43px;height:15px;background:#e8f1f3;line-height:14px;white-space:nowrap;text-align:center;font-size:9.350px;color:#0b3160;border-right:1px solid #3b6a6c;border-bottom:1px solid #3b6a6c;"><span style="letter-spacing:-0.02px">Deletar</span></div>
<div style="position:absolute;left:103px;top:528px;width:20px;height:16px;background:#e8f1f3;line-height:16px;white-space:nowrap;overflow:hidden;text-align:right;padding-right:1.500px;"><span style="letter-spacing:-0.118px">21</span></div>
<div style="position:absolute;left:125px;top:528px;width:15px;height:16px;background:#e8f1f3;line-height:16px;white-space:nowrap;overflow:hidden;text-align:right;padding-right:1.500px;"><span style="letter-spacing:-0.118px">21</span></div>
<div style="position:absolute;left:141px;top:528px;width:45px;height:16px;background:#e8f1f3;line-height:16px;white-space:nowrap;overflow:hidden;padding-left:1.500px;"><span style="letter-spacing:-0.118px">11298</span></div>
<div style="position:absolute;left:188px;top:528px;width:61px;height:16px;background:#e8f1f3;line-height:16px;white-space:nowrap;overflow:hidden;padding-left:1.500px;"><span style="letter-spacing:-0.315px">Sim</span></div>
<div style="position:absolute;left:251px;top:528px;width:63px;height:16px;background:#e8f1f3;line-height:16px;white-space:nowrap;overflow:hidden;padding-left:1.500px;"><span style="letter-spacing:-0.049px">Subterranea</span></div>
<div style="position:absolute;left:315.5px;top:528px;width:63px;height:16px;background:#e8f1f3;line-height:16px;white-space:nowrap;overflow:hidden;padding-left:1.500px;"><span style="letter-spacing:0.019px">Construído</span></div>
<div style="position:absolute;left:380px;top:528px;width:83px;height:16px;background:#e8f1f3;line-height:16px;white-space:nowrap;overflow:hidden;padding-left:1.500px;"><span style="letter-spacing:0.275px">Gás</span></div>
<div style="position:absolute;left:464.5px;top:528px;width:94.5px;height:16px;background:#e8f1f3;line-height:16px;white-space:nowrap;overflow:hidden;text-align:right;padding-right:1px;direction:rtl;"><span style="letter-spacing:-0.114px">3.07289183415582</span></div>
<div style="position:absolute;left:561px;top:528px;width:54px;height:16px;background:#e8f1f3;line-height:16px;white-space:nowrap;overflow:hidden;padding-left:1.500px;"><span style="letter-spacing:-0.059px">Mar/2009</span></div>
<div style="position:absolute;left:617px;top:528px;width:62px;height:16px;background:#e8f1f3;line-height:16px;white-space:nowrap;overflow:hidden;padding-left:1.500px;"><span style="letter-spacing:-0.108px">Compilação</span></div>
<div style="position:absolute;left:681px;top:528px;width:127px;height:16px;background:#e8f1f3;line-height:16px;white-space:nowrap;overflow:hidden;padding-left:1.500px;"><span style="letter-spacing:0.018px">MPOG/IBGE/DGC/CCAR</span></div>
<div style="position:absolute;left:810px;top:528px;width:330px;height:16px;background:#e8f1f3;line-height:16px;white-space:nowrap;overflow:hidden;padding-left:1.500px;color:#0b3160;"><span style="letter-spacing:-0.119px">0105000020AF7901000100000001020000000A000000</span></div>
<div style="position:absolute;left:18px;top:547px;width:37px;height:15px;background:#d1e3e9;line-height:14px;white-space:nowrap;text-align:center;font-size:9.350px;color:#0b3160;border-right:1px solid #3b6a6c;border-bottom:1px solid #3b6a6c;"><span style="letter-spacing:-0.071px">Editar</span></div>
<div style="position:absolute;left:58px;top:547px;width:43px;height:15px;background:#d1e3e9;line-height:14px;white-space:nowrap;text-align:center;font-size:9.350px;color:#0b3160;border-right:1px solid #3b6a6c;border-bottom:1px solid #3b6a6c;"><span style="letter-spacing:-0.02px">Deletar</span></div>
<div style="position:absolute;left:103px;top:546px;width:20px;height:16px;background:#d1e3e9;line-height:16px;white-space:nowrap;overflow:hidden;text-align:right;padding-right:1.500px;"><span style="letter-spacing:-0.118px">22</span></div>
<div style="position:absolute;left:125px;top:546px;width:15px;height:16px;background:#d1e3e9;line-height:16px;white-space:nowrap;overflow:hidden;text-align:right;padding-right:1.500px;"><span style="letter-spacing:-0.118px">22</span></div>
<div style="position:absolute;left:141px;top:546px;width:45px;height:16px;background:#d1e3e9;line-height:16px;white-space:nowrap;overflow:hidden;padding-left:1.500px;"><span style="letter-spacing:-0.118px">11298</span></div>
<div style="position:absolute;left:188px;top:546px;width:61px;height:16px;background:#d1e3e9;line-height:16px;white-space:nowrap;overflow:hidden;padding-left:1.500px;"><span style="letter-spacing:-0.315px">Sim</span></div>
<div style="position:absolute;left:251px;top:546px;width:63px;height:16px;background:#d1e3e9;line-height:16px;white-space:nowrap;overflow:hidden;padding-left:1.500px;"><span style="letter-spacing:-0.049px">Subterranea</span></div>
<div style="position:absolute;left:315.5px;top:546px;width:63px;height:16px;background:#d1e3e9;line-height:16px;white-space:nowrap;overflow:hidden;padding-left:1.500px;"><span style="letter-spacing:0.019px">Construído</span></div>
<div style="position:absolute;left:380px;top:546px;width:83px;height:16px;background:#d1e3e9;line-height:16px;white-space:nowrap;overflow:hidden;padding-left:1.500px;"><span style="letter-spacing:0.275px">Gás</span></div>
<div style="position:absolute;left:464.5px;top:546px;width:94.5px;height:16px;background:#d1e3e9;line-height:16px;white-space:nowrap;overflow:hidden;text-align:right;padding-right:1px;direction:rtl;"><span style="letter-spacing:-0.114px">49.5628991658743</span></div>
<div style="position:absolute;left:561px;top:546px;width:54px;height:16px;background:#d1e3e9;line-height:16px;white-space:nowrap;overflow:hidden;padding-left:1.500px;"><span style="letter-spacing:-0.059px">Mar/2009</span></div>
<div style="position:absolute;left:617px;top:546px;width:62px;height:16px;background:#d1e3e9;line-height:16px;white-space:nowrap;overflow:hidden;padding-left:1.500px;"><span style="letter-spacing:-0.108px">Compilação</span></div>
<div style="position:absolute;left:681px;top:546px;width:127px;height:16px;background:#d1e3e9;line-height:16px;white-space:nowrap;overflow:hidden;padding-left:1.500px;"><span style="letter-spacing:0.018px">MPOG/IBGE/DGC/CCAR</span></div>
<div style="position:absolute;left:810px;top:546px;width:330px;height:16px;background:#d1e3e9;line-height:16px;white-space:nowrap;overflow:hidden;padding-left:1.500px;color:#0b3160;"><span style="letter-spacing:-0.119px">0105000020AF7901000100000001020000000A000000</span></div>
<div style="position:absolute;left:18px;top:565px;width:37px;height:15px;background:#e8f1f3;line-height:14px;white-space:nowrap;text-align:center;font-size:9.350px;color:#0b3160;border-right:1px solid #3b6a6c;border-bottom:1px solid #3b6a6c;"><span style="letter-spacing:-0.071px">Editar</span></div>
<div style="position:absolute;left:58px;top:565px;width:43px;height:15px;background:#e8f1f3;line-height:14px;white-space:nowrap;text-align:center;font-size:9.350px;color:#0b3160;border-right:1px solid #3b6a6c;border-bottom:1px solid #3b6a6c;"><span style="letter-spacing:-0.02px">Deletar</span></div>
<div style="position:absolute;left:103px;top:564px;width:20px;height:16px;background:#e8f1f3;line-height:16px;white-space:nowrap;overflow:hidden;text-align:right;padding-right:1.500px;"><span style="letter-spacing:-0.118px">23</span></div>
<div style="position:absolute;left:125px;top:564px;width:15px;height:16px;background:#e8f1f3;line-height:16px;white-space:nowrap;overflow:hidden;text-align:right;padding-right:1.500px;"><span style="letter-spacing:-0.118px">23</span></div>
<div style="position:absolute;left:141px;top:564px;width:45px;height:16px;background:#e8f1f3;line-height:16px;white-space:nowrap;overflow:hidden;padding-left:1.500px;"><span style="letter-spacing:-0.118px">11298</span></div>
<div style="position:absolute;left:188px;top:564px;width:61px;height:16px;background:#e8f1f3;line-height:16px;white-space:nowrap;overflow:hidden;padding-left:1.500px;"><span style="letter-spacing:-0.315px">Sim</span></div>
<div style="position:absolute;left:251px;top:564px;width:63px;height:16px;background:#e8f1f3;line-height:16px;white-space:nowrap;overflow:hidden;padding-left:1.500px;"><span style="letter-spacing:-0.049px">Subterranea</span></div>
<div style="position:absolute;left:315.5px;top:564px;width:63px;height:16px;background:#e8f1f3;line-height:16px;white-space:nowrap;overflow:hidden;padding-left:1.500px;"><span style="letter-spacing:0.019px">Construído</span></div>
<div style="position:absolute;left:380px;top:564px;width:83px;height:16px;background:#e8f1f3;line-height:16px;white-space:nowrap;overflow:hidden;padding-left:1.500px;"><span style="letter-spacing:0.275px">Gás</span></div>
<div style="position:absolute;left:464.5px;top:564px;width:94.5px;height:16px;background:#e8f1f3;line-height:16px;white-space:nowrap;overflow:hidden;text-align:right;padding-right:1px;direction:rtl;"><span style="letter-spacing:-0.114px">282.64454443687</span></div>
<div style="position:absolute;left:561px;top:564px;width:54px;height:16px;background:#e8f1f3;line-height:16px;white-space:nowrap;overflow:hidden;padding-left:1.500px;"><span style="letter-spacing:-0.059px">Mar/2009</span></div>
<div style="position:absolute;left:617px;top:564px;width:62px;height:16px;background:#e8f1f3;line-height:16px;white-space:nowrap;overflow:hidden;padding-left:1.500px;"><span style="letter-spacing:-0.108px">Compilação</span></div>
<div style="position:absolute;left:681px;top:564px;width:127px;height:16px;background:#e8f1f3;line-height:16px;white-space:nowrap;overflow:hidden;padding-left:1.500px;"><span style="letter-spacing:0.018px">MPOG/IBGE/DGC/CCAR</span></div>
<div style="position:absolute;left:810px;top:564px;width:330px;height:16px;background:#e8f1f3;line-height:16px;white-space:nowrap;overflow:hidden;padding-left:1.500px;color:#0b3160;"><span style="letter-spacing:-0.119px">0105000020AF7901000100000001020000000A000000</span></div>
<div style="position:absolute;left:18px;top:583px;width:37px;height:15px;background:#d1e3e9;line-height:14px;white-space:nowrap;text-align:center;font-size:9.350px;color:#0b3160;border-right:1px solid #3b6a6c;border-bottom:1px solid #3b6a6c;"><span style="letter-spacing:-0.071px">Editar</span></div>
<div style="position:absolute;left:58px;top:583px;width:43px;height:15px;background:#d1e3e9;line-height:14px;white-space:nowrap;text-align:center;font-size:9.350px;color:#0b3160;border-right:1px solid #3b6a6c;border-bottom:1px solid #3b6a6c;"><span style="letter-spacing:-0.02px">Deletar</span></div>
<div style="position:absolute;left:103px;top:582px;width:20px;height:16px;background:#d1e3e9;line-height:16px;white-space:nowrap;overflow:hidden;text-align:right;padding-right:1.500px;"><span style="letter-spacing:-0.118px">24</span></div>
<div style="position:absolute;left:125px;top:582px;width:15px;height:16px;background:#d1e3e9;line-height:16px;white-space:nowrap;overflow:hidden;text-align:right;padding-right:1.500px;"><span style="letter-spacing:-0.118px">24</span></div>
<div style="position:absolute;left:141px;top:582px;width:45px;height:16px;background:#d1e3e9;line-height:16px;white-space:nowrap;overflow:hidden;padding-left:1.500px;"><span style="letter-spacing:-0.118px">11298</span></div>
<div style="position:absolute;left:188px;top:582px;width:61px;height:16px;background:#d1e3e9;line-height:16px;white-space:nowrap;overflow:hidden;padding-left:1.500px;"><span style="letter-spacing:-0.315px">Sim</span></div>
<div style="position:absolute;left:251px;top:582px;width:63px;height:16px;background:#d1e3e9;line-height:16px;white-space:nowrap;overflow:hidden;padding-left:1.500px;"><span style="letter-spacing:-0.049px">Subterranea</span></div>
<div style="position:absolute;left:315.5px;top:582px;width:63px;height:16px;background:#d1e3e9;line-height:16px;white-space:nowrap;overflow:hidden;padding-left:1.500px;"><span style="letter-spacing:0.019px">Construído</span></div>
<div style="position:absolute;left:380px;top:582px;width:83px;height:16px;background:#d1e3e9;line-height:16px;white-space:nowrap;overflow:hidden;padding-left:1.500px;"><span style="letter-spacing:0.275px">Gás</span></div>
<div style="position:absolute;left:464.5px;top:582px;width:94.5px;height:16px;background:#d1e3e9;line-height:16px;white-space:nowrap;overflow:hidden;text-align:right;padding-right:1px;direction:rtl;"><span style="letter-spacing:-0.114px">176.659263766757</span></div>
<div style="position:absolute;left:561px;top:582px;width:54px;height:16px;background:#d1e3e9;line-height:16px;white-space:nowrap;overflow:hidden;padding-left:1.500px;"><span style="letter-spacing:-0.059px">Mar/2009</span></div>
<div style="position:absolute;left:617px;top:582px;width:62px;height:16px;background:#d1e3e9;line-height:16px;white-space:nowrap;overflow:hidden;padding-left:1.500px;"><span style="letter-spacing:-0.108px">Compilação</span></div>
<div style="position:absolute;left:681px;top:582px;width:127px;height:16px;background:#d1e3e9;line-height:16px;white-space:nowrap;overflow:hidden;padding-left:1.500px;"><span style="letter-spacing:0.018px">MPOG/IBGE/DGC/CCAR</span></div>
<div style="position:absolute;left:810px;top:582px;width:330px;height:16px;background:#d1e3e9;line-height:16px;white-space:nowrap;overflow:hidden;padding-left:1.500px;color:#0b3160;"><span style="letter-spacing:-0.119px">0105000020AF7901000100000001020000000A000000</span></div>
<div style="position:absolute;left:18px;top:601px;width:37px;height:15px;background:#e8f1f3;line-height:14px;white-space:nowrap;text-align:center;font-size:9.350px;color:#0b3160;border-right:1px solid #3b6a6c;border-bottom:1px solid #3b6a6c;"><span style="letter-spacing:-0.071px">Editar</span></div>
<div style="position:absolute;left:58px;top:601px;width:43px;height:15px;background:#e8f1f3;line-height:14px;white-space:nowrap;text-align:center;font-size:9.350px;color:#0b3160;border-right:1px solid #3b6a6c;border-bottom:1px solid #3b6a6c;"><span style="letter-spacing:-0.02px">Deletar</span></div>
<div style="position:absolute;left:103px;top:600px;width:20px;height:16px;background:#e8f1f3;line-height:16px;white-space:nowrap;overflow:hidden;text-align:right;padding-right:1.500px;"><span style="letter-spacing:-0.118px">25</span></div>
<div style="position:absolute;left:125px;top:600px;width:15px;height:16px;background:#e8f1f3;line-height:16px;white-space:nowrap;overflow:hidden;text-align:right;padding-right:1.500px;"><span style="letter-spacing:-0.118px">25</span></div>
<div style="position:absolute;left:141px;top:600px;width:45px;height:16px;background:#e8f1f3;line-height:16px;white-space:nowrap;overflow:hidden;padding-left:1.500px;"><span style="letter-spacing:-0.118px">11298</span></div>
<div style="position:absolute;left:188px;top:600px;width:61px;height:16px;background:#e8f1f3;line-height:16px;white-space:nowrap;overflow:hidden;padding-left:1.500px;"><span style="letter-spacing:-0.315px">Sim</span></div>
<div style="position:absolute;left:251px;top:600px;width:63px;height:16px;background:#e8f1f3;line-height:16px;white-space:nowrap;overflow:hidden;padding-left:1.500px;"><span style="letter-spacing:-0.049px">Subterranea</span></div>
<div style="position:absolute;left:315.5px;top:600px;width:63px;height:16px;background:#e8f1f3;line-height:16px;white-space:nowrap;overflow:hidden;padding-left:1.500px;"><span style="letter-spacing:0.019px">Construído</span></div>
<div style="position:absolute;left:380px;top:600px;width:83px;height:16px;background:#e8f1f3;line-height:16px;white-space:nowrap;overflow:hidden;padding-left:1.500px;"><span style="letter-spacing:-0.05px">Sem Informação</span></div>
<div style="position:absolute;left:464.5px;top:600px;width:94.5px;height:16px;background:#e8f1f3;line-height:16px;white-space:nowrap;overflow:hidden;text-align:right;padding-right:1px;direction:rtl;"><span style="letter-spacing:-0.114px">6.1519941332465</span></div>
<div style="position:absolute;left:561px;top:600px;width:54px;height:16px;background:#e8f1f3;line-height:16px;white-space:nowrap;overflow:hidden;padding-left:1.500px;"><span style="letter-spacing:-0.059px">Mar/2009</span></div>
<div style="position:absolute;left:617px;top:600px;width:62px;height:16px;background:#e8f1f3;line-height:16px;white-space:nowrap;overflow:hidden;padding-left:1.500px;"><span style="letter-spacing:-0.108px">Compilação</span></div>
<div style="position:absolute;left:681px;top:600px;width:127px;height:16px;background:#e8f1f3;line-height:16px;white-space:nowrap;overflow:hidden;padding-left:1.500px;"><span style="letter-spacing:0.018px">MPOG/IBGE/DGC/CCAR</span></div>
<div style="position:absolute;left:810px;top:600px;width:330px;height:16px;background:#e8f1f3;line-height:16px;white-space:nowrap;overflow:hidden;padding-left:1.500px;color:#0b3160;"><span style="letter-spacing:-0.119px">0105000020AF7901000100000001020000000A000000</span></div>
<div style="position:absolute;left:18px;top:619px;width:37px;height:15px;background:#d1e3e9;line-height:14px;white-space:nowrap;text-align:center;font-size:9.350px;color:#0b3160;border-right:1px solid #3b6a6c;border-bottom:1px solid #3b6a6c;"><span style="letter-spacing:-0.071px">Editar</span></div>
<div style="position:absolute;left:58px;top:619px;width:43px;height:15px;background:#d1e3e9;line-height:14px;white-space:nowrap;text-align:center;font-size:9.350px;color:#0b3160;border-right:1px solid #3b6a6c;border-bottom:1px solid #3b6a6c;"><span style="letter-spacing:-0.02px">Deletar</span></div>
<div style="position:absolute;left:103px;top:618px;width:20px;height:16px;background:#d1e3e9;line-height:16px;white-space:nowrap;overflow:hidden;text-align:right;padding-right:1.500px;"><span style="letter-spacing:-0.118px">26</span></div>
<div style="position:absolute;left:125px;top:618px;width:15px;height:16px;background:#d1e3e9;line-height:16px;white-space:nowrap;overflow:hidden;text-align:right;padding-right:1.500px;"><span style="letter-spacing:-0.118px">26</span></div>
<div style="position:absolute;left:141px;top:618px;width:45px;height:16px;background:#d1e3e9;line-height:16px;white-space:nowrap;overflow:hidden;padding-left:1.500px;"><span style="letter-spacing:-0.118px">11298</span></div>
<div style="position:absolute;left:188px;top:618px;width:61px;height:16px;background:#d1e3e9;line-height:16px;white-space:nowrap;overflow:hidden;padding-left:1.500px;"><span style="letter-spacing:-0.315px">Sim</span></div>
<div style="position:absolute;left:251px;top:618px;width:63px;height:16px;background:#d1e3e9;line-height:16px;white-space:nowrap;overflow:hidden;padding-left:1.500px;"><span style="letter-spacing:-0.049px">Subterranea</span></div>
<div style="position:absolute;left:315.5px;top:618px;width:63px;height:16px;background:#d1e3e9;line-height:16px;white-space:nowrap;overflow:hidden;padding-left:1.500px;"><span style="letter-spacing:0.019px">Construído</span></div>
<div style="position:absolute;left:380px;top:618px;width:83px;height:16px;background:#d1e3e9;line-height:16px;white-space:nowrap;overflow:hidden;padding-left:1.500px;"><span style="letter-spacing:0.275px">Gás</span></div>
<div style="position:absolute;left:464.5px;top:618px;width:94.5px;height:16px;background:#d1e3e9;line-height:16px;white-space:nowrap;overflow:hidden;text-align:right;padding-right:1px;direction:rtl;"><span style="letter-spacing:-0.114px">198.632866459428</span></div>
<div style="position:absolute;left:561px;top:618px;width:54px;height:16px;background:#d1e3e9;line-height:16px;white-space:nowrap;overflow:hidden;padding-left:1.500px;"><span style="letter-spacing:-0.059px">Mar/2009</span></div>
<div style="position:absolute;left:617px;top:618px;width:62px;height:16px;background:#d1e3e9;line-height:16px;white-space:nowrap;overflow:hidden;padding-left:1.500px;"><span style="letter-spacing:-0.108px">Compilação</span></div>
<div style="position:absolute;left:681px;top:618px;width:127px;height:16px;background:#d1e3e9;line-height:16px;white-space:nowrap;overflow:hidden;padding-left:1.500px;"><span style="letter-spacing:0.018px">MPOG/IBGE/DGC/CCAR</span></div>
<div style="position:absolute;left:810px;top:618px;width:330px;height:16px;background:#d1e3e9;line-height:16px;white-space:nowrap;overflow:hidden;padding-left:1.500px;color:#0b3160;"><span style="letter-spacing:-0.119px">0105000020AF7901000100000001020000000A000000</span></div>
<div style="position:absolute;left:18px;top:637px;width:37px;height:15px;background:#e8f1f3;line-height:14px;white-space:nowrap;text-align:center;font-size:9.350px;color:#0b3160;border-right:1px solid #3b6a6c;border-bottom:1px solid #3b6a6c;"><span style="letter-spacing:-0.071px">Editar</span></div>
<div style="position:absolute;left:58px;top:637px;width:43px;height:15px;background:#e8f1f3;line-height:14px;white-space:nowrap;text-align:center;font-size:9.350px;color:#0b3160;border-right:1px solid #3b6a6c;border-bottom:1px solid #3b6a6c;"><span style="letter-spacing:-0.02px">Deletar</span></div>
<div style="position:absolute;left:103px;top:636px;width:20px;height:16px;background:#e8f1f3;line-height:16px;white-space:nowrap;overflow:hidden;text-align:right;padding-right:1.500px;"><span style="letter-spacing:-0.118px">27</span></div>
<div style="position:absolute;left:125px;top:636px;width:15px;height:16px;background:#e8f1f3;line-height:16px;white-space:nowrap;overflow:hidden;text-align:right;padding-right:1.500px;"><span style="letter-spacing:-0.118px">27</span></div>
<div style="position:absolute;left:141px;top:636px;width:45px;height:16px;background:#e8f1f3;line-height:16px;white-space:nowrap;overflow:hidden;padding-left:1.500px;"><span style="letter-spacing:-0.118px">11298</span></div>
<div style="position:absolute;left:188px;top:636px;width:61px;height:16px;background:#e8f1f3;line-height:16px;white-space:nowrap;overflow:hidden;padding-left:1.500px;"><span style="letter-spacing:-0.315px">Sim</span></div>
<div style="position:absolute;left:251px;top:636px;width:63px;height:16px;background:#e8f1f3;line-height:16px;white-space:nowrap;overflow:hidden;padding-left:1.500px;"><span style="letter-spacing:-0.049px">Subterranea</span></div>
<div style="position:absolute;left:315.5px;top:636px;width:63px;height:16px;background:#e8f1f3;line-height:16px;white-space:nowrap;overflow:hidden;padding-left:1.500px;"><span style="letter-spacing:0.019px">Construído</span></div>
<div style="position:absolute;left:380px;top:636px;width:83px;height:16px;background:#e8f1f3;line-height:16px;white-space:nowrap;overflow:hidden;padding-left:1.500px;"><span style="letter-spacing:-0.05px">Sem Informação</span></div>
<div style="position:absolute;left:464.5px;top:636px;width:94.5px;height:16px;background:#e8f1f3;line-height:16px;white-space:nowrap;overflow:hidden;text-align:right;padding-right:1px;direction:rtl;"><span style="letter-spacing:-0.114px">19.117274232609</span></div>
<div style="position:absolute;left:561px;top:636px;width:54px;height:16px;background:#e8f1f3;line-height:16px;white-space:nowrap;overflow:hidden;padding-left:1.500px;"><span style="letter-spacing:-0.059px">Mar/2009</span></div>
<div style="position:absolute;left:617px;top:636px;width:62px;height:16px;background:#e8f1f3;line-height:16px;white-space:nowrap;overflow:hidden;padding-left:1.500px;"><span style="letter-spacing:-0.108px">Compilação</span></div>
<div style="position:absolute;left:681px;top:636px;width:127px;height:16px;background:#e8f1f3;line-height:16px;white-space:nowrap;overflow:hidden;padding-left:1.500px;"><span style="letter-spacing:0.018px">MPOG/IBGE/DGC/CCAR</span></div>
<div style="position:absolute;left:810px;top:636px;width:330px;height:16px;background:#e8f1f3;line-height:16px;white-space:nowrap;overflow:hidden;padding-left:1.500px;color:#0b3160;"><span style="letter-spacing:-0.119px">0105000020AF7901000100000001020000000A000000</span></div>
<div style="position:absolute;left:18px;top:655px;width:37px;height:15px;background:#d1e3e9;line-height:14px;white-space:nowrap;text-align:center;font-size:9.350px;color:#0b3160;border-right:1px solid #3b6a6c;border-bottom:1px solid #3b6a6c;"><span style="letter-spacing:-0.071px">Editar</span></div>
<div style="position:absolute;left:58px;top:655px;width:43px;height:15px;background:#d1e3e9;line-height:14px;white-space:nowrap;text-align:center;font-size:9.350px;color:#0b3160;border-right:1px solid #3b6a6c;border-bottom:1px solid #3b6a6c;"><span style="letter-spacing:-0.02px">Deletar</span></div>
<div style="position:absolute;left:103px;top:654px;width:20px;height:16px;background:#d1e3e9;line-height:16px;white-space:nowrap;overflow:hidden;text-align:right;padding-right:1.500px;"><span style="letter-spacing:-0.118px">28</span></div>
<div style="position:absolute;left:125px;top:654px;width:15px;height:16px;background:#d1e3e9;line-height:16px;white-space:nowrap;overflow:hidden;text-align:right;padding-right:1.500px;"><span style="letter-spacing:-0.118px">28</span></div>
<div style="position:absolute;left:141px;top:654px;width:45px;height:16px;background:#d1e3e9;line-height:16px;white-space:nowrap;overflow:hidden;padding-left:1.500px;"><span style="letter-spacing:-0.118px">11298</span></div>
<div style="position:absolute;left:188px;top:654px;width:61px;height:16px;background:#d1e3e9;line-height:16px;white-space:nowrap;overflow:hidden;padding-left:1.500px;"><span style="letter-spacing:-0.315px">Sim</span></div>
<div style="position:absolute;left:251px;top:654px;width:63px;height:16px;background:#d1e3e9;line-height:16px;white-space:nowrap;overflow:hidden;padding-left:1.500px;"><span style="letter-spacing:-0.049px">Subterranea</span></div>
<div style="position:absolute;left:315.5px;top:654px;width:63px;height:16px;background:#d1e3e9;line-height:16px;white-space:nowrap;overflow:hidden;padding-left:1.500px;"><span style="letter-spacing:0.019px">Construído</span></div>
<div style="position:absolute;left:380px;top:654px;width:83px;height:16px;background:#d1e3e9;line-height:16px;white-space:nowrap;overflow:hidden;padding-left:1.500px;"><span style="letter-spacing:-0.059px">Óleo</span></div>
<div style="position:absolute;left:464.5px;top:654px;width:94.5px;height:16px;background:#d1e3e9;line-height:16px;white-space:nowrap;overflow:hidden;text-align:right;padding-right:1px;direction:rtl;"><span style="letter-spacing:-0.114px">24.526404050302</span></div>
<div style="position:absolute;left:561px;top:654px;width:54px;height:16px;background:#d1e3e9;line-height:16px;white-space:nowrap;overflow:hidden;padding-left:1.500px;"><span style="letter-spacing:-0.059px">Mar/2009</span></div>
<div style="position:absolute;left:617px;top:654px;width:62px;height:16px;background:#d1e3e9;line-height:16px;white-space:nowrap;overflow:hidden;padding-left:1.500px;"><span style="letter-spacing:-0.108px">Compilação</span></div>
<div style="position:absolute;left:681px;top:654px;width:127px;height:16px;background:#d1e3e9;line-height:16px;white-space:nowrap;overflow:hidden;padding-left:1.500px;"><span style="letter-spacing:0.018px">MPOG/IBGE/DGC/CCAR</span></div>
<div style="position:absolute;left:810px;top:654px;width:330px;height:16px;background:#d1e3e9;line-height:16px;white-space:nowrap;overflow:hidden;padding-left:1.500px;color:#0b3160;"><span style="letter-spacing:-0.119px">0105000020AF7901000100000001020000000A000000</span></div>
<div style="position:absolute;left:917px;top:645px;width:83px;height:22px;background:#e8f1f3;border:1px solid #d3e4e9;border-right:0;border-bottom:0;line-height:21px;text-align:center;color:#0e3866;white-space:nowrap">Topo da página</div>
</div>
<!-- right frame scrollbars -->
<div class="abs" style="left:1351px;top:86px;width:15px;height:667px;background:#d3d3d3;border-left:1px solid #9b9b9b;border-right:1px solid #9b9b9b"></div>
<div class="abs" style="left:1351px;top:86px;width:15px;height:15px;background:#fff;border:1px solid #9b9b9b;border-radius:3px 3px 0 0"></div>
<div class="abs" style="left:1351px;top:100px;width:15px;height:515px;background:linear-gradient(90deg,#f3f3f3 0,#f1f1f1 50%,#e6e6e6 50%,#e4e4e4 100%);border:1px solid #9b9b9b"></div>
<div class="abs" style="left:1351px;top:739px;width:15px;height:15px;background:#fff;border:1px solid #9b9b9b;border-radius:0 0 3px 3px"></div>
<svg class="abs" style="left:1351px;top:86px" width="15" height="667" viewBox="0 0 15 667"><path d="M4 9.500h7L7.500 5z" fill="#a0a0a0"/><path d="M4 658h7L7.500 662.500z" fill="#000"/><path d="M5 268.500h5M5 271.500h5M5 274.500h5" stroke="#8a8a8a" stroke-width="1"/></svg>
<div class="abs" style="left:357px;top:753px;width:995px;height:15px;background:#d3d3d3;border-top:1px solid #9b9b9b;border-bottom:1px solid #9b9b9b"></div>
<div class="abs" style="left:351px;top:753px;width:7px;height:15px;background:#fff"></div>
<div class="abs" style="left:357px;top:753px;width:15px;height:15px;background:#fff;border:1px solid #9b9b9b;border-radius:3px 0 0 3px"></div>
<div class="abs" style="left:371px;top:753px;width:857px;height:15px;background:linear-gradient(#f3f3f3 0,#f1f1f1 50%,#e6e6e6 50%,#e4e4e4 100%);border:1px solid #9b9b9b"></div>
<div class="abs" style="left:1337px;top:753px;width:15px;height:15px;background:#fff;border:1px solid #9b9b9b;border-radius:0 3px 3px 0"></div>
<svg class="abs" style="left:357px;top:753px" width="995" height="15" viewBox="0 0 995 15"><path d="M9.500 4v7L5 7.500z" fill="#a0a0a0"/><path d="M985.500 4v7L990 7.500z" fill="#000"/><path d="M439.500 5v5M442.500 5v5M445.500 5v5" stroke="#8a8a8a" stroke-width="1"/></svg>
<div class="abs" style="left:1352px;top:753px;width:14px;height:15px;background:#efefef"></div>
<!-- ===== popup window (showmap) ===== -->
<div class="abs" style="left:390px;top:219px;width:428px;height:479px;background:#3b69c4;border:1px solid #1f3568;border-radius:5px 5px 2px 2px;box-shadow:0 1px 3px rgba(0,0,0,.35)"></div>
<div class="abs" style="left:391px;top:220px;width:426px;height:27px;background:linear-gradient(#76a0e6 0,#5b8add 35%,#4274cf 100%);border-radius:4px 4px 0 0"></div>
<!-- window buttons -->
<svg class="abs" style="left:395px;top:223px" width="96" height="18" viewBox="0 0 96 18">
 <g fill="rgba(255,255,255,.06)" stroke="#7b9fe4" stroke-width="1"><rect x=".5" y=".500" width="21" height="15.500" rx="1.500"/><rect x="26.500" y=".500" width="21" height="15.500" rx="1.500"/><rect x="52.500" y=".500" width="21" height="15.500" rx="1.500"/></g>
 <path d="M6.500 3.500l9 9M15.500 3.500l-9 9" stroke="#fff" stroke-width="1.700"/>
 <path d="M32 11.500h10" stroke="#fff" stroke-width="2"/>
 <rect x="58.700" y="4.800" width="9" height="6.700" rx="1" fill="none" stroke="#fff" stroke-width="1.400"/><path d="M58.700 5.300h9" stroke="#fff" stroke-width="1.800"/>
 <!-- chrome icon -->
 <g transform="translate(78,2.500)"><circle cx="7" cy="7" r="7" fill="#e8e8e8"/><path d="M7 0a7 7 0 0 1 6.060 3.500H7A3.500 3.500 0 0 0 3.970 5.250L.94 3.500A7 7 0 0 1 7 0z" fill="#dc4437"/><path d="M13.060 3.500A7 7 0 0 1 7 14l3.030-5.250A3.500 3.500 0 0 0 10.030 5.250L7 3.500z" fill="#f9cd28"/><path d="M7 14A7 7 0 0 1 .94 3.500l3.030 5.250A3.500 3.500 0 0 0 7 10.500l3.030-1.750z" fill="#4bae4f"/><circle cx="7" cy="7" r="3.300" fill="#f4f4f4"/><circle cx="7" cy="7" r="2.600" fill="#4a8af4"/></g>
</svg>
<div class="abs ui" style="left:493px;top:223px;height:22px;line-height:22px;font-size:14.500px;color:#f4f7ff"><span class="sx" style="transform:scaleX(1.02)">127.0.0.1/phppggis-5.1/showmap.php?id_geo…</span></div>
<!-- url bar -->
<div class="abs" style="left:394px;top:246px;width:421px;height:449px;background:#fff"></div>
<div class="abs" style="left:394px;top:246px;width:419px;height:26px;background:#fff;border:1px solid #c9ced8;border-bottom:2px solid #b7bcc6;border-radius:3px 3px 0 0"></div>
<div class="abs" style="left:813px;top:247px;width:2px;height:448px;background:#7f9fdb"></div>
<svg class="abs" style="left:403px;top:252px" width="12" height="15" viewBox="0 0 12 15"><path d="M.5.500h7l4 4v10H.5z" fill="#fbfbfb" stroke="#8d8d8d"/><path d="M7.500.500v4h4" fill="#e3e3e3" stroke="#8d8d8d"/></svg>
<div class="abs ui" style="left:422.500px;top:250px;height:18px;line-height:18px;font-size:12px;color:#000;-webkit-text-stroke:.12px #000"><span class="sx" style="transform:scaleX(.835)">127.0.0.1</span></div>
<div class="abs ui" style="left:465.500px;top:250px;width:346px;height:18px;line-height:18px;font-size:12px;color:#777;overflow:hidden"><span class="sx" style="transform:scaleX(.885)">/phppggis-5.1/showmap.php?id_geom=gid&amp;id_geom_value=10&amp;the_geom=the_geom</span></div>
<div class="abs" style="left:802px;top:250px;width:10px;height:18px;background:linear-gradient(90deg,rgba(255,255,255,0),#fff)"></div>
<svg class="abs" style="left:394px;top:272px" width="420" height="422" viewBox="0 0 420 422"><g fill="none" stroke="#c8c8c8" stroke-width="2.200" stroke-linejoin="round" stroke-linecap="round"><path d="M8.4 317.2C10.9 317.0 17.5 315.8 23.3 315.9C29.2 316.0 36.8 316.9 43.5 317.8C50.2 318.7 57.9 321.2 63.6 321.5C69.3 321.8 70.6 320.0 77.6 319.7C84.6 319.4 98.3 319.2 105.5 319.7C112.7 320.2 115.8 321.3 121.0 322.8C126.2 324.2 131.4 326.5 136.6 328.4C141.8 330.2 145.9 332.1 152.1 333.9C158.3 335.7 166.0 337.3 173.8 339.2C181.6 341.1 191.5 343.8 198.7 345.4C206.0 347.0 212.1 347.8 217.3 348.8C222.5 349.8 226.1 351.0 229.7 351.6C233.3 352.2 235.4 352.6 239.0 352.3C242.6 352.0 246.2 349.9 251.4 350.0C256.6 350.1 263.8 351.8 270.0 352.6C276.2 353.4 285.6 354.4 288.7 354.7"/><path d="M242.1 309.1C243.9 309.7 248.9 310.1 253.0 312.8C257.1 315.5 263.0 321.3 266.9 325.2C270.8 329.1 272.6 331.2 276.2 336.1C279.8 341.0 284.0 349.3 288.7 354.7C293.4 360.1 298.5 364.3 304.2 368.7C309.9 373.1 317.6 378.3 322.8 381.1C328.0 383.9 331.1 384.9 335.2 385.8C339.3 386.7 343.2 386.8 347.6 386.4C352.0 386.0 356.9 386.1 361.6 383.6C366.3 381.1 371.2 374.3 375.6 371.2C380.0 368.1 383.9 366.7 388.0 365.0C392.1 363.3 397.2 362.1 400.4 360.9C403.6 359.7 406.1 358.3 407.2 357.8"/><path d="M121.0 322.8C119.7 325.5 116.4 334.9 113.3 339.2C110.2 343.5 106.3 345.4 102.4 348.5C98.5 351.6 92.8 354.4 90.0 357.8C87.2 361.2 85.9 365.1 85.4 368.7C84.9 372.3 84.6 375.0 86.9 379.6C89.2 384.2 95.9 391.6 99.3 396.6C102.7 401.6 105.8 407.5 107.1 409.7"/><path d="M229.7 351.6C227.6 353.4 224.5 358.2 217.3 362.5C210.0 366.8 195.0 373.9 186.2 377.4C177.4 380.9 171.7 381.3 164.5 383.6C157.3 385.9 147.2 388.7 142.8 391.4C138.4 394.1 139.8 396.7 138.1 399.7C136.4 402.8 133.7 408.0 132.8 409.7"/><path d="M197.9 10.5C198.4 12.2 199.7 16.7 201.0 20.9C202.3 25.1 205.6 31.0 205.8 35.5C206.0 40.0 203.2 43.1 202.0 48.0C200.8 52.9 199.6 59.7 198.9 64.7C198.2 69.7 197.5 73.9 197.9 78.2C198.3 82.5 199.8 86.0 201.4 90.7C203.0 95.4 206.3 103.0 207.3 106.3C208.3 109.6 206.4 107.7 207.3 110.5C208.2 113.3 211.2 118.5 212.5 123.0C213.8 127.5 214.8 132.7 215.0 137.6C215.2 142.5 214.1 148.1 213.5 152.2C212.9 156.3 213.1 157.6 211.6 162.0C210.1 166.4 206.2 173.6 204.5 178.5C202.8 183.4 201.3 187.5 201.7 191.4C202.1 195.3 204.3 197.2 206.9 201.9C209.5 206.6 215.2 214.8 217.4 219.5C219.6 224.2 219.7 224.1 220.3 230.0C220.9 235.9 219.7 249.0 221.0 254.7C222.3 260.4 225.2 260.1 228.0 264.0C230.8 267.9 235.2 273.5 238.0 278.0C240.8 282.5 244.5 287.7 244.9 291.0C245.3 294.3 241.1 295.3 240.4 298.0C239.7 300.7 240.6 305.5 240.9 307.4C241.2 309.2 241.9 308.8 242.1 309.1"/></g><path d="M207.1 110.6C205.5 111.5 196.7 116.9 193.6 118.7C190.5 120.5 183.3 124.5 180.8 126.2C178.3 127.9 173.2 131.7 172.3 133.0C171.4 134.3 172.2 135.6 172.8 137.2C173.4 138.8 176.5 144.9 177.2 146.3C177.9 147.7 178.1 147.8 178.8 149.2C179.5 150.6 182.1 156.7 183.4 158.6C184.7 160.5 189.2 163.6 189.8 165.6C190.4 167.6 189.4 173.6 188.8 176.1C188.2 178.6 185.1 184.1 184.6 186.7C184.1 189.3 183.6 195.5 184.6 198.4C185.6 201.3 191.7 209.1 192.8 211.3C193.9 213.5 194.2 215.7 194.0 217.2C193.8 218.7 191.1 221.7 191.2 224.2C191.3 226.7 193.6 235.2 195.2 238.3C196.8 241.5 203.1 248.2 204.5 251.2C205.9 254.2 207.1 260.7 206.9 264.1C206.7 267.5 202.1 278.0 202.9 280.5C203.7 283.0 212.1 283.0 213.9 285.2C215.6 287.4 216.4 296.7 217.9 299.2C219.4 301.7 224.0 305.8 226.8 307.0C229.6 308.2 240.2 309.0 242.0 309.3" fill="none" stroke="#8e8ad2" stroke-width="4.500" stroke-linejoin="round" stroke-linecap="round"/><path d="M207.1 110.6C205.5 111.5 196.7 116.9 193.6 118.7C190.5 120.5 183.3 124.5 180.8 126.2C178.3 127.9 173.2 131.7 172.3 133.0C171.4 134.3 172.2 135.6 172.8 137.2C173.4 138.8 176.5 144.9 177.2 146.3C177.9 147.7 178.1 147.8 178.8 149.2C179.5 150.6 182.1 156.7 183.4 158.6C184.7 160.5 189.2 163.6 189.8 165.6C190.4 167.6 189.4 173.6 188.8 176.1C188.2 178.6 185.1 184.1 184.6 186.7C184.1 189.3 183.6 195.5 184.6 198.4C185.6 201.3 191.7 209.1 192.8 211.3C193.9 213.5 194.2 215.7 194.0 217.2C193.8 218.7 191.1 221.7 191.2 224.2C191.3 226.7 193.6 235.2 195.2 238.3C196.8 241.5 203.1 248.2 204.5 251.2C205.9 254.2 207.1 260.7 206.9 264.1C206.7 267.5 202.1 278.0 202.9 280.5C203.7 283.0 212.1 283.0 213.9 285.2C215.6 287.4 216.4 296.7 217.9 299.2C219.4 301.7 224.0 305.8 226.8 307.0C229.6 308.2 240.2 309.0 242.0 309.3" fill="none" stroke="#e2605c" stroke-width="3.100" stroke-linecap="round" stroke-dasharray="0.01 5"/></svg>
<svg class="abs" style="left:685px;top:409px" width="14" height="22" viewBox="0 0 14 22"><path d="M1 1v16l4-3.500 2.800 6.500 2.400-1-2.800-6.300H13z" fill="#fff" stroke="#000" stroke-width="1.100" stroke-linejoin="round"/></svg>
</body></html>
